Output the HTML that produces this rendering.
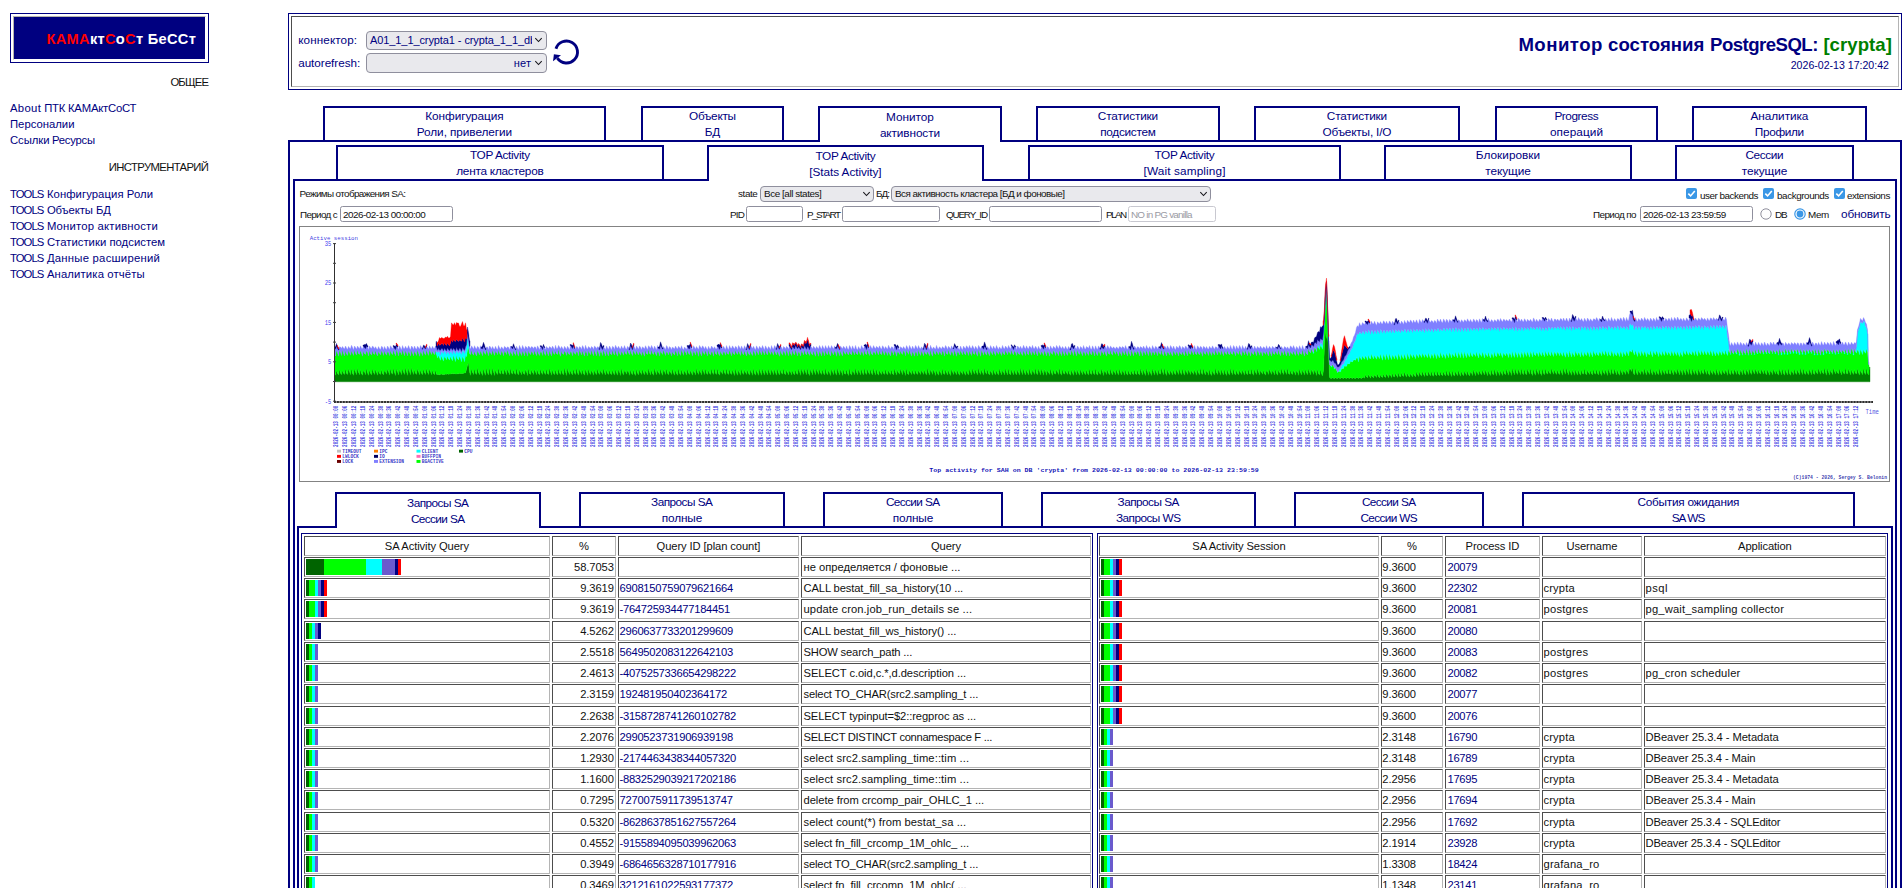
<!DOCTYPE html>
<html lang="ru"><head><meta charset="utf-8"><title>Monitor</title><style>
html,body{margin:0;padding:0;background:#fff;overflow:hidden;}
html{width:1904px;height:888px;}
body{width:1904px;height:888px;overflow:hidden;position:relative;font-family:"Liberation Sans",sans-serif;}
div,svg,span.t{position:absolute;box-sizing:content-box;}
span.t{white-space:pre;display:block;height:16px;}
</style></head><body>
<div id="root" style="left:0;top:0;width:1904px;height:888px;overflow:hidden;">
<div style="left:10px;top:13px;width:197px;height:48px;border:1px solid #000080;"></div>
<div style="left:13px;top:16px;width:191px;height:42px;border:1px solid;border-color:#b4b4ae #fff #fff #b4b4ae;background:#000080;"></div>
<span class="t" style="left:46.5px;top:30.94px;font-size:14.6px;font-weight:bold;letter-spacing:0.307px;line-height:16px;"><span style="color:#ff0000">КАМА</span><span style="color:#fff">кт</span><span style="color:#ff0000">С</span><span style="color:#fff">о</span><span style="color:#ff0000">С</span><span style="color:#fff">т БеССт</span></span>
<span class="t" style="left:170.39px;top:74.08px;font-size:11.3px;color:#111111;line-height:16px;letter-spacing:-0.815px;">ОБЩЕЕ</span>
<span class="t" style="left:10.00px;top:100.08px;font-size:11.3px;color:#000080;line-height:16px;letter-spacing:0.334px;">About</span>
<span class="t" style="left:44.20px;top:100.08px;font-size:11.3px;color:#000080;line-height:16px;letter-spacing:-0.202px;">ПТК</span>
<span class="t" style="left:68.00px;top:100.08px;font-size:11.3px;color:#000080;line-height:16px;letter-spacing:-0.215px;">КАМАктСоСТ</span>
<span class="t" style="left:10.00px;top:116.08px;font-size:11.3px;color:#000080;line-height:16px;">Персоналии</span>
<span class="t" style="left:10.00px;top:132.08px;font-size:11.3px;color:#000080;line-height:16px;letter-spacing:-0.047px;">Ссылки</span>
<span class="t" style="left:52.00px;top:132.08px;font-size:11.3px;color:#000080;line-height:16px;letter-spacing:-0.251px;">Ресурсы</span>
<span class="t" style="left:108.86px;top:159.08px;font-size:11.3px;color:#111111;line-height:16px;letter-spacing:-0.635px;">ИНСТРУМЕНТАРИЙ</span>
<span class="t" style="left:10.00px;top:186.08px;font-size:11.3px;color:#000080;line-height:16px;letter-spacing:-0.940px;">TOOLS</span>
<span class="t" style="left:46.90px;top:186.08px;font-size:11.3px;color:#000080;line-height:16px;letter-spacing:0.073px;">Конфигурация Роли</span>
<span class="t" style="left:10.00px;top:202.08px;font-size:11.3px;color:#000080;line-height:16px;letter-spacing:-0.940px;">TOOLS</span>
<span class="t" style="left:46.90px;top:202.08px;font-size:11.3px;color:#000080;line-height:16px;letter-spacing:-0.086px;">Объекты БД</span>
<span class="t" style="left:10.00px;top:218.08px;font-size:11.3px;color:#000080;line-height:16px;letter-spacing:-0.940px;">TOOLS</span>
<span class="t" style="left:46.90px;top:218.08px;font-size:11.3px;color:#000080;line-height:16px;letter-spacing:0.192px;">Монитор активности</span>
<span class="t" style="left:10.00px;top:234.08px;font-size:11.3px;color:#000080;line-height:16px;letter-spacing:-0.940px;">TOOLS</span>
<span class="t" style="left:46.90px;top:234.08px;font-size:11.3px;color:#000080;line-height:16px;letter-spacing:0.024px;">Статистики подсистем</span>
<span class="t" style="left:10.00px;top:250.08px;font-size:11.3px;color:#000080;line-height:16px;letter-spacing:-0.940px;">TOOLS</span>
<span class="t" style="left:46.90px;top:250.08px;font-size:11.3px;color:#000080;line-height:16px;letter-spacing:0.247px;">Данные расширений</span>
<span class="t" style="left:10.00px;top:266.08px;font-size:11.3px;color:#000080;line-height:16px;letter-spacing:-0.940px;">TOOLS</span>
<span class="t" style="left:46.90px;top:266.08px;font-size:11.3px;color:#000080;line-height:16px;letter-spacing:0.140px;">Аналитика отчёты</span>
<div style="left:288px;top:13px;width:1612px;height:75px;border:1px solid #000080;"></div>
<div style="left:291px;top:16px;width:1606px;height:69px;border:1px solid;border-color:#4d4d4d #b4b4b4 #b4b4b4 #4d4d4d;"></div>
<span class="t" style="left:298.20px;top:31.95px;font-size:11.7px;color:#000080;line-height:16px;letter-spacing:0.107px;">коннектор:</span>
<span class="t" style="left:298.20px;top:54.95px;font-size:11.7px;color:#000080;line-height:16px;letter-spacing:-0.036px;">autorefresh:</span>
<div style="left:366px;top:31px;width:179px;height:17px;border:1px solid #8f8f9d;border-radius:4px;background:#e9e9ed;overflow:hidden;"><svg width="9" height="6" viewBox="0 0 9 6" style="position:absolute;right:2.8px;top:5.0px"><path d="M1.3 1.2 L4.5 4.5 L7.7 1.2" fill="none" stroke="#15141a" stroke-width="1.05"/></svg></div>
<div style="left:366px;top:53px;width:179px;height:18px;border:1px solid #8f8f9d;border-radius:4px;background:#e9e9ed;overflow:hidden;"><svg width="9" height="6" viewBox="0 0 9 6" style="position:absolute;right:2.8px;top:5.5px"><path d="M1.3 1.2 L4.5 4.5 L7.7 1.2" fill="none" stroke="#15141a" stroke-width="1.05"/></svg></div>
<div style="left:369px;top:33px;width:162.5px;height:16px;overflow:hidden;">
<span class="t" style="left:1px;top:-0.81px;font-size:11px;color:#000080;line-height:16px;letter-spacing:-0.090px">A01_1_1_crypta1 - crypta_1_1_db</span></div>
<span class="t" style="left:513.71px;top:55.19px;font-size:11px;color:#000080;line-height:16px;letter-spacing:0.212px;">нет</span>
<svg style="left:540px;top:30px" width="50" height="46" viewBox="540 30 50 46"><path d="M555.98 48.78 A11.0 11.0 0 1 1 557.38 58.15" fill="none" stroke="#000080" stroke-width="2.9"/><polygon points="553.9,54.2 561.0,55.3 553.0,61.2" fill="#000080"/></svg>
<span class="t" style="left:1518.40px;top:36.56px;font-size:18.6px;color:#000080;line-height:16px;font-weight:bold;letter-spacing:0.484px;">Монитор</span>
<span class="t" style="left:1608.10px;top:36.56px;font-size:18.6px;color:#000080;line-height:16px;font-weight:bold;letter-spacing:0.015px;">состояния</span>
<span class="t" style="left:1710.10px;top:36.56px;font-size:18.6px;color:#000080;line-height:16px;font-weight:bold;letter-spacing:-0.535px;">PostgreSQL:</span>
<span class="t" style="left:1823.40px;top:36.56px;font-size:18.6px;color:#008000;line-height:16px;font-weight:bold;letter-spacing:0.036px;">[crypta]</span>
<span class="t" style="left:1790.74px;top:57.33px;font-size:10.6px;color:#000080;line-height:16px;letter-spacing:-0.009px;">2026-02-13 17:20:42</span>
<div style="left:288px;top:140px;width:1610px;height:1200px;border:2px solid #000080;z-index:2;"></div>
<div style="left:323px;top:106px;width:279px;height:32px;border:2px solid #000080;background:#fff;z-index:1;"></div>
<span class="t" style="left:425.31px;top:107.91px;font-size:11.8px;color:#000080;line-height:16px;letter-spacing:-0.074px;z-index:4;">Конфигурация</span>
<span class="t" style="left:416.81px;top:123.91px;font-size:11.8px;color:#000080;line-height:16px;letter-spacing:-0.073px;z-index:4;">Роли, привелегии</span>
<div style="left:641px;top:106px;width:139px;height:32px;border:2px solid #000080;background:#fff;z-index:1;"></div>
<span class="t" style="left:688.97px;top:107.91px;font-size:11.8px;color:#000080;line-height:16px;letter-spacing:-0.266px;z-index:4;">Объекты</span>
<span class="t" style="left:704.80px;top:123.91px;font-size:11.8px;color:#000080;line-height:16px;letter-spacing:-0.343px;z-index:4;">БД</span>
<div style="left:818px;top:106px;width:180px;height:34px;border:2px solid #000080;border-bottom:none;background:#fff;z-index:3;"></div>
<span class="t" style="left:886.08px;top:108.91px;font-size:11.8px;color:#000080;line-height:16px;letter-spacing:-0.033px;z-index:4;">Монитор</span>
<span class="t" style="left:879.92px;top:124.91px;font-size:11.8px;color:#000080;line-height:16px;letter-spacing:-0.105px;z-index:4;">активности</span>
<div style="left:1036px;top:106px;width:180px;height:32px;border:2px solid #000080;background:#fff;z-index:1;"></div>
<span class="t" style="left:1097.78px;top:107.91px;font-size:11.8px;color:#000080;line-height:16px;letter-spacing:-0.144px;z-index:4;">Статистики</span>
<span class="t" style="left:1100.20px;top:123.91px;font-size:11.8px;color:#000080;line-height:16px;letter-spacing:-0.291px;z-index:4;">подсистем</span>
<div style="left:1254px;top:106px;width:202px;height:32px;border:2px solid #000080;background:#fff;z-index:1;"></div>
<span class="t" style="left:1326.78px;top:107.91px;font-size:11.8px;color:#000080;line-height:16px;letter-spacing:-0.144px;z-index:4;">Статистики</span>
<span class="t" style="left:1322.51px;top:123.91px;font-size:11.8px;color:#000080;line-height:16px;letter-spacing:-0.180px;z-index:4;">Объекты, I/O</span>
<div style="left:1495px;top:106px;width:159px;height:32px;border:2px solid #000080;background:#fff;z-index:1;"></div>
<span class="t" style="left:1554.39px;top:107.91px;font-size:11.8px;color:#000080;line-height:16px;letter-spacing:-0.427px;z-index:4;">Progress</span>
<span class="t" style="left:1550.00px;top:123.91px;font-size:11.8px;color:#000080;line-height:16px;letter-spacing:0.059px;z-index:4;">операций</span>
<div style="left:1692px;top:106px;width:171px;height:32px;border:2px solid #000080;background:#fff;z-index:1;"></div>
<span class="t" style="left:1750.57px;top:107.91px;font-size:11.8px;color:#000080;line-height:16px;letter-spacing:-0.067px;z-index:4;">Аналитика</span>
<span class="t" style="left:1754.81px;top:123.91px;font-size:11.8px;color:#000080;line-height:16px;letter-spacing:-0.333px;z-index:4;">Профили</span>
<div style="left:293px;top:179px;width:1600px;height:1200px;border:2px solid #000080;z-index:2;"></div>
<div style="left:336px;top:145px;width:324px;height:32px;border:2px solid #000080;background:#fff;z-index:1;"></div>
<span class="t" style="left:469.93px;top:146.91px;font-size:11.8px;color:#000080;line-height:16px;letter-spacing:-0.336px;z-index:4;">TOP Activity</span>
<span class="t" style="left:456.23px;top:162.91px;font-size:11.8px;color:#000080;line-height:16px;letter-spacing:-0.243px;z-index:4;">лента кластеров</span>
<div style="left:707px;top:145px;width:273px;height:34px;border:2px solid #000080;border-bottom:none;background:#fff;z-index:3;"></div>
<span class="t" style="left:815.43px;top:147.91px;font-size:11.8px;color:#000080;line-height:16px;letter-spacing:-0.336px;z-index:4;">TOP Activity</span>
<span class="t" style="left:809.31px;top:163.91px;font-size:11.8px;color:#000080;line-height:16px;letter-spacing:-0.072px;z-index:4;">[Stats Activity]</span>
<div style="left:1028px;top:145px;width:309px;height:32px;border:2px solid #000080;background:#fff;z-index:1;"></div>
<span class="t" style="left:1154.43px;top:146.91px;font-size:11.8px;color:#000080;line-height:16px;letter-spacing:-0.336px;z-index:4;">TOP Activity</span>
<span class="t" style="left:1143.54px;top:162.91px;font-size:11.8px;color:#000080;line-height:16px;letter-spacing:0.122px;z-index:4;">[Wait sampling]</span>
<div style="left:1384px;top:145px;width:244px;height:32px;border:2px solid #000080;background:#fff;z-index:1;"></div>
<span class="t" style="left:1475.86px;top:146.91px;font-size:11.8px;color:#000080;line-height:16px;letter-spacing:0.021px;z-index:4;">Блокировки</span>
<span class="t" style="left:1485.20px;top:162.91px;font-size:11.8px;color:#000080;line-height:16px;letter-spacing:-0.049px;z-index:4;">текущие</span>
<div style="left:1675px;top:145px;width:175px;height:32px;border:2px solid #000080;background:#fff;z-index:1;"></div>
<span class="t" style="left:1745.52px;top:146.91px;font-size:11.8px;color:#000080;line-height:16px;letter-spacing:-0.420px;z-index:4;">Сессии</span>
<span class="t" style="left:1741.70px;top:162.91px;font-size:11.8px;color:#000080;line-height:16px;letter-spacing:-0.049px;z-index:4;">текущие</span>
<div style="left:297px;top:526px;width:1592px;height:1200px;border:2px solid #000080;z-index:2;"></div>
<div style="left:335px;top:492px;width:202px;height:34px;border:2px solid #000080;border-bottom:none;background:#fff;z-index:3;"></div>
<span class="t" style="left:407.08px;top:494.91px;font-size:11.8px;color:#000080;line-height:16px;letter-spacing:-0.531px;z-index:4;">Запросы SA</span>
<span class="t" style="left:410.92px;top:510.91px;font-size:11.8px;color:#000080;line-height:16px;letter-spacing:-0.615px;z-index:4;">Сессии SA</span>
<div style="left:579px;top:492px;width:202px;height:32px;border:2px solid #000080;background:#fff;z-index:1;"></div>
<span class="t" style="left:651.08px;top:493.91px;font-size:11.8px;color:#000080;line-height:16px;letter-spacing:-0.531px;z-index:4;">Запросы SA</span>
<span class="t" style="left:661.68px;top:509.91px;font-size:11.8px;color:#000080;line-height:16px;letter-spacing:-0.098px;z-index:4;">полные</span>
<div style="left:823px;top:492px;width:176px;height:32px;border:2px solid #000080;background:#fff;z-index:1;"></div>
<span class="t" style="left:885.92px;top:493.91px;font-size:11.8px;color:#000080;line-height:16px;letter-spacing:-0.615px;z-index:4;">Сессии SA</span>
<span class="t" style="left:892.68px;top:509.91px;font-size:11.8px;color:#000080;line-height:16px;letter-spacing:-0.098px;z-index:4;">полные</span>
<div style="left:1041px;top:492px;width:211px;height:32px;border:2px solid #000080;background:#fff;z-index:1;"></div>
<span class="t" style="left:1117.58px;top:493.91px;font-size:11.8px;color:#000080;line-height:16px;letter-spacing:-0.531px;z-index:4;">Запросы SA</span>
<span class="t" style="left:1115.96px;top:509.91px;font-size:11.8px;color:#000080;line-height:16px;letter-spacing:-0.532px;z-index:4;">Запросы WS</span>
<div style="left:1294px;top:492px;width:186px;height:32px;border:2px solid #000080;background:#fff;z-index:1;"></div>
<span class="t" style="left:1361.92px;top:493.91px;font-size:11.8px;color:#000080;line-height:16px;letter-spacing:-0.615px;z-index:4;">Сессии SA</span>
<span class="t" style="left:1360.40px;top:509.91px;font-size:11.8px;color:#000080;line-height:16px;letter-spacing:-0.645px;z-index:4;">Сессии WS</span>
<div style="left:1522px;top:492px;width:329px;height:32px;border:2px solid #000080;background:#fff;z-index:1;"></div>
<span class="t" style="left:1637.59px;top:493.91px;font-size:11.8px;color:#000080;line-height:16px;letter-spacing:-0.269px;z-index:4;">События ожидания</span>
<span class="t" style="left:1671.64px;top:509.91px;font-size:11.8px;color:#000080;line-height:16px;letter-spacing:-0.915px;z-index:4;">SA WS</span>
<span class="t" style="left:299.60px;top:185.57px;font-size:9.9px;color:#111111;line-height:16px;letter-spacing:-0.613px;z-index:5;">Режимы отображения SA:</span>
<span class="t" style="left:300.00px;top:206.57px;font-size:9.9px;color:#111111;line-height:16px;letter-spacing:-0.678px;z-index:5;">Период с</span>
<div style="left:340px;top:206px;width:111px;height:14px;border:1px solid #8f8f9d;border-radius:2.5px;background:#fff;z-index:5;"></div>
<span class="t" style="left:343.00px;top:206.57px;font-size:9.9px;color:#111111;line-height:16px;letter-spacing:-0.496px;z-index:5;">2026-02-13 00:00:00</span>
<span class="t" style="left:738.00px;top:185.57px;font-size:9.9px;color:#111111;line-height:16px;letter-spacing:-0.393px;z-index:5;">state</span>
<div style="left:760px;top:186px;width:112px;height:14px;border:1px solid #8f8f9d;border-radius:4px;background:#e9e9ed;z-index:5;"><svg width="9" height="6" viewBox="0 0 9 6" style="position:absolute;right:2.2px;top:4.3px"><path d="M1.3 1.2 L4.5 4.5 L7.7 1.2" fill="none" stroke="#15141a" stroke-width="1.05"/></svg></div>
<span class="t" style="left:764.00px;top:185.57px;font-size:9.9px;color:#111111;line-height:16px;letter-spacing:-0.430px;z-index:5;">Все [all states]</span>
<span class="t" style="left:876.00px;top:185.57px;font-size:9.9px;color:#111111;line-height:16px;letter-spacing:-0.984px;z-index:5;">БД:</span>
<div style="left:891px;top:186px;width:318px;height:14px;border:1px solid #8f8f9d;border-radius:4px;background:#e9e9ed;z-index:5;"><svg width="9" height="6" viewBox="0 0 9 6" style="position:absolute;right:2.2px;top:4.3px"><path d="M1.3 1.2 L4.5 4.5 L7.7 1.2" fill="none" stroke="#15141a" stroke-width="1.05"/></svg></div>
<span class="t" style="left:895.00px;top:185.57px;font-size:9.9px;color:#111111;line-height:16px;letter-spacing:-0.524px;z-index:5;">Вся активность кластера [БД и фоновые]</span>
<span class="t" style="left:730.00px;top:206.57px;font-size:9.9px;color:#111111;line-height:16px;letter-spacing:-0.834px;z-index:5;">PID</span>
<div style="left:746px;top:206px;width:55px;height:14px;border:1px solid #8f8f9d;border-radius:2.5px;background:#fff;z-index:5;"></div>
<span class="t" style="left:807.00px;top:206.57px;font-size:9.9px;color:#111111;line-height:16px;letter-spacing:-1.592px;z-index:5;">P_START</span>
<div style="left:842px;top:206px;width:96px;height:14px;border:1px solid #8f8f9d;border-radius:2.5px;background:#fff;z-index:5;"></div>
<span class="t" style="left:946.00px;top:206.57px;font-size:9.9px;color:#111111;line-height:16px;letter-spacing:-1.179px;z-index:5;">QUERY_ID</span>
<div style="left:989px;top:206px;width:111px;height:14px;border:1px solid #8f8f9d;border-radius:2.5px;background:#fff;z-index:5;"></div>
<span class="t" style="left:1106.00px;top:206.57px;font-size:9.9px;color:#111111;line-height:16px;letter-spacing:-1.591px;z-index:5;">PLAN</span>
<div style="left:1128px;top:206px;width:86px;height:14px;border:1px solid #c8c8d0;border-radius:2.5px;background:#fff;z-index:5;"></div>
<span class="t" style="left:1131.00px;top:206.57px;font-size:9.9px;color:#9a9aa3;line-height:16px;letter-spacing:-0.761px;z-index:5;">NO in PG vanilla</span>
<svg style="left:1685.5px;top:187.5px;z-index:5" width="11" height="11" viewBox="0 0 11 11"><rect x="0" y="0" width="11" height="11" rx="2" fill="#3a97e6"/><path d="M2.3 5.6 L4.6 7.9 L8.8 2.9" fill="none" stroke="#fff" stroke-width="1.6"/></svg>
<span class="t" style="left:1700.00px;top:187.57px;font-size:9.9px;color:#111111;line-height:16px;letter-spacing:-0.491px;z-index:5;">user backends</span>
<svg style="left:1763px;top:187.5px;z-index:5" width="11" height="11" viewBox="0 0 11 11"><rect x="0" y="0" width="11" height="11" rx="2" fill="#3a97e6"/><path d="M2.3 5.6 L4.6 7.9 L8.8 2.9" fill="none" stroke="#fff" stroke-width="1.6"/></svg>
<span class="t" style="left:1777.00px;top:187.57px;font-size:9.9px;color:#111111;line-height:16px;letter-spacing:-0.426px;z-index:5;">backgrounds</span>
<svg style="left:1834px;top:187.5px;z-index:5" width="11" height="11" viewBox="0 0 11 11"><rect x="0" y="0" width="11" height="11" rx="2" fill="#3a97e6"/><path d="M2.3 5.6 L4.6 7.9 L8.8 2.9" fill="none" stroke="#fff" stroke-width="1.6"/></svg>
<span class="t" style="left:1847.00px;top:187.57px;font-size:9.9px;color:#111111;line-height:16px;letter-spacing:-0.433px;z-index:5;">extensions</span>
<span class="t" style="left:1593.00px;top:206.57px;font-size:9.9px;color:#111111;line-height:16px;letter-spacing:-0.593px;z-index:5;">Период по</span>
<div style="left:1640px;top:206px;width:111px;height:14px;border:1px solid #8f8f9d;border-radius:2.5px;background:#fff;z-index:5;"></div>
<span class="t" style="left:1643.00px;top:206.57px;font-size:9.9px;color:#111111;line-height:16px;letter-spacing:-0.470px;z-index:5;">2026-02-13 23:59:59</span>
<svg style="left:1760px;top:207.6px;z-index:5" width="12" height="12" viewBox="0 0 12 12"><circle cx="6" cy="6" r="5.2" fill="#fdfdfe" stroke="#8f8f9d" stroke-width="1"/></svg>
<span class="t" style="left:1775.00px;top:206.57px;font-size:9.9px;color:#111111;line-height:16px;letter-spacing:-1.126px;z-index:5;">DB</span>
<svg style="left:1794px;top:207.6px;z-index:5" width="12" height="12" viewBox="0 0 12 12"><circle cx="6" cy="6" r="5.2" fill="#fff" stroke="#3a97e6" stroke-width="1.2"/><circle cx="6" cy="6" r="3.4" fill="#3a97e6"/></svg>
<span class="t" style="left:1808.00px;top:206.57px;font-size:9.9px;color:#111111;line-height:16px;letter-spacing:-0.333px;z-index:5;">Mem</span>
<span class="t" style="left:1841.00px;top:205.91px;font-size:11.8px;color:#000080;line-height:16px;letter-spacing:-0.164px;z-index:5;">обновить</span>
<div style="left:299px;top:226px;width:1589px;height:254px;border:1px solid #838383;background:#fff;z-index:5;overflow:hidden;"><svg style="left:0;top:0" width="1589" height="254" viewBox="0 0 1589 254"><path d="M35 154.8L35 148.1L35.5 148.1L36.5 142.9L37.5 146.3L38.5 147.9L39.5 141.8L40.5 145.9L41.5 147.8L42.5 143L43.5 146.1L44.5 147.5L45.5 141.1L46.5 146.3L47.5 147.6L48.5 141.3L49.5 144.6L50.5 147.8L51.5 140.8L52.5 146.2L53.5 148.3L54.5 141L55.5 144.4L56.5 147.7L57.5 140.5L58.5 144.9L59.5 147.7L60.5 142.2L61.5 146.4L62.5 148.3L63.5 142.7L64.5 144.4L65.5 147.8L66.5 140.4L67.5 145.6L68.5 148.3L69.5 142.4L70.5 145.9L71.5 148L72.5 141L73.5 144.9L74.5 147.5L75.5 141.9L76.5 145L77.5 148.2L78.5 143L79.5 146.2L80.5 147.4L81.5 142.3L82.5 146.2L83.5 147.9L84.5 142.8L85.5 144.5L86.5 147.3L87.5 141.4L88.5 144.2L89.5 148.1L90.5 140.7L91.5 145.7L92.5 147.3L93.5 140.5L94.5 145.3L95.5 148.4L96.5 140.9L97.5 144.3L98.5 148L99.5 142.5L100.5 144.3L101.5 147.7L102.5 141L103.5 144.7L104.5 147.5L105.5 140.1L106.5 144.2L107.5 148.3L108.5 140.6L109.5 144.2L110.5 147.8L111.5 140.1L112.5 144.3L113.5 147.5L114.5 142.2L115.5 145.9L116.5 147.4L117.5 141.3L118.5 144.3L119.5 147.8L120.5 142.5L121.5 146.1L122.5 147.8L123.5 141.4L124.5 145.2L125.5 147.5L126.5 140.7L127.5 145L128.5 147.6L129.5 141.6L130.5 144.4L131.5 147.8L132.5 142.7L133.5 146.3L134.5 147.7L135.5 142.6L136.5 147.3L137.5 147.5L138.5 147.5L139.5 147.7L140.5 147.3L141.5 147L142.5 147.4L143.5 147.4L144.5 147.4L145.5 146.9L146.5 147.3L147.5 146.8L148.5 147.2L149.5 147.1L150.5 147L151.5 146.8L152.5 146.6L153.5 146.8L154.5 146.6L155.5 146.9L156.5 146.9L157.5 146.7L158.5 146.7L159.5 146.2L160.5 146.4L161.5 146.5L162.5 146.4L163.5 146.2L164.5 145.9L165.5 146L166.5 142.2L167.5 138L168.5 135.2L169.5 144.8L170.5 148.3L171.5 141.1L172.5 145.3L173.5 147.6L174.5 141L175.5 145.9L176.5 147.6L177.5 140.1L178.5 145.3L179.5 147.7L180.5 142.7L181.5 145.8L182.5 148.4L183.5 140.9L184.5 145.3L185.5 148.3L186.5 140L187.5 145.4L188.5 147.9L189.5 140.1L190.5 146.1L191.5 148.3L192.5 140.3L193.5 144.4L194.5 148.4L195.5 142.2L196.5 145.7L197.5 147.6L198.5 140.2L199.5 145.8L200.5 147.3L201.5 141.8L202.5 146.2L203.5 147.3L204.5 141.5L205.5 144.2L206.5 147.7L207.5 141.4L208.5 144.7L209.5 147.7L210.5 140.2L211.5 145.7L212.5 147.3L213.5 142.2L214.5 146.1L215.5 147.4L216.5 140.3L217.5 146.1L218.5 148L219.5 142.3L220.5 144.7L221.5 147.8L222.5 142.9L223.5 146.2L224.5 147.4L225.5 142.3L226.5 144.2L227.5 148.4L228.5 140.3L229.5 146.5L230.5 147.5L231.5 142.3L232.5 145.2L233.5 147.6L234.5 141.7L235.5 144.6L236.5 147.7L237.5 142.3L238.5 146.2L239.5 147.8L240.5 141.2L241.5 145.4L242.5 147.4L243.5 142.3L244.5 145.7L245.5 147.6L246.5 141L247.5 146.4L248.5 147.6L249.5 140.8L250.5 144.2L251.5 148.2L252.5 142.2L253.5 146L254.5 147.7L255.5 141.9L256.5 146.1L257.5 148L258.5 140.8L259.5 145.7L260.5 147.6L261.5 141.9L262.5 146.1L263.5 148L264.5 140.1L265.5 144.5L266.5 148.4L267.5 140.2L268.5 144.4L269.5 147.5L270.5 143L271.5 145.9L272.5 148L273.5 141.2L274.5 145.7L275.5 147.6L276.5 140.2L277.5 145.4L278.5 148L279.5 141.6L280.5 144.6L281.5 147.5L282.5 142.1L283.5 146.3L284.5 148.2L285.5 141.4L286.5 144.4L287.5 148.3L288.5 140.9L289.5 145.5L290.5 147.6L291.5 142.7L292.5 145.1L293.5 148.2L294.5 142.6L295.5 145.7L296.5 147.8L297.5 141.1L298.5 145.4L299.5 147.4L300.5 142.8L301.5 145.1L302.5 147.4L303.5 140.7L304.5 145.1L305.5 148L306.5 142.3L307.5 146L308.5 147.6L309.5 142.5L310.5 146.3L311.5 147.8L312.5 142.6L313.5 145.8L314.5 148.1L315.5 141.8L316.5 145.6L317.5 148.2L318.5 141.8L319.5 144.4L320.5 148.4L321.5 140.3L322.5 145.6L323.5 148.1L324.5 142.8L325.5 144.2L326.5 147.3L327.5 143L328.5 144.3L329.5 148.3L330.5 141.9L331.5 146L332.5 147.8L333.5 142.3L334.5 146.4L335.5 148.4L336.5 141.2L337.5 145.8L338.5 147.9L339.5 141.7L340.5 145.3L341.5 147.5L342.5 141.6L343.5 145.5L344.5 147.8L345.5 142.9L346.5 145.3L347.5 148L348.5 140.4L349.5 144.5L350.5 147.9L351.5 142.6L352.5 146.3L353.5 148.3L354.5 140.6L355.5 144.3L356.5 147.8L357.5 142.6L358.5 144.9L359.5 147.5L360.5 141.1L361.5 145.2L362.5 148.3L363.5 141.9L364.5 144.1L365.5 147.5L366.5 140.8L367.5 145.9L368.5 147.8L369.5 143.1L370.5 145L371.5 147.4L372.5 141.1L373.5 145.6L374.5 148.2L375.5 142.5L376.5 146.2L377.5 148.3L378.5 140.4L379.5 145.9L380.5 147.8L381.5 141.7L382.5 145.9L383.5 147.8L384.5 142.9L385.5 145.2L386.5 148.2L387.5 141.1L388.5 145.7L389.5 147.4L390.5 143.1L391.5 145.4L392.5 148.2L393.5 143L394.5 144.8L395.5 148.1L396.5 140.6L397.5 145L398.5 147.4L399.5 142.4L400.5 144.7L401.5 148.1L402.5 141.1L403.5 144.2L404.5 147.6L405.5 140.8L406.5 146L407.5 147.4L408.5 142.8L409.5 146.1L410.5 147.6L411.5 140.8L412.5 145.6L413.5 147.4L414.5 140.2L415.5 146L416.5 147.4L417.5 140.5L418.5 146.2L419.5 148.2L420.5 143.1L421.5 144.8L422.5 147.3L423.5 141.2L424.5 145.4L425.5 147.6L426.5 140.4L427.5 146.1L428.5 147.5L429.5 141.6L430.5 146L431.5 147.5L432.5 142.2L433.5 145.3L434.5 148.4L435.5 140.6L436.5 145.5L437.5 148.3L438.5 142.5L439.5 145.3L440.5 148.2L441.5 140.7L442.5 145.7L443.5 147.4L444.5 142.6L445.5 145.1L446.5 147.4L447.5 142.2L448.5 146.1L449.5 148.1L450.5 142.1L451.5 144.8L452.5 148.3L453.5 140.6L454.5 146L455.5 148.2L456.5 141.9L457.5 145.3L458.5 148.3L459.5 140.8L460.5 145.1L461.5 148.2L462.5 140.7L463.5 144.9L464.5 148.1L465.5 141.8L466.5 145L467.5 147.9L468.5 141L469.5 144.9L470.5 147.9L471.5 141.4L472.5 144.3L473.5 147.8L474.5 141.5L475.5 145.2L476.5 148.2L477.5 140.7L478.5 145.6L479.5 148L480.5 141.8L481.5 145.8L482.5 147.3L483.5 140.6L484.5 146.2L485.5 147.7L486.5 142.4L487.5 145L488.5 147.9L489.5 142.7L490.5 144.5L491.5 148.1L492.5 143.1L493.5 145.9L494.5 147.9L495.5 142L496.5 146.3L497.5 147.5L498.5 141.1L499.5 144.2L500.5 148.3L501.5 140.7L502.5 144.3L503.5 147.4L504.5 141L505.5 144.5L506.5 147.8L507.5 140.3L508.5 145.9L509.5 148.4L510.5 141.6L511.5 144.4L512.5 147.9L513.5 140.5L514.5 144.2L515.5 147.7L516.5 141L517.5 144.2L518.5 147.4L519.5 141.2L520.5 145.6L521.5 147.5L522.5 141.8L523.5 145.8L524.5 147.9L525.5 140.1L526.5 145.7L527.5 147.8L528.5 143L529.5 145.2L530.5 148.4L531.5 141.2L532.5 144.3L533.5 147.7L534.5 141L535.5 145.4L536.5 148.2L537.5 140.2L538.5 144.5L539.5 148.1L540.5 142.1L541.5 144.3L542.5 148.4L543.5 141.3L544.5 146.4L545.5 147.3L546.5 141.8L547.5 146L548.5 148.4L549.5 140.1L550.5 146.2L551.5 148.2L552.5 143L553.5 144.5L554.5 147.7L555.5 140.2L556.5 144.8L557.5 147.7L558.5 142.1L559.5 144.4L560.5 148L561.5 141L562.5 145.6L563.5 148L564.5 140.1L565.5 145.8L566.5 147.6L567.5 141.2L568.5 145.1L569.5 147.4L570.5 141.2L571.5 145.8L572.5 147.9L573.5 140.3L574.5 144.6L575.5 148.1L576.5 141L577.5 146.3L578.5 148.2L579.5 142.4L580.5 145.4L581.5 147.6L582.5 142.9L583.5 145.9L584.5 147.4L585.5 141.3L586.5 146L587.5 147.8L588.5 142.7L589.5 145.6L590.5 147.5L591.5 142L592.5 146.4L593.5 147.9L594.5 140.7L595.5 144.7L596.5 148.1L597.5 142.6L598.5 145.2L599.5 147.3L600.5 141.2L601.5 144.2L602.5 147.7L603.5 141.9L604.5 144.2L605.5 148.4L606.5 140.3L607.5 146.4L608.5 147.7L609.5 142.7L610.5 144.9L611.5 147.6L612.5 142.3L613.5 146.1L614.5 147.6L615.5 142.5L616.5 146L617.5 147.4L618.5 142.8L619.5 145L620.5 147.5L621.5 142.7L622.5 144.8L623.5 147.4L624.5 142.6L625.5 145.7L626.5 148.1L627.5 140L628.5 144.9L629.5 148.1L630.5 142L631.5 144.3L632.5 147.4L633.5 142.2L634.5 144.6L635.5 148.4L636.5 142.5L637.5 146L638.5 148.2L639.5 142.5L640.5 145L641.5 148.2L642.5 140.6L643.5 146.3L644.5 147.6L645.5 142.1L646.5 145.3L647.5 147.9L648.5 142.5L649.5 146.1L650.5 148.4L651.5 141.5L652.5 144.5L653.5 147.6L654.5 142.9L655.5 145.3L656.5 147.8L657.5 142.4L658.5 145.9L659.5 148.3L660.5 143.1L661.5 145.2L662.5 147.4L663.5 142.7L664.5 145.8L665.5 148.3L666.5 142.7L667.5 146.1L668.5 148L669.5 141.5L670.5 144.6L671.5 148L672.5 140.6L673.5 144.5L674.5 147.3L675.5 141.8L676.5 145.2L677.5 147.8L678.5 140.1L679.5 145L680.5 147.4L681.5 142.3L682.5 145.2L683.5 148.1L684.5 140.1L685.5 144.9L686.5 147.3L687.5 141.7L688.5 146.2L689.5 148L690.5 142.9L691.5 145L692.5 148.2L693.5 141.4L694.5 145.7L695.5 147.8L696.5 143.1L697.5 145.9L698.5 148.1L699.5 140.7L700.5 144.4L701.5 148L702.5 142.8L703.5 144.7L704.5 148L705.5 140.4L706.5 144.7L707.5 147.9L708.5 140.2L709.5 146.5L710.5 147.9L711.5 141.8L712.5 145L713.5 147.9L714.5 141.9L715.5 145.7L716.5 147.9L717.5 142.2L718.5 145.1L719.5 148.1L720.5 140.1L721.5 144.3L722.5 147.8L723.5 140.7L724.5 145.3L725.5 148L726.5 142L727.5 145.2L728.5 148L729.5 140.4L730.5 145.4L731.5 148L732.5 142.6L733.5 144.5L734.5 147.4L735.5 140L736.5 146.1L737.5 147.8L738.5 141.1L739.5 144.1L740.5 148L741.5 140.9L742.5 144.5L743.5 148.2L744.5 142.3L745.5 144.1L746.5 148.3L747.5 142.8L748.5 145.2L749.5 147.5L750.5 140.7L751.5 145.6L752.5 148.3L753.5 142L754.5 146.3L755.5 147.3L756.5 142.3L757.5 144.5L758.5 147.5L759.5 140.1L760.5 145.9L761.5 148.2L762.5 141.6L763.5 146.1L764.5 147.3L765.5 142.8L766.5 145.5L767.5 147.5L768.5 142.5L769.5 146.4L770.5 148.3L771.5 142.3L772.5 145.4L773.5 148.3L774.5 141.9L775.5 144.2L776.5 147.9L777.5 142.3L778.5 145.6L779.5 148.2L780.5 141.5L781.5 144.7L782.5 147.8L783.5 142.9L784.5 145.7L785.5 147.8L786.5 142.2L787.5 145.9L788.5 148.1L789.5 140.7L790.5 146.2L791.5 147.6L792.5 141.8L793.5 145.9L794.5 147.7L795.5 140.3L796.5 146.4L797.5 148.2L798.5 143L799.5 146.1L800.5 147.6L801.5 141L802.5 144.5L803.5 148.4L804.5 143L805.5 144.6L806.5 147.6L807.5 141.9L808.5 145.8L809.5 147.9L810.5 140.8L811.5 145.4L812.5 147.9L813.5 142.7L814.5 144.8L815.5 147.8L816.5 141.4L817.5 145.6L818.5 148.1L819.5 141L820.5 145.3L821.5 148L822.5 142.7L823.5 144.5L824.5 148.2L825.5 141.7L826.5 146.2L827.5 148.2L828.5 142.5L829.5 146.2L830.5 148L831.5 143.1L832.5 146.3L833.5 147.8L834.5 141.8L835.5 146.5L836.5 147.7L837.5 142.3L838.5 146.4L839.5 148.1L840.5 140.5L841.5 144.6L842.5 148.1L843.5 142.1L844.5 145.6L845.5 148.4L846.5 140.5L847.5 144.2L848.5 148.3L849.5 142.9L850.5 145.4L851.5 148.4L852.5 140.8L853.5 144.5L854.5 148.1L855.5 141.8L856.5 144.9L857.5 148.3L858.5 141.4L859.5 146.3L860.5 147.3L861.5 140.1L862.5 144.6L863.5 147.7L864.5 140.1L865.5 145.8L866.5 148.4L867.5 141.7L868.5 145.6L869.5 147.8L870.5 142.8L871.5 145.2L872.5 148.1L873.5 142.3L874.5 145.9L875.5 147.8L876.5 141.8L877.5 144.4L878.5 147.6L879.5 140.9L880.5 145.5L881.5 147.8L882.5 140.7L883.5 145.6L884.5 148.2L885.5 141.8L886.5 144.4L887.5 147.4L888.5 142.1L889.5 144.5L890.5 147.6L891.5 143L892.5 145.2L893.5 147.4L894.5 142.5L895.5 145.1L896.5 148.3L897.5 141.4L898.5 145.6L899.5 147.8L900.5 140.1L901.5 146.1L902.5 147.5L903.5 140.5L904.5 145.4L905.5 148L906.5 142.9L907.5 144.4L908.5 148.2L909.5 141.3L910.5 146.5L911.5 148.4L912.5 143L913.5 145.8L914.5 148.1L915.5 140.1L916.5 145.2L917.5 147.5L918.5 142L919.5 144.4L920.5 148.1L921.5 141.5L922.5 145.2L923.5 148L924.5 141.6L925.5 145.9L926.5 148.4L927.5 141.7L928.5 146.1L929.5 148.1L930.5 140.2L931.5 145.1L932.5 147.8L933.5 140.7L934.5 146.3L935.5 148.1L936.5 142.6L937.5 146L938.5 147.7L939.5 142.5L940.5 145.1L941.5 147.4L942.5 142.5L943.5 145L944.5 148.1L945.5 141.8L946.5 146.3L947.5 147.7L948.5 141.2L949.5 146.4L950.5 147.3L951.5 140.8L952.5 146.1L953.5 148.3L954.5 141.4L955.5 144.9L956.5 147.6L957.5 140.7L958.5 144.6L959.5 148.1L960.5 142.7L961.5 144.9L962.5 147.3L963.5 142.8L964.5 146.3L965.5 148.2L966.5 142.7L967.5 144.3L968.5 147.5L969.5 141.6L970.5 144.6L971.5 147.4L972.5 142.9L973.5 144.4L974.5 148L975.5 141.2L976.5 145.9L977.5 148.2L978.5 142.2L979.5 145.1L980.5 147.4L981.5 140.5L982.5 145.3L983.5 147.6L984.5 141.3L985.5 144.4L986.5 147.4L987.5 140L988.5 146.2L989.5 147.4L990.5 142.8L991.5 146.3L992.5 147.6L993.5 143L994.5 144.8L995.5 148.2L996.5 143.1L997.5 144.4L998.5 148.3L999.5 141L1000.5 145.3L1001.5 147.9L1002.5 142.4L1003.5 144.7L1004.5 148.1L1005.5 141.5L1006.5 145.6L1007.5 147.7L1008.5 141L1009.5 144.8L1010.5 148L1011.5 141.9L1012.5 144.1L1013.5 147.4L1014.5 142.4L1015.5 144.5L1016.5 148.4L1017.5 141.4L1018.5 146.5L1019.5 148.1L1020.5 142.1L1021.5 146.5L1022.5 149L1023.5 142.9L1024.5 117.3L1025.5 103.5L1026.5 111.4L1027.5 107.5L1028.5 123.2L1029.5 150.3L1030.5 151.3L1031.5 151.5L1032.5 150.6L1033.5 151.2L1034.5 151.5L1035.5 150.5L1036.5 151.2L1037.5 151.6L1038.5 150.3L1039.5 151.2L1040.5 151.5L1041.5 150.4L1042.5 151.1L1043.5 151.5L1044.5 150.4L1045.5 151L1046.5 151.6L1047.5 150.4L1048.5 151L1049.5 151.5L1050.5 150.4L1051.5 150.9L1052.5 151.5L1053.5 150.5L1054.5 151.2L1055.5 151.4L1056.5 150.2L1057.5 150.8L1058.5 151.4L1059.5 150.4L1060.5 150.9L1061.5 151.5L1062.5 150.4L1063.5 149.9L1064.5 151.2L1065.5 147.6L1066.5 149.7L1067.5 150.8L1068.5 147.3L1069.5 149L1070.5 151.2L1071.5 147.9L1072.5 149.4L1073.5 151L1074.5 147.7L1075.5 148.7L1076.5 150.4L1077.5 146.6L1078.5 149.5L1079.5 150.9L1080.5 147.5L1081.5 149.7L1082.5 150.5L1083.5 146.8L1084.5 149.5L1085.5 150.5L1086.5 146.5L1087.5 148.3L1088.5 150.7L1089.5 146.9L1090.5 148L1091.5 150.6L1092.5 145.7L1093.5 149.2L1094.5 150L1095.5 146L1096.5 148.3L1097.5 150.4L1098.5 145.1L1099.5 149L1100.5 150L1101.5 145.6L1102.5 148.4L1103.5 149.6L1104.5 144.5L1105.5 147.8L1106.5 150.1L1107.5 145.8L1108.5 148.4L1109.5 150.2L1110.5 146.2L1111.5 148.1L1112.5 150.1L1113.5 146L1114.5 148.3L1115.5 149.9L1116.5 144.2L1117.5 146.9L1118.5 149.4L1119.5 144.2L1120.5 147.2L1121.5 149.1L1122.5 143.8L1123.5 146.9L1124.5 149.4L1125.5 143.8L1126.5 147.9L1127.5 149L1128.5 143.7L1129.5 146.7L1130.5 149L1131.5 143.6L1132.5 148L1133.5 149.3L1134.5 143.3L1135.5 147.6L1136.5 148.9L1137.5 143.3L1138.5 147.4L1139.5 148.8L1140.5 144L1141.5 147.7L1142.5 148.7L1143.5 144.3L1144.5 146.9L1145.5 148.9L1146.5 142.6L1147.5 147.1L1148.5 149L1149.5 142.9L1150.5 146.3L1151.5 149.4L1152.5 142.6L1153.5 147.7L1154.5 149.1L1155.5 143.8L1156.5 146.4L1157.5 148.7L1158.5 142.6L1159.5 146.6L1160.5 149.2L1161.5 143.7L1162.5 147L1163.5 148.8L1164.5 143.6L1165.5 145.7L1166.5 148.4L1167.5 143.3L1168.5 146.9L1169.5 148.9L1170.5 144.4L1171.5 145.5L1172.5 148.6L1173.5 142.1L1174.5 145.3L1175.5 148.7L1176.5 143.2L1177.5 145.5L1178.5 148.1L1179.5 143.1L1180.5 146L1181.5 148.1L1182.5 142.2L1183.5 145.2L1184.5 148L1185.5 142.3L1186.5 145.3L1187.5 148.8L1188.5 142.9L1189.5 146.4L1190.5 148.6L1191.5 141.5L1192.5 146.5L1193.5 148.2L1194.5 141.3L1195.5 145.2L1196.5 148.7L1197.5 142.6L1198.5 145L1199.5 148.4L1200.5 143.3L1201.5 145.8L1202.5 148.4L1203.5 142.3L1204.5 146.2L1205.5 147.8L1206.5 141.3L1207.5 144.7L1208.5 148.2L1209.5 142.5L1210.5 144.6L1211.5 148.5L1212.5 140.3L1213.5 144.7L1214.5 147.9L1215.5 140.4L1216.5 145.5L1217.5 147.5L1218.5 141.3L1219.5 144.6L1220.5 147.8L1221.5 140.3L1222.5 145.9L1223.5 147.7L1224.5 141.3L1225.5 146.3L1226.5 148L1227.5 141.1L1228.5 144.3L1229.5 147.3L1230.5 140.5L1231.5 146.2L1232.5 148.4L1233.5 141L1234.5 145.8L1235.5 148.3L1236.5 140.6L1237.5 144.6L1238.5 147.4L1239.5 141.2L1240.5 146.3L1241.5 148.4L1242.5 140.6L1243.5 146L1244.5 147.8L1245.5 140.4L1246.5 145.7L1247.5 147.3L1248.5 142.8L1249.5 145.4L1250.5 147.3L1251.5 140.5L1252.5 144.4L1253.5 147.3L1254.5 142.2L1255.5 145.4L1256.5 147.5L1257.5 142.2L1258.5 145.9L1259.5 147.5L1260.5 141.4L1261.5 145L1262.5 148.2L1263.5 140.1L1264.5 144.2L1265.5 147.3L1266.5 140L1267.5 144.8L1268.5 148.1L1269.5 142.3L1270.5 144.9L1271.5 148.3L1272.5 142.6L1273.5 144.8L1274.5 148.3L1275.5 141.7L1276.5 145.6L1277.5 148.1L1278.5 142.2L1279.5 146.1L1280.5 148.2L1281.5 141.9L1282.5 146.3L1283.5 147.3L1284.5 140.6L1285.5 146.2L1286.5 148L1287.5 142.4L1288.5 145.3L1289.5 147.4L1290.5 142.7L1291.5 146.2L1292.5 147.9L1293.5 141.6L1294.5 145.9L1295.5 147.3L1296.5 141.4L1297.5 145.9L1298.5 147.9L1299.5 142.1L1300.5 146.1L1301.5 148.4L1302.5 141.6L1303.5 145.2L1304.5 147.4L1305.5 141.9L1306.5 145L1307.5 148.4L1308.5 140.7L1309.5 144.8L1310.5 147.8L1311.5 139.9L1312.5 145.9L1313.5 147.3L1314.5 141L1315.5 144.5L1316.5 147.9L1317.5 142.3L1318.5 146.1L1319.5 148.3L1320.5 141.6L1321.5 144.4L1322.5 147.9L1323.5 143L1324.5 144.4L1325.5 147.4L1326.5 142.3L1327.5 144.3L1328.5 147.3L1329.5 141L1330.5 141.7L1331.5 144.4L1332.5 140L1333.5 146L1334.5 147.9L1335.5 140L1336.5 145.6L1337.5 148.1L1338.5 142.6L1339.5 145L1340.5 147.5L1341.5 143L1342.5 144.1L1343.5 147.6L1344.5 140.6L1345.5 145L1346.5 148.1L1347.5 142.2L1348.5 144.8L1349.5 147.5L1350.5 140.1L1351.5 145.2L1352.5 148.1L1353.5 142.8L1354.5 144.5L1355.5 148.1L1356.5 142.6L1357.5 145.9L1358.5 147.7L1359.5 140.6L1360.5 145.1L1361.5 148.2L1362.5 141.7L1363.5 144.7L1364.5 147.5L1365.5 142.1L1366.5 145.9L1367.5 147.2L1368.5 140.8L1369.5 146.3L1370.5 147.3L1371.5 141.4L1372.5 145.1L1373.5 147.9L1374.5 142.3L1375.5 144.6L1376.5 147.3L1377.5 141L1378.5 144.2L1379.5 148L1380.5 141.7L1381.5 144.1L1382.5 148.2L1383.5 141.4L1384.5 144.6L1385.5 148.1L1386.5 140.7L1387.5 144.1L1388.5 147.5L1389.5 140L1390.5 145.8L1391.5 148.2L1392.5 140.7L1393.5 144.4L1394.5 147.4L1395.5 142L1396.5 145.5L1397.5 148.2L1398.5 141L1399.5 144.2L1400.5 147.5L1401.5 141.8L1402.5 145.6L1403.5 147.3L1404.5 140.7L1405.5 144.3L1406.5 147.4L1407.5 141.9L1408.5 146.3L1409.5 148.3L1410.5 141.8L1411.5 144.9L1412.5 147.5L1413.5 142.7L1414.5 145.2L1415.5 148.1L1416.5 140.8L1417.5 145L1418.5 148.2L1419.5 141.9L1420.5 145.8L1421.5 147.9L1422.5 142.1L1423.5 145.1L1424.5 147.2L1425.5 142.4L1426.5 144.3L1427.5 148.3L1428.5 140L1429.5 146L1430.5 147.8L1431.5 141.7L1432.5 146.1L1433.5 147.5L1434.5 141.4L1435.5 144.2L1436.5 147.5L1437.5 142.1L1438.5 146.2L1439.5 148.2L1440.5 142.6L1441.5 144L1442.5 148L1443.5 141.1L1444.5 145.8L1445.5 147.9L1446.5 141.6L1447.5 144.1L1448.5 147.6L1449.5 140.8L1450.5 145.5L1451.5 147.5L1452.5 141.2L1453.5 144.6L1454.5 147.2L1455.5 141.2L1456.5 144.1L1457.5 147.3L1458.5 141.9L1459.5 145.4L1460.5 147.2L1461.5 141.5L1462.5 144.2L1463.5 147.2L1464.5 141.8L1465.5 145.7L1466.5 147.9L1467.5 141.9L1468.5 144.7L1469.5 148.2L1470.5 142.8L1471.5 144.6L1472.5 147.7L1473.5 141.6L1474.5 144.3L1475.5 147.3L1476.5 142.9L1477.5 146.3L1478.5 148.2L1479.5 140.9L1480.5 144L1481.5 148L1482.5 140.8L1483.5 146L1484.5 148.2L1485.5 141.6L1486.5 145.3L1487.5 147.9L1488.5 140.1L1489.5 145.9L1490.5 148.3L1491.5 143L1492.5 144.7L1493.5 147.8L1494.5 141L1495.5 145.7L1496.5 147.4L1497.5 142L1498.5 144.9L1499.5 147.7L1500.5 140L1501.5 144.5L1502.5 147.6L1503.5 140.5L1504.5 146L1505.5 147.4L1506.5 142.7L1507.5 145.8L1508.5 147.8L1509.5 141.6L1510.5 144.5L1511.5 147.8L1512.5 140.6L1513.5 146.2L1514.5 147.4L1515.5 142.2L1516.5 145.2L1517.5 147.2L1518.5 140.7L1519.5 144.1L1520.5 147.3L1521.5 141.9L1522.5 145.2L1523.5 147.2L1524.5 139.9L1525.5 145L1526.5 148.2L1527.5 140.6L1528.5 144.4L1529.5 148.1L1530.5 142.4L1531.5 145.1L1532.5 147.6L1533.5 140.2L1534.5 144L1535.5 147.1L1536.5 142.9L1537.5 145.6L1538.5 147.1L1539.5 140.9L1540.5 144.7L1541.5 147.9L1542.5 142.7L1543.5 145.8L1544.5 147.3L1545.5 139.8L1546.5 146.3L1547.5 147.1L1548.5 141.6L1549.5 144.3L1550.5 148L1551.5 142.1L1552.5 145.5L1553.5 147.4L1554.5 142.6L1555.5 145.9L1556.5 147.1L1557.5 140.9L1558.5 145.4L1559.5 148.1L1560.5 142.4L1561.5 145.3L1562.5 147.8L1563.5 140.3L1564.5 145.4L1565.5 147.5L1566.5 140L1567.5 146.1L1568.5 147.7L1569.5 140L1570 140L1570 154.8L1569.5 154.8L1568.5 154.8L1567.5 154.8L1566.5 154.8L1565.5 154.8L1564.5 154.8L1563.5 154.8L1562.5 154.8L1561.5 154.8L1560.5 154.8L1559.5 154.8L1558.5 154.8L1557.5 154.8L1556.5 154.8L1555.5 154.8L1554.5 154.8L1553.5 154.8L1552.5 154.8L1551.5 154.8L1550.5 154.8L1549.5 154.8L1548.5 154.8L1547.5 154.8L1546.5 154.8L1545.5 154.8L1544.5 154.8L1543.5 154.8L1542.5 154.8L1541.5 154.8L1540.5 154.8L1539.5 154.8L1538.5 154.8L1537.5 154.8L1536.5 154.8L1535.5 154.8L1534.5 154.8L1533.5 154.8L1532.5 154.8L1531.5 154.8L1530.5 154.8L1529.5 154.8L1528.5 154.8L1527.5 154.8L1526.5 154.8L1525.5 154.8L1524.5 154.8L1523.5 154.8L1522.5 154.8L1521.5 154.8L1520.5 154.8L1519.5 154.8L1518.5 154.8L1517.5 154.8L1516.5 154.8L1515.5 154.8L1514.5 154.8L1513.5 154.8L1512.5 154.8L1511.5 154.8L1510.5 154.8L1509.5 154.8L1508.5 154.8L1507.5 154.8L1506.5 154.8L1505.5 154.8L1504.5 154.8L1503.5 154.8L1502.5 154.8L1501.5 154.8L1500.5 154.8L1499.5 154.8L1498.5 154.8L1497.5 154.8L1496.5 154.8L1495.5 154.8L1494.5 154.8L1493.5 154.8L1492.5 154.8L1491.5 154.8L1490.5 154.8L1489.5 154.8L1488.5 154.8L1487.5 154.8L1486.5 154.8L1485.5 154.8L1484.5 154.8L1483.5 154.8L1482.5 154.8L1481.5 154.8L1480.5 154.8L1479.5 154.8L1478.5 154.8L1477.5 154.8L1476.5 154.8L1475.5 154.8L1474.5 154.8L1473.5 154.8L1472.5 154.8L1471.5 154.8L1470.5 154.8L1469.5 154.8L1468.5 154.8L1467.5 154.8L1466.5 154.8L1465.5 154.8L1464.5 154.8L1463.5 154.8L1462.5 154.8L1461.5 154.8L1460.5 154.8L1459.5 154.8L1458.5 154.8L1457.5 154.8L1456.5 154.8L1455.5 154.8L1454.5 154.8L1453.5 154.8L1452.5 154.8L1451.5 154.8L1450.5 154.8L1449.5 154.8L1448.5 154.8L1447.5 154.8L1446.5 154.8L1445.5 154.8L1444.5 154.8L1443.5 154.8L1442.5 154.8L1441.5 154.8L1440.5 154.8L1439.5 154.8L1438.5 154.8L1437.5 154.8L1436.5 154.8L1435.5 154.8L1434.5 154.8L1433.5 154.8L1432.5 154.8L1431.5 154.8L1430.5 154.8L1429.5 154.8L1428.5 154.8L1427.5 154.8L1426.5 154.8L1425.5 154.8L1424.5 154.8L1423.5 154.8L1422.5 154.8L1421.5 154.8L1420.5 154.8L1419.5 154.8L1418.5 154.8L1417.5 154.8L1416.5 154.8L1415.5 154.8L1414.5 154.8L1413.5 154.8L1412.5 154.8L1411.5 154.8L1410.5 154.8L1409.5 154.8L1408.5 154.8L1407.5 154.8L1406.5 154.8L1405.5 154.8L1404.5 154.8L1403.5 154.8L1402.5 154.8L1401.5 154.8L1400.5 154.8L1399.5 154.8L1398.5 154.8L1397.5 154.8L1396.5 154.8L1395.5 154.8L1394.5 154.8L1393.5 154.8L1392.5 154.8L1391.5 154.8L1390.5 154.8L1389.5 154.8L1388.5 154.8L1387.5 154.8L1386.5 154.8L1385.5 154.8L1384.5 154.8L1383.5 154.8L1382.5 154.8L1381.5 154.8L1380.5 154.8L1379.5 154.8L1378.5 154.8L1377.5 154.8L1376.5 154.8L1375.5 154.8L1374.5 154.8L1373.5 154.8L1372.5 154.8L1371.5 154.8L1370.5 154.8L1369.5 154.8L1368.5 154.8L1367.5 154.8L1366.5 154.8L1365.5 154.8L1364.5 154.8L1363.5 154.8L1362.5 154.8L1361.5 154.8L1360.5 154.8L1359.5 154.8L1358.5 154.8L1357.5 154.8L1356.5 154.8L1355.5 154.8L1354.5 154.8L1353.5 154.8L1352.5 154.8L1351.5 154.8L1350.5 154.8L1349.5 154.8L1348.5 154.8L1347.5 154.8L1346.5 154.8L1345.5 154.8L1344.5 154.8L1343.5 154.8L1342.5 154.8L1341.5 154.8L1340.5 154.8L1339.5 154.8L1338.5 154.8L1337.5 154.8L1336.5 154.8L1335.5 154.8L1334.5 154.8L1333.5 154.8L1332.5 154.8L1331.5 154.8L1330.5 154.8L1329.5 154.8L1328.5 154.8L1327.5 154.8L1326.5 154.8L1325.5 154.8L1324.5 154.8L1323.5 154.8L1322.5 154.8L1321.5 154.8L1320.5 154.8L1319.5 154.8L1318.5 154.8L1317.5 154.8L1316.5 154.8L1315.5 154.8L1314.5 154.8L1313.5 154.8L1312.5 154.8L1311.5 154.8L1310.5 154.8L1309.5 154.8L1308.5 154.8L1307.5 154.8L1306.5 154.8L1305.5 154.8L1304.5 154.8L1303.5 154.8L1302.5 154.8L1301.5 154.8L1300.5 154.8L1299.5 154.8L1298.5 154.8L1297.5 154.8L1296.5 154.8L1295.5 154.8L1294.5 154.8L1293.5 154.8L1292.5 154.8L1291.5 154.8L1290.5 154.8L1289.5 154.8L1288.5 154.8L1287.5 154.8L1286.5 154.8L1285.5 154.8L1284.5 154.8L1283.5 154.8L1282.5 154.8L1281.5 154.8L1280.5 154.8L1279.5 154.8L1278.5 154.8L1277.5 154.8L1276.5 154.8L1275.5 154.8L1274.5 154.8L1273.5 154.8L1272.5 154.8L1271.5 154.8L1270.5 154.8L1269.5 154.8L1268.5 154.8L1267.5 154.8L1266.5 154.8L1265.5 154.8L1264.5 154.8L1263.5 154.8L1262.5 154.8L1261.5 154.8L1260.5 154.8L1259.5 154.8L1258.5 154.8L1257.5 154.8L1256.5 154.8L1255.5 154.8L1254.5 154.8L1253.5 154.8L1252.5 154.8L1251.5 154.8L1250.5 154.8L1249.5 154.8L1248.5 154.8L1247.5 154.8L1246.5 154.8L1245.5 154.8L1244.5 154.8L1243.5 154.8L1242.5 154.8L1241.5 154.8L1240.5 154.8L1239.5 154.8L1238.5 154.8L1237.5 154.8L1236.5 154.8L1235.5 154.8L1234.5 154.8L1233.5 154.8L1232.5 154.8L1231.5 154.8L1230.5 154.8L1229.5 154.8L1228.5 154.8L1227.5 154.8L1226.5 154.8L1225.5 154.8L1224.5 154.8L1223.5 154.8L1222.5 154.8L1221.5 154.8L1220.5 154.8L1219.5 154.8L1218.5 154.8L1217.5 154.8L1216.5 154.8L1215.5 154.8L1214.5 154.8L1213.5 154.8L1212.5 154.8L1211.5 154.8L1210.5 154.8L1209.5 154.8L1208.5 154.8L1207.5 154.8L1206.5 154.8L1205.5 154.8L1204.5 154.8L1203.5 154.8L1202.5 154.8L1201.5 154.8L1200.5 154.8L1199.5 154.8L1198.5 154.8L1197.5 154.8L1196.5 154.8L1195.5 154.8L1194.5 154.8L1193.5 154.8L1192.5 154.8L1191.5 154.8L1190.5 154.8L1189.5 154.8L1188.5 154.8L1187.5 154.8L1186.5 154.8L1185.5 154.8L1184.5 154.8L1183.5 154.8L1182.5 154.8L1181.5 154.8L1180.5 154.8L1179.5 154.8L1178.5 154.8L1177.5 154.8L1176.5 154.8L1175.5 154.8L1174.5 154.8L1173.5 154.8L1172.5 154.8L1171.5 154.8L1170.5 154.8L1169.5 154.8L1168.5 154.8L1167.5 154.8L1166.5 154.8L1165.5 154.8L1164.5 154.8L1163.5 154.8L1162.5 154.8L1161.5 154.8L1160.5 154.8L1159.5 154.8L1158.5 154.8L1157.5 154.8L1156.5 154.8L1155.5 154.8L1154.5 154.8L1153.5 154.8L1152.5 154.8L1151.5 154.8L1150.5 154.8L1149.5 154.8L1148.5 154.8L1147.5 154.8L1146.5 154.8L1145.5 154.8L1144.5 154.8L1143.5 154.8L1142.5 154.8L1141.5 154.8L1140.5 154.8L1139.5 154.8L1138.5 154.8L1137.5 154.8L1136.5 154.8L1135.5 154.8L1134.5 154.8L1133.5 154.8L1132.5 154.8L1131.5 154.8L1130.5 154.8L1129.5 154.8L1128.5 154.8L1127.5 154.8L1126.5 154.8L1125.5 154.8L1124.5 154.8L1123.5 154.8L1122.5 154.8L1121.5 154.8L1120.5 154.8L1119.5 154.8L1118.5 154.8L1117.5 154.8L1116.5 154.8L1115.5 154.8L1114.5 154.8L1113.5 154.8L1112.5 154.8L1111.5 154.8L1110.5 154.8L1109.5 154.8L1108.5 154.8L1107.5 154.8L1106.5 154.8L1105.5 154.8L1104.5 154.8L1103.5 154.8L1102.5 154.8L1101.5 154.8L1100.5 154.8L1099.5 154.8L1098.5 154.8L1097.5 154.8L1096.5 154.8L1095.5 154.8L1094.5 154.8L1093.5 154.8L1092.5 154.8L1091.5 154.8L1090.5 154.8L1089.5 154.8L1088.5 154.8L1087.5 154.8L1086.5 154.8L1085.5 154.8L1084.5 154.8L1083.5 154.8L1082.5 154.8L1081.5 154.8L1080.5 154.8L1079.5 154.8L1078.5 154.8L1077.5 154.8L1076.5 154.8L1075.5 154.8L1074.5 154.8L1073.5 154.8L1072.5 154.8L1071.5 154.8L1070.5 154.8L1069.5 154.8L1068.5 154.8L1067.5 154.8L1066.5 154.8L1065.5 154.8L1064.5 154.8L1063.5 154.8L1062.5 154.8L1061.5 154.8L1060.5 154.8L1059.5 154.8L1058.5 154.8L1057.5 154.8L1056.5 154.8L1055.5 154.8L1054.5 154.8L1053.5 154.8L1052.5 154.8L1051.5 154.8L1050.5 154.8L1049.5 154.8L1048.5 154.8L1047.5 154.8L1046.5 154.8L1045.5 154.8L1044.5 154.8L1043.5 154.8L1042.5 154.8L1041.5 154.8L1040.5 154.8L1039.5 154.8L1038.5 154.8L1037.5 154.8L1036.5 154.8L1035.5 154.8L1034.5 154.8L1033.5 154.8L1032.5 154.8L1031.5 154.8L1030.5 154.8L1029.5 154.8L1028.5 154.8L1027.5 154.8L1026.5 154.8L1025.5 154.8L1024.5 154.8L1023.5 154.8L1022.5 154.8L1021.5 154.8L1020.5 154.8L1019.5 154.8L1018.5 154.8L1017.5 154.8L1016.5 154.8L1015.5 154.8L1014.5 154.8L1013.5 154.8L1012.5 154.8L1011.5 154.8L1010.5 154.8L1009.5 154.8L1008.5 154.8L1007.5 154.8L1006.5 154.8L1005.5 154.8L1004.5 154.8L1003.5 154.8L1002.5 154.8L1001.5 154.8L1000.5 154.8L999.5 154.8L998.5 154.8L997.5 154.8L996.5 154.8L995.5 154.8L994.5 154.8L993.5 154.8L992.5 154.8L991.5 154.8L990.5 154.8L989.5 154.8L988.5 154.8L987.5 154.8L986.5 154.8L985.5 154.8L984.5 154.8L983.5 154.8L982.5 154.8L981.5 154.8L980.5 154.8L979.5 154.8L978.5 154.8L977.5 154.8L976.5 154.8L975.5 154.8L974.5 154.8L973.5 154.8L972.5 154.8L971.5 154.8L970.5 154.8L969.5 154.8L968.5 154.8L967.5 154.8L966.5 154.8L965.5 154.8L964.5 154.8L963.5 154.8L962.5 154.8L961.5 154.8L960.5 154.8L959.5 154.8L958.5 154.8L957.5 154.8L956.5 154.8L955.5 154.8L954.5 154.8L953.5 154.8L952.5 154.8L951.5 154.8L950.5 154.8L949.5 154.8L948.5 154.8L947.5 154.8L946.5 154.8L945.5 154.8L944.5 154.8L943.5 154.8L942.5 154.8L941.5 154.8L940.5 154.8L939.5 154.8L938.5 154.8L937.5 154.8L936.5 154.8L935.5 154.8L934.5 154.8L933.5 154.8L932.5 154.8L931.5 154.8L930.5 154.8L929.5 154.8L928.5 154.8L927.5 154.8L926.5 154.8L925.5 154.8L924.5 154.8L923.5 154.8L922.5 154.8L921.5 154.8L920.5 154.8L919.5 154.8L918.5 154.8L917.5 154.8L916.5 154.8L915.5 154.8L914.5 154.8L913.5 154.8L912.5 154.8L911.5 154.8L910.5 154.8L909.5 154.8L908.5 154.8L907.5 154.8L906.5 154.8L905.5 154.8L904.5 154.8L903.5 154.8L902.5 154.8L901.5 154.8L900.5 154.8L899.5 154.8L898.5 154.8L897.5 154.8L896.5 154.8L895.5 154.8L894.5 154.8L893.5 154.8L892.5 154.8L891.5 154.8L890.5 154.8L889.5 154.8L888.5 154.8L887.5 154.8L886.5 154.8L885.5 154.8L884.5 154.8L883.5 154.8L882.5 154.8L881.5 154.8L880.5 154.8L879.5 154.8L878.5 154.8L877.5 154.8L876.5 154.8L875.5 154.8L874.5 154.8L873.5 154.8L872.5 154.8L871.5 154.8L870.5 154.8L869.5 154.8L868.5 154.8L867.5 154.8L866.5 154.8L865.5 154.8L864.5 154.8L863.5 154.8L862.5 154.8L861.5 154.8L860.5 154.8L859.5 154.8L858.5 154.8L857.5 154.8L856.5 154.8L855.5 154.8L854.5 154.8L853.5 154.8L852.5 154.8L851.5 154.8L850.5 154.8L849.5 154.8L848.5 154.8L847.5 154.8L846.5 154.8L845.5 154.8L844.5 154.8L843.5 154.8L842.5 154.8L841.5 154.8L840.5 154.8L839.5 154.8L838.5 154.8L837.5 154.8L836.5 154.8L835.5 154.8L834.5 154.8L833.5 154.8L832.5 154.8L831.5 154.8L830.5 154.8L829.5 154.8L828.5 154.8L827.5 154.8L826.5 154.8L825.5 154.8L824.5 154.8L823.5 154.8L822.5 154.8L821.5 154.8L820.5 154.8L819.5 154.8L818.5 154.8L817.5 154.8L816.5 154.8L815.5 154.8L814.5 154.8L813.5 154.8L812.5 154.8L811.5 154.8L810.5 154.8L809.5 154.8L808.5 154.8L807.5 154.8L806.5 154.8L805.5 154.8L804.5 154.8L803.5 154.8L802.5 154.8L801.5 154.8L800.5 154.8L799.5 154.8L798.5 154.8L797.5 154.8L796.5 154.8L795.5 154.8L794.5 154.8L793.5 154.8L792.5 154.8L791.5 154.8L790.5 154.8L789.5 154.8L788.5 154.8L787.5 154.8L786.5 154.8L785.5 154.8L784.5 154.8L783.5 154.8L782.5 154.8L781.5 154.8L780.5 154.8L779.5 154.8L778.5 154.8L777.5 154.8L776.5 154.8L775.5 154.8L774.5 154.8L773.5 154.8L772.5 154.8L771.5 154.8L770.5 154.8L769.5 154.8L768.5 154.8L767.5 154.8L766.5 154.8L765.5 154.8L764.5 154.8L763.5 154.8L762.5 154.8L761.5 154.8L760.5 154.8L759.5 154.8L758.5 154.8L757.5 154.8L756.5 154.8L755.5 154.8L754.5 154.8L753.5 154.8L752.5 154.8L751.5 154.8L750.5 154.8L749.5 154.8L748.5 154.8L747.5 154.8L746.5 154.8L745.5 154.8L744.5 154.8L743.5 154.8L742.5 154.8L741.5 154.8L740.5 154.8L739.5 154.8L738.5 154.8L737.5 154.8L736.5 154.8L735.5 154.8L734.5 154.8L733.5 154.8L732.5 154.8L731.5 154.8L730.5 154.8L729.5 154.8L728.5 154.8L727.5 154.8L726.5 154.8L725.5 154.8L724.5 154.8L723.5 154.8L722.5 154.8L721.5 154.8L720.5 154.8L719.5 154.8L718.5 154.8L717.5 154.8L716.5 154.8L715.5 154.8L714.5 154.8L713.5 154.8L712.5 154.8L711.5 154.8L710.5 154.8L709.5 154.8L708.5 154.8L707.5 154.8L706.5 154.8L705.5 154.8L704.5 154.8L703.5 154.8L702.5 154.8L701.5 154.8L700.5 154.8L699.5 154.8L698.5 154.8L697.5 154.8L696.5 154.8L695.5 154.8L694.5 154.8L693.5 154.8L692.5 154.8L691.5 154.8L690.5 154.8L689.5 154.8L688.5 154.8L687.5 154.8L686.5 154.8L685.5 154.8L684.5 154.8L683.5 154.8L682.5 154.8L681.5 154.8L680.5 154.8L679.5 154.8L678.5 154.8L677.5 154.8L676.5 154.8L675.5 154.8L674.5 154.8L673.5 154.8L672.5 154.8L671.5 154.8L670.5 154.8L669.5 154.8L668.5 154.8L667.5 154.8L666.5 154.8L665.5 154.8L664.5 154.8L663.5 154.8L662.5 154.8L661.5 154.8L660.5 154.8L659.5 154.8L658.5 154.8L657.5 154.8L656.5 154.8L655.5 154.8L654.5 154.8L653.5 154.8L652.5 154.8L651.5 154.8L650.5 154.8L649.5 154.8L648.5 154.8L647.5 154.8L646.5 154.8L645.5 154.8L644.5 154.8L643.5 154.8L642.5 154.8L641.5 154.8L640.5 154.8L639.5 154.8L638.5 154.8L637.5 154.8L636.5 154.8L635.5 154.8L634.5 154.8L633.5 154.8L632.5 154.8L631.5 154.8L630.5 154.8L629.5 154.8L628.5 154.8L627.5 154.8L626.5 154.8L625.5 154.8L624.5 154.8L623.5 154.8L622.5 154.8L621.5 154.8L620.5 154.8L619.5 154.8L618.5 154.8L617.5 154.8L616.5 154.8L615.5 154.8L614.5 154.8L613.5 154.8L612.5 154.8L611.5 154.8L610.5 154.8L609.5 154.8L608.5 154.8L607.5 154.8L606.5 154.8L605.5 154.8L604.5 154.8L603.5 154.8L602.5 154.8L601.5 154.8L600.5 154.8L599.5 154.8L598.5 154.8L597.5 154.8L596.5 154.8L595.5 154.8L594.5 154.8L593.5 154.8L592.5 154.8L591.5 154.8L590.5 154.8L589.5 154.8L588.5 154.8L587.5 154.8L586.5 154.8L585.5 154.8L584.5 154.8L583.5 154.8L582.5 154.8L581.5 154.8L580.5 154.8L579.5 154.8L578.5 154.8L577.5 154.8L576.5 154.8L575.5 154.8L574.5 154.8L573.5 154.8L572.5 154.8L571.5 154.8L570.5 154.8L569.5 154.8L568.5 154.8L567.5 154.8L566.5 154.8L565.5 154.8L564.5 154.8L563.5 154.8L562.5 154.8L561.5 154.8L560.5 154.8L559.5 154.8L558.5 154.8L557.5 154.8L556.5 154.8L555.5 154.8L554.5 154.8L553.5 154.8L552.5 154.8L551.5 154.8L550.5 154.8L549.5 154.8L548.5 154.8L547.5 154.8L546.5 154.8L545.5 154.8L544.5 154.8L543.5 154.8L542.5 154.8L541.5 154.8L540.5 154.8L539.5 154.8L538.5 154.8L537.5 154.8L536.5 154.8L535.5 154.8L534.5 154.8L533.5 154.8L532.5 154.8L531.5 154.8L530.5 154.8L529.5 154.8L528.5 154.8L527.5 154.8L526.5 154.8L525.5 154.8L524.5 154.8L523.5 154.8L522.5 154.8L521.5 154.8L520.5 154.8L519.5 154.8L518.5 154.8L517.5 154.8L516.5 154.8L515.5 154.8L514.5 154.8L513.5 154.8L512.5 154.8L511.5 154.8L510.5 154.8L509.5 154.8L508.5 154.8L507.5 154.8L506.5 154.8L505.5 154.8L504.5 154.8L503.5 154.8L502.5 154.8L501.5 154.8L500.5 154.8L499.5 154.8L498.5 154.8L497.5 154.8L496.5 154.8L495.5 154.8L494.5 154.8L493.5 154.8L492.5 154.8L491.5 154.8L490.5 154.8L489.5 154.8L488.5 154.8L487.5 154.8L486.5 154.8L485.5 154.8L484.5 154.8L483.5 154.8L482.5 154.8L481.5 154.8L480.5 154.8L479.5 154.8L478.5 154.8L477.5 154.8L476.5 154.8L475.5 154.8L474.5 154.8L473.5 154.8L472.5 154.8L471.5 154.8L470.5 154.8L469.5 154.8L468.5 154.8L467.5 154.8L466.5 154.8L465.5 154.8L464.5 154.8L463.5 154.8L462.5 154.8L461.5 154.8L460.5 154.8L459.5 154.8L458.5 154.8L457.5 154.8L456.5 154.8L455.5 154.8L454.5 154.8L453.5 154.8L452.5 154.8L451.5 154.8L450.5 154.8L449.5 154.8L448.5 154.8L447.5 154.8L446.5 154.8L445.5 154.8L444.5 154.8L443.5 154.8L442.5 154.8L441.5 154.8L440.5 154.8L439.5 154.8L438.5 154.8L437.5 154.8L436.5 154.8L435.5 154.8L434.5 154.8L433.5 154.8L432.5 154.8L431.5 154.8L430.5 154.8L429.5 154.8L428.5 154.8L427.5 154.8L426.5 154.8L425.5 154.8L424.5 154.8L423.5 154.8L422.5 154.8L421.5 154.8L420.5 154.8L419.5 154.8L418.5 154.8L417.5 154.8L416.5 154.8L415.5 154.8L414.5 154.8L413.5 154.8L412.5 154.8L411.5 154.8L410.5 154.8L409.5 154.8L408.5 154.8L407.5 154.8L406.5 154.8L405.5 154.8L404.5 154.8L403.5 154.8L402.5 154.8L401.5 154.8L400.5 154.8L399.5 154.8L398.5 154.8L397.5 154.8L396.5 154.8L395.5 154.8L394.5 154.8L393.5 154.8L392.5 154.8L391.5 154.8L390.5 154.8L389.5 154.8L388.5 154.8L387.5 154.8L386.5 154.8L385.5 154.8L384.5 154.8L383.5 154.8L382.5 154.8L381.5 154.8L380.5 154.8L379.5 154.8L378.5 154.8L377.5 154.8L376.5 154.8L375.5 154.8L374.5 154.8L373.5 154.8L372.5 154.8L371.5 154.8L370.5 154.8L369.5 154.8L368.5 154.8L367.5 154.8L366.5 154.8L365.5 154.8L364.5 154.8L363.5 154.8L362.5 154.8L361.5 154.8L360.5 154.8L359.5 154.8L358.5 154.8L357.5 154.8L356.5 154.8L355.5 154.8L354.5 154.8L353.5 154.8L352.5 154.8L351.5 154.8L350.5 154.8L349.5 154.8L348.5 154.8L347.5 154.8L346.5 154.8L345.5 154.8L344.5 154.8L343.5 154.8L342.5 154.8L341.5 154.8L340.5 154.8L339.5 154.8L338.5 154.8L337.5 154.8L336.5 154.8L335.5 154.8L334.5 154.8L333.5 154.8L332.5 154.8L331.5 154.8L330.5 154.8L329.5 154.8L328.5 154.8L327.5 154.8L326.5 154.8L325.5 154.8L324.5 154.8L323.5 154.8L322.5 154.8L321.5 154.8L320.5 154.8L319.5 154.8L318.5 154.8L317.5 154.8L316.5 154.8L315.5 154.8L314.5 154.8L313.5 154.8L312.5 154.8L311.5 154.8L310.5 154.8L309.5 154.8L308.5 154.8L307.5 154.8L306.5 154.8L305.5 154.8L304.5 154.8L303.5 154.8L302.5 154.8L301.5 154.8L300.5 154.8L299.5 154.8L298.5 154.8L297.5 154.8L296.5 154.8L295.5 154.8L294.5 154.8L293.5 154.8L292.5 154.8L291.5 154.8L290.5 154.8L289.5 154.8L288.5 154.8L287.5 154.8L286.5 154.8L285.5 154.8L284.5 154.8L283.5 154.8L282.5 154.8L281.5 154.8L280.5 154.8L279.5 154.8L278.5 154.8L277.5 154.8L276.5 154.8L275.5 154.8L274.5 154.8L273.5 154.8L272.5 154.8L271.5 154.8L270.5 154.8L269.5 154.8L268.5 154.8L267.5 154.8L266.5 154.8L265.5 154.8L264.5 154.8L263.5 154.8L262.5 154.8L261.5 154.8L260.5 154.8L259.5 154.8L258.5 154.8L257.5 154.8L256.5 154.8L255.5 154.8L254.5 154.8L253.5 154.8L252.5 154.8L251.5 154.8L250.5 154.8L249.5 154.8L248.5 154.8L247.5 154.8L246.5 154.8L245.5 154.8L244.5 154.8L243.5 154.8L242.5 154.8L241.5 154.8L240.5 154.8L239.5 154.8L238.5 154.8L237.5 154.8L236.5 154.8L235.5 154.8L234.5 154.8L233.5 154.8L232.5 154.8L231.5 154.8L230.5 154.8L229.5 154.8L228.5 154.8L227.5 154.8L226.5 154.8L225.5 154.8L224.5 154.8L223.5 154.8L222.5 154.8L221.5 154.8L220.5 154.8L219.5 154.8L218.5 154.8L217.5 154.8L216.5 154.8L215.5 154.8L214.5 154.8L213.5 154.8L212.5 154.8L211.5 154.8L210.5 154.8L209.5 154.8L208.5 154.8L207.5 154.8L206.5 154.8L205.5 154.8L204.5 154.8L203.5 154.8L202.5 154.8L201.5 154.8L200.5 154.8L199.5 154.8L198.5 154.8L197.5 154.8L196.5 154.8L195.5 154.8L194.5 154.8L193.5 154.8L192.5 154.8L191.5 154.8L190.5 154.8L189.5 154.8L188.5 154.8L187.5 154.8L186.5 154.8L185.5 154.8L184.5 154.8L183.5 154.8L182.5 154.8L181.5 154.8L180.5 154.8L179.5 154.8L178.5 154.8L177.5 154.8L176.5 154.8L175.5 154.8L174.5 154.8L173.5 154.8L172.5 154.8L171.5 154.8L170.5 154.8L169.5 154.8L168.5 154.8L167.5 154.8L166.5 154.8L165.5 154.8L164.5 154.8L163.5 154.8L162.5 154.8L161.5 154.8L160.5 154.8L159.5 154.8L158.5 154.8L157.5 154.8L156.5 154.8L155.5 154.8L154.5 154.8L153.5 154.8L152.5 154.8L151.5 154.8L150.5 154.8L149.5 154.8L148.5 154.8L147.5 154.8L146.5 154.8L145.5 154.8L144.5 154.8L143.5 154.8L142.5 154.8L141.5 154.8L140.5 154.8L139.5 154.8L138.5 154.8L137.5 154.8L136.5 154.8L135.5 154.8L134.5 154.8L133.5 154.8L132.5 154.8L131.5 154.8L130.5 154.8L129.5 154.8L128.5 154.8L127.5 154.8L126.5 154.8L125.5 154.8L124.5 154.8L123.5 154.8L122.5 154.8L121.5 154.8L120.5 154.8L119.5 154.8L118.5 154.8L117.5 154.8L116.5 154.8L115.5 154.8L114.5 154.8L113.5 154.8L112.5 154.8L111.5 154.8L110.5 154.8L109.5 154.8L108.5 154.8L107.5 154.8L106.5 154.8L105.5 154.8L104.5 154.8L103.5 154.8L102.5 154.8L101.5 154.8L100.5 154.8L99.5 154.8L98.5 154.8L97.5 154.8L96.5 154.8L95.5 154.8L94.5 154.8L93.5 154.8L92.5 154.8L91.5 154.8L90.5 154.8L89.5 154.8L88.5 154.8L87.5 154.8L86.5 154.8L85.5 154.8L84.5 154.8L83.5 154.8L82.5 154.8L81.5 154.8L80.5 154.8L79.5 154.8L78.5 154.8L77.5 154.8L76.5 154.8L75.5 154.8L74.5 154.8L73.5 154.8L72.5 154.8L71.5 154.8L70.5 154.8L69.5 154.8L68.5 154.8L67.5 154.8L66.5 154.8L65.5 154.8L64.5 154.8L63.5 154.8L62.5 154.8L61.5 154.8L60.5 154.8L59.5 154.8L58.5 154.8L57.5 154.8L56.5 154.8L55.5 154.8L54.5 154.8L53.5 154.8L52.5 154.8L51.5 154.8L50.5 154.8L49.5 154.8L48.5 154.8L47.5 154.8L46.5 154.8L45.5 154.8L44.5 154.8L43.5 154.8L42.5 154.8L41.5 154.8L40.5 154.8L39.5 154.8L38.5 154.8L37.5 154.8L36.5 154.8L35.5 154.8Z" fill="#008000" stroke="#008000" stroke-width="0.35" stroke-linejoin="round"/><path d="M35 148.1L35 129L35.5 129L36.5 123L37.5 125.6L38.5 129.2L39.5 122.4L40.5 125.3L41.5 128.6L42.5 122.3L43.5 126.3L44.5 129L45.5 123.3L46.5 126.5L47.5 128.5L48.5 123.1L49.5 125.2L50.5 128.3L51.5 123.5L52.5 125.8L53.5 128.4L54.5 122.5L55.5 126L56.5 128.2L57.5 122.2L58.5 126.5L59.5 127.4L60.5 123.3L61.5 125.7L62.5 129.2L63.5 123.5L64.5 126.4L65.5 127.6L66.5 123.5L67.5 124.8L68.5 129L69.5 123.1L70.5 126.6L71.5 128.2L72.5 123L73.5 126.5L74.5 127.6L75.5 123.2L76.5 126.5L77.5 129L78.5 124L79.5 125.9L80.5 128.1L81.5 123.3L82.5 124.9L83.5 128.4L84.5 123.3L85.5 126.3L86.5 128.3L87.5 124L88.5 124.9L89.5 128.6L90.5 123L91.5 126.1L92.5 127.7L93.5 122.6L94.5 125.9L95.5 128.8L96.5 122.1L97.5 124.6L98.5 128.9L99.5 123.6L100.5 124.9L101.5 127.8L102.5 122.2L103.5 125.6L104.5 128.7L105.5 123.2L106.5 125.2L107.5 129L108.5 123.7L109.5 125.3L110.5 129.1L111.5 122.7L112.5 125.7L113.5 128.9L114.5 123.5L115.5 125.8L116.5 128.6L117.5 122.2L118.5 125.6L119.5 129.3L120.5 124L121.5 125.6L122.5 128.7L123.5 122.5L124.5 126.1L125.5 128.3L126.5 122.2L127.5 125.6L128.5 128.4L129.5 122.2L130.5 124.7L131.5 127.5L132.5 123.8L133.5 126.1L134.5 127.8L135.5 123.8L136.5 127.1L137.5 131.1L138.5 128.3L139.5 130.4L140.5 133.3L141.5 128.8L142.5 131.4L143.5 134.1L144.5 129L145.5 130.5L146.5 132.8L147.5 128.7L148.5 131.5L149.5 133.1L150.5 129.2L151.5 131.5L152.5 133.8L153.5 128L154.5 130.7L155.5 134.6L156.5 127.8L157.5 131.5L158.5 132.9L159.5 128.9L160.5 131.1L161.5 134.7L162.5 129.2L163.5 130.8L164.5 134.7L165.5 127.9L166.5 129.7L167.5 122.6L168.5 120.4L169.5 126.2L170.5 127.7L171.5 122.8L172.5 126.6L173.5 128.3L174.5 123.9L175.5 126.4L176.5 128.9L177.5 123L178.5 125.2L179.5 128.1L180.5 123.5L181.5 125.5L182.5 128.8L183.5 122.7L184.5 125.7L185.5 127.6L186.5 122.2L187.5 125L188.5 128.8L189.5 123.6L190.5 125.5L191.5 127.7L192.5 122.6L193.5 125.6L194.5 128.4L195.5 123.7L196.5 124.9L197.5 127.7L198.5 122.6L199.5 125.8L200.5 128.2L201.5 123.5L202.5 124.9L203.5 128.8L204.5 123.6L205.5 124.8L206.5 127.5L207.5 122.6L208.5 125.7L209.5 128.8L210.5 123.8L211.5 126L212.5 128.8L213.5 122.9L214.5 126.3L215.5 128.4L216.5 122.1L217.5 126.2L218.5 129.2L219.5 122.9L220.5 125.8L221.5 128.6L222.5 123.5L223.5 125.6L224.5 128.9L225.5 123.2L226.5 124.9L227.5 129.3L228.5 123.1L229.5 125.8L230.5 127.7L231.5 123.8L232.5 125.2L233.5 128.1L234.5 122.9L235.5 126.1L236.5 128.7L237.5 122.8L238.5 126.4L239.5 128.6L240.5 124L241.5 124.7L242.5 128.4L243.5 122.1L244.5 126.5L245.5 128.5L246.5 122.2L247.5 125.9L248.5 128.9L249.5 123L250.5 126L251.5 128.9L252.5 122.1L253.5 126.1L254.5 127.5L255.5 123.6L256.5 126.5L257.5 127.6L258.5 122.1L259.5 126.2L260.5 129.3L261.5 123.3L262.5 126.6L263.5 127.5L264.5 123.6L265.5 125L266.5 128.4L267.5 123.6L268.5 126.5L269.5 127.8L270.5 123.9L271.5 125.1L272.5 128.8L273.5 123.5L274.5 126L275.5 127.5L276.5 124L277.5 124.7L278.5 128.8L279.5 122.2L280.5 125.1L281.5 128.1L282.5 123.3L283.5 126.2L284.5 129.2L285.5 123.4L286.5 124.6L287.5 129.1L288.5 123.1L289.5 125.4L290.5 127.7L291.5 122.4L292.5 125.8L293.5 128.8L294.5 122.3L295.5 125.8L296.5 128.9L297.5 122.1L298.5 125L299.5 129.3L300.5 123.6L301.5 124.7L302.5 128.5L303.5 122.2L304.5 125.4L305.5 129.1L306.5 122.8L307.5 126.6L308.5 129L309.5 122.5L310.5 126.4L311.5 128.1L312.5 122.6L313.5 126L314.5 128.2L315.5 122.3L316.5 126.2L317.5 129.3L318.5 122.4L319.5 125.7L320.5 128.3L321.5 123.8L322.5 125.6L323.5 128.3L324.5 123.1L325.5 126.2L326.5 127.4L327.5 122.2L328.5 125.4L329.5 127.8L330.5 122.4L331.5 126.1L332.5 128.6L333.5 122.6L334.5 125.5L335.5 127.7L336.5 122.9L337.5 125.8L338.5 128L339.5 124L340.5 126.1L341.5 128.4L342.5 123.8L343.5 126.4L344.5 129.3L345.5 122.6L346.5 126.5L347.5 127.5L348.5 122.1L349.5 126.2L350.5 127.5L351.5 122.5L352.5 125.9L353.5 127.6L354.5 123.7L355.5 126.2L356.5 128.7L357.5 123.7L358.5 124.8L359.5 129.1L360.5 123.3L361.5 125.4L362.5 127.4L363.5 122.4L364.5 125.4L365.5 128.5L366.5 123.9L367.5 125.3L368.5 128L369.5 124L370.5 125.7L371.5 129.1L372.5 124L373.5 126.4L374.5 128.2L375.5 122.8L376.5 124.7L377.5 129.1L378.5 122.5L379.5 126.6L380.5 128.6L381.5 122.2L382.5 124.8L383.5 128.5L384.5 122.5L385.5 124.7L386.5 128.1L387.5 122.4L388.5 126L389.5 127.8L390.5 122.4L391.5 125.1L392.5 129.1L393.5 123.4L394.5 124.9L395.5 128.2L396.5 123L397.5 124.7L398.5 129.3L399.5 122.6L400.5 125.9L401.5 128.9L402.5 122.7L403.5 125.7L404.5 127.6L405.5 122.9L406.5 125.4L407.5 129.1L408.5 122.2L409.5 126.5L410.5 128.1L411.5 123.9L412.5 125L413.5 129.2L414.5 122.2L415.5 126.4L416.5 127.7L417.5 122.8L418.5 126.4L419.5 128.7L420.5 123.5L421.5 125.9L422.5 128.3L423.5 124L424.5 125.1L425.5 128.3L426.5 123.8L427.5 126.6L428.5 127.4L429.5 123L430.5 125.6L431.5 128.8L432.5 123.6L433.5 126.4L434.5 127.8L435.5 122.8L436.5 125.8L437.5 127.6L438.5 123.5L439.5 125.8L440.5 128.4L441.5 122.5L442.5 125.9L443.5 128L444.5 123.2L445.5 126.3L446.5 128.9L447.5 122.6L448.5 126.3L449.5 128.3L450.5 123.6L451.5 126.4L452.5 128.6L453.5 122.6L454.5 125.3L455.5 128.6L456.5 122.5L457.5 125.3L458.5 128.1L459.5 122.2L460.5 125.1L461.5 127.9L462.5 122.6L463.5 125.3L464.5 128.1L465.5 122.5L466.5 126.1L467.5 128.1L468.5 122.2L469.5 125L470.5 127.4L471.5 123.7L472.5 125.6L473.5 128.3L474.5 122.8L475.5 125.8L476.5 128L477.5 123.8L478.5 126.5L479.5 129.3L480.5 122.6L481.5 126.1L482.5 128.3L483.5 123.2L484.5 125L485.5 128.4L486.5 122.1L487.5 125L488.5 128.8L489.5 122.4L490.5 126.1L491.5 128.5L492.5 122.6L493.5 126L494.5 128.1L495.5 122.2L496.5 124.9L497.5 129.1L498.5 124L499.5 125.3L500.5 129.1L501.5 123.3L502.5 125L503.5 128.1L504.5 122.3L505.5 126.2L506.5 127.9L507.5 122.9L508.5 126.3L509.5 128.4L510.5 123L511.5 126.6L512.5 128.2L513.5 123.3L514.5 126.4L515.5 129.3L516.5 122.2L517.5 125.6L518.5 129.3L519.5 123.4L520.5 125.6L521.5 128.9L522.5 122.9L523.5 124.9L524.5 128.8L525.5 122.7L526.5 126L527.5 128.1L528.5 122.6L529.5 126.5L530.5 129L531.5 122.7L532.5 125.4L533.5 128L534.5 123.6L535.5 125.1L536.5 129.3L537.5 122.7L538.5 125L539.5 128.7L540.5 123.2L541.5 126.5L542.5 129.1L543.5 122.2L544.5 125.8L545.5 127.4L546.5 123.8L547.5 126.3L548.5 128L549.5 123.8L550.5 126.5L551.5 127.9L552.5 122.5L553.5 125.1L554.5 127.9L555.5 123.5L556.5 126.6L557.5 127.7L558.5 122.6L559.5 125.6L560.5 128.2L561.5 123.7L562.5 125.3L563.5 128.6L564.5 122.5L565.5 126.5L566.5 127.7L567.5 122.1L568.5 126L569.5 128.6L570.5 122.3L571.5 126.6L572.5 128.2L573.5 123.9L574.5 124.9L575.5 127.7L576.5 122.2L577.5 125.5L578.5 127.9L579.5 122.8L580.5 126.2L581.5 127.8L582.5 122.4L583.5 125.4L584.5 128.3L585.5 123.6L586.5 125.2L587.5 128.5L588.5 123.9L589.5 126.4L590.5 129L591.5 123L592.5 124.6L593.5 128.2L594.5 123.2L595.5 125L596.5 129.3L597.5 123.9L598.5 124.9L599.5 127.5L600.5 123.2L601.5 126.1L602.5 127.5L603.5 123.1L604.5 124.6L605.5 128.8L606.5 122.2L607.5 125L608.5 127.4L609.5 122.5L610.5 126L611.5 129.1L612.5 123.8L613.5 126.1L614.5 129.3L615.5 123.9L616.5 124.7L617.5 129.1L618.5 122.2L619.5 125.7L620.5 128.4L621.5 123.6L622.5 125.5L623.5 128.8L624.5 123.5L625.5 126.2L626.5 127.6L627.5 123.9L628.5 126.2L629.5 128.8L630.5 122.1L631.5 126.4L632.5 129.2L633.5 122.1L634.5 125.9L635.5 127.7L636.5 123.2L637.5 125.5L638.5 127.8L639.5 123.9L640.5 125.6L641.5 128.1L642.5 122.9L643.5 125.1L644.5 129.2L645.5 122.4L646.5 126.5L647.5 127.6L648.5 122.4L649.5 125.8L650.5 128.3L651.5 123.8L652.5 124.9L653.5 128.6L654.5 122.3L655.5 125.6L656.5 129.3L657.5 123.7L658.5 125L659.5 128L660.5 122.8L661.5 125.2L662.5 127.9L663.5 123L664.5 126.3L665.5 128.2L666.5 122.9L667.5 125L668.5 128.5L669.5 123.2L670.5 125.9L671.5 128.5L672.5 122.2L673.5 126.5L674.5 127.5L675.5 122.8L676.5 126.4L677.5 129.3L678.5 122.5L679.5 125L680.5 129.3L681.5 122.7L682.5 124.8L683.5 128.3L684.5 123.5L685.5 126.3L686.5 128.3L687.5 123L688.5 126.3L689.5 128.8L690.5 122.9L691.5 125.5L692.5 127.9L693.5 122.8L694.5 126.1L695.5 128.6L696.5 123.3L697.5 125.5L698.5 127.4L699.5 123.7L700.5 125.7L701.5 128.5L702.5 123.6L703.5 126.3L704.5 128L705.5 122.4L706.5 125.1L707.5 127.8L708.5 123.8L709.5 125.1L710.5 127.4L711.5 122.5L712.5 125.8L713.5 127.9L714.5 122.9L715.5 125L716.5 128.5L717.5 123.7L718.5 126.4L719.5 127.7L720.5 123.6L721.5 126.6L722.5 128.4L723.5 123L724.5 125.6L725.5 128.6L726.5 122.2L727.5 126.4L728.5 128.2L729.5 122.1L730.5 125.3L731.5 128.3L732.5 123.4L733.5 125.6L734.5 128L735.5 122.3L736.5 126L737.5 129L738.5 122.8L739.5 125.3L740.5 127.8L741.5 124L742.5 125.4L743.5 128.4L744.5 122.7L745.5 125.4L746.5 129L747.5 123.8L748.5 125L749.5 129.2L750.5 123.4L751.5 126.2L752.5 127.6L753.5 123.1L754.5 124.8L755.5 128.5L756.5 123.9L757.5 126L758.5 128.7L759.5 123L760.5 125.8L761.5 128.7L762.5 122.5L763.5 125.9L764.5 128.8L765.5 123L766.5 126.5L767.5 128.6L768.5 123.5L769.5 125.3L770.5 127.9L771.5 122.4L772.5 124.9L773.5 128.6L774.5 122.1L775.5 125.6L776.5 129.1L777.5 122.2L778.5 126.1L779.5 127.6L780.5 122.9L781.5 125.8L782.5 128.7L783.5 123.7L784.5 125.3L785.5 128.6L786.5 123.9L787.5 126.3L788.5 128.5L789.5 122.3L790.5 126L791.5 128L792.5 122.7L793.5 124.9L794.5 129L795.5 122.6L796.5 126.5L797.5 128.7L798.5 123.4L799.5 124.9L800.5 128.8L801.5 123.3L802.5 125L803.5 127.7L804.5 123.5L805.5 126.2L806.5 129.2L807.5 122.5L808.5 126.4L809.5 127.5L810.5 122.4L811.5 126.5L812.5 128.3L813.5 122.5L814.5 125L815.5 127.4L816.5 123.5L817.5 125.8L818.5 129.1L819.5 123.5L820.5 125.7L821.5 128.7L822.5 122.9L823.5 125.5L824.5 128L825.5 122.5L826.5 126L827.5 129.2L828.5 122.6L829.5 125.9L830.5 129L831.5 122.1L832.5 125.2L833.5 129.1L834.5 123.6L835.5 124.8L836.5 127.5L837.5 123.5L838.5 125.1L839.5 129L840.5 122.2L841.5 124.9L842.5 129L843.5 123.3L844.5 124.9L845.5 128.2L846.5 122.6L847.5 125.6L848.5 128.7L849.5 122.7L850.5 124.7L851.5 128.5L852.5 124L853.5 125L854.5 128L855.5 123.4L856.5 125L857.5 128.8L858.5 123.3L859.5 125.9L860.5 127.5L861.5 122.1L862.5 126.5L863.5 128.8L864.5 123.1L865.5 125.9L866.5 129L867.5 123.9L868.5 125.4L869.5 128.2L870.5 123.7L871.5 126.4L872.5 129.1L873.5 123.1L874.5 125.5L875.5 128.2L876.5 123.9L877.5 125.5L878.5 129.1L879.5 123.8L880.5 126.2L881.5 127.8L882.5 123.9L883.5 126.5L884.5 128.7L885.5 122.3L886.5 125.5L887.5 129L888.5 122.5L889.5 126.3L890.5 127.5L891.5 122.8L892.5 125L893.5 128L894.5 123.1L895.5 126.4L896.5 127.8L897.5 123.4L898.5 126.3L899.5 128L900.5 124L901.5 125.6L902.5 129.3L903.5 122.7L904.5 126.3L905.5 127.6L906.5 123.4L907.5 125.4L908.5 128.6L909.5 123.3L910.5 125.4L911.5 128.4L912.5 123.7L913.5 126L914.5 128.2L915.5 122.1L916.5 125.1L917.5 128.1L918.5 123.5L919.5 124.7L920.5 127.8L921.5 122.8L922.5 125.8L923.5 128.7L924.5 123.3L925.5 125.9L926.5 127.6L927.5 122.9L928.5 126.4L929.5 127.9L930.5 123.3L931.5 126.4L932.5 127.4L933.5 123.2L934.5 125.6L935.5 128.8L936.5 123.5L937.5 125.8L938.5 127.6L939.5 122.6L940.5 126.4L941.5 128.7L942.5 123L943.5 124.8L944.5 127.9L945.5 122.7L946.5 125.8L947.5 128.7L948.5 123.5L949.5 124.8L950.5 129.2L951.5 123.4L952.5 126.3L953.5 127.7L954.5 122.9L955.5 125.4L956.5 128.8L957.5 122.5L958.5 124.7L959.5 128.3L960.5 124L961.5 125.1L962.5 128.9L963.5 124L964.5 125.6L965.5 127.5L966.5 123.7L967.5 126.3L968.5 128.9L969.5 122.8L970.5 125.7L971.5 129.1L972.5 122.7L973.5 126.5L974.5 127.5L975.5 123.6L976.5 125.7L977.5 127.8L978.5 122.1L979.5 126.3L980.5 128.8L981.5 123.5L982.5 124.8L983.5 128.2L984.5 122.3L985.5 125.9L986.5 129L987.5 123.4L988.5 124.7L989.5 129L990.5 123.7L991.5 125.9L992.5 127.6L993.5 123.6L994.5 126.5L995.5 128.5L996.5 122.1L997.5 126.3L998.5 128.5L999.5 123.7L1000.5 126.4L1001.5 127.5L1002.5 122.1L1003.5 126L1004.5 129.2L1005.5 123.2L1006.5 126.6L1007.5 127.9L1008.5 121.3L1009.5 124.6L1010.5 125.9L1011.5 121.3L1012.5 124.3L1013.5 126.2L1014.5 120.6L1015.5 121.6L1016.5 124.2L1017.5 119.2L1018.5 120.5L1019.5 122.4L1020.5 117.9L1021.5 119.6L1022.5 122.2L1023.5 107.5L1024.5 93.7L1025.5 70L1026.5 62.2L1027.5 85.8L1028.5 115.4L1029.5 137.6L1030.5 138.8L1031.5 139.8L1032.5 137.5L1033.5 139.1L1034.5 141.7L1035.5 140.8L1036.5 142.9L1037.5 145.2L1038.5 144.5L1039.5 144.2L1040.5 144.8L1041.5 141.6L1042.5 141.4L1043.5 141.5L1044.5 138.5L1045.5 139.2L1046.5 139.2L1047.5 136.2L1048.5 136.7L1049.5 137L1050.5 134.1L1051.5 134.6L1052.5 134.9L1053.5 132.7L1054.5 132.7L1055.5 133.3L1056.5 130.8L1057.5 130.6L1058.5 134.9L1059.5 128.8L1060.5 130.8L1061.5 132.7L1062.5 128.5L1063.5 130.4L1064.5 132.3L1065.5 128.4L1066.5 129.9L1067.5 133.2L1068.5 127.5L1069.5 130.9L1070.5 132L1071.5 126.5L1072.5 129.6L1073.5 132L1074.5 128.1L1075.5 130L1076.5 132.2L1077.5 128.1L1078.5 129.6L1079.5 131.7L1080.5 126.5L1081.5 129.9L1082.5 133.2L1083.5 126.7L1084.5 128.7L1085.5 132.7L1086.5 126.1L1087.5 129.3L1088.5 132.7L1089.5 126L1090.5 129.7L1091.5 132.5L1092.5 127.4L1093.5 129.2L1094.5 131.9L1095.5 127.5L1096.5 129.5L1097.5 132.6L1098.5 125.9L1099.5 128.4L1100.5 132.6L1101.5 126.5L1102.5 129.7L1103.5 131.8L1104.5 126.5L1105.5 129.5L1106.5 132.7L1107.5 125.6L1108.5 128.7L1109.5 132.1L1110.5 126.1L1111.5 128.2L1112.5 130.7L1113.5 126.7L1114.5 129.1L1115.5 131.8L1116.5 126.2L1117.5 128.2L1118.5 130.7L1119.5 126.3L1120.5 128.1L1121.5 130.5L1122.5 125.8L1123.5 127.8L1124.5 130.4L1125.5 126.4L1126.5 128.5L1127.5 130.8L1128.5 125.2L1129.5 128.5L1130.5 131.4L1131.5 126.7L1132.5 127.6L1133.5 131.3L1134.5 125.4L1135.5 127.8L1136.5 131.7L1137.5 126.2L1138.5 128.6L1139.5 131L1140.5 124.5L1141.5 128L1142.5 130.8L1143.5 126.2L1144.5 128.2L1145.5 131.5L1146.5 125.6L1147.5 127.8L1148.5 130.8L1149.5 124.9L1150.5 127L1151.5 130.9L1152.5 125.9L1153.5 127.9L1154.5 130L1155.5 124.2L1156.5 127.9L1157.5 130.9L1158.5 124.5L1159.5 126.9L1160.5 130.8L1161.5 124.2L1162.5 126.8L1163.5 131.2L1164.5 124.1L1165.5 127.7L1166.5 130.7L1167.5 124.9L1168.5 127.8L1169.5 130.1L1170.5 124.3L1171.5 128L1172.5 129.8L1173.5 125.7L1174.5 127.2L1175.5 129.4L1176.5 124.3L1177.5 127.4L1178.5 130.9L1179.5 124.9L1180.5 127.6L1181.5 129.6L1182.5 124.4L1183.5 126.9L1184.5 130.9L1185.5 125.3L1186.5 127.8L1187.5 129.8L1188.5 124.4L1189.5 128.3L1190.5 131L1191.5 125.7L1192.5 127.1L1193.5 130.6L1194.5 124.1L1195.5 128.2L1196.5 129.8L1197.5 124.7L1198.5 126.3L1199.5 129L1200.5 124.8L1201.5 127.5L1202.5 130.6L1203.5 125.2L1204.5 127.1L1205.5 129L1206.5 125.5L1207.5 126.7L1208.5 130.6L1209.5 125.5L1210.5 126.5L1211.5 130.5L1212.5 123.7L1213.5 127.8L1214.5 130.4L1215.5 124.1L1216.5 126.6L1217.5 130.5L1218.5 124.7L1219.5 127.1L1220.5 130.6L1221.5 124.5L1222.5 126.2L1223.5 130.5L1224.5 124.1L1225.5 126.5L1226.5 129.4L1227.5 124L1228.5 126.7L1229.5 130.2L1230.5 124.1L1231.5 126L1232.5 130.1L1233.5 123.5L1234.5 127.5L1235.5 128.7L1236.5 124.9L1237.5 126.1L1238.5 129.5L1239.5 124.1L1240.5 126.7L1241.5 129.1L1242.5 124.3L1243.5 126.9L1244.5 129.8L1245.5 123.5L1246.5 126.2L1247.5 128.9L1248.5 123.8L1249.5 126.9L1250.5 129L1251.5 123.7L1252.5 126.8L1253.5 129.5L1254.5 124.4L1255.5 125.7L1256.5 128.7L1257.5 124.5L1258.5 125.8L1259.5 128.8L1260.5 124.8L1261.5 126.8L1262.5 129.3L1263.5 124.2L1264.5 127.4L1265.5 130.3L1266.5 124.6L1267.5 126.1L1268.5 130.2L1269.5 123.1L1270.5 126.3L1271.5 130.1L1272.5 124.7L1273.5 127L1274.5 129.7L1275.5 123.5L1276.5 125.8L1277.5 128.6L1278.5 124.9L1279.5 126.2L1280.5 129.9L1281.5 123.6L1282.5 127.4L1283.5 129.5L1284.5 124.4L1285.5 127L1286.5 128.7L1287.5 124.1L1288.5 125.7L1289.5 129.7L1290.5 124L1291.5 126.5L1292.5 129.9L1293.5 123L1294.5 125.9L1295.5 128.5L1296.5 124.4L1297.5 127.2L1298.5 128.7L1299.5 124.4L1300.5 125.4L1301.5 128.8L1302.5 123.3L1303.5 126.2L1304.5 128.3L1305.5 123L1306.5 125.6L1307.5 129.2L1308.5 123.6L1309.5 127.3L1310.5 129.1L1311.5 123.5L1312.5 125.3L1313.5 129.4L1314.5 124.7L1315.5 127.3L1316.5 129L1317.5 124.5L1318.5 126.3L1319.5 129.6L1320.5 123.9L1321.5 125.4L1322.5 129.9L1323.5 124.1L1324.5 126.4L1325.5 128.7L1326.5 123.4L1327.5 125.4L1328.5 128.9L1329.5 123L1330.5 123.9L1331.5 125.2L1332.5 121.8L1333.5 125.3L1334.5 128.1L1335.5 122.9L1336.5 125.9L1337.5 129.5L1338.5 123.8L1339.5 125.3L1340.5 129.1L1341.5 123.3L1342.5 125.7L1343.5 128.5L1344.5 124L1345.5 125.5L1346.5 129.9L1347.5 124.5L1348.5 127.1L1349.5 128L1350.5 122.7L1351.5 126.5L1352.5 129.8L1353.5 123.3L1354.5 125.7L1355.5 128L1356.5 123.2L1357.5 125.5L1358.5 129.5L1359.5 124.1L1360.5 126.8L1361.5 128.6L1362.5 123.5L1363.5 126.6L1364.5 128.6L1365.5 123.2L1366.5 125.5L1367.5 128.3L1368.5 124.4L1369.5 126L1370.5 128.9L1371.5 123.5L1372.5 125.5L1373.5 128.8L1374.5 123.8L1375.5 126.3L1376.5 128.6L1377.5 123.9L1378.5 126.8L1379.5 129.6L1380.5 124.3L1381.5 126.9L1382.5 129.5L1383.5 122.8L1384.5 126.1L1385.5 127.8L1386.5 122.7L1387.5 125.8L1388.5 128.3L1389.5 124.2L1390.5 126.4L1391.5 128L1392.5 123.7L1393.5 125.2L1394.5 128.5L1395.5 122.7L1396.5 126.2L1397.5 129.2L1398.5 122.6L1399.5 125.3L1400.5 128.1L1401.5 122.7L1402.5 125.3L1403.5 127.9L1404.5 123L1405.5 125.8L1406.5 128.1L1407.5 123.8L1408.5 125.3L1409.5 128.2L1410.5 122.7L1411.5 125.1L1412.5 129L1413.5 123.1L1414.5 126L1415.5 128.9L1416.5 124L1417.5 126L1418.5 128.5L1419.5 123.8L1420.5 125.1L1421.5 128.2L1422.5 123.6L1423.5 125.8L1424.5 127.6L1425.5 122.4L1426.5 126.1L1427.5 128.5L1428.5 122.8L1429.5 124.7L1430.5 127.2L1431.5 122L1432.5 125.6L1433.5 126.9L1434.5 122.7L1435.5 125.2L1436.5 126.9L1437.5 121.4L1438.5 123.7L1439.5 128.2L1440.5 122.1L1441.5 124.9L1442.5 127.9L1443.5 122.4L1444.5 125.4L1445.5 127.3L1446.5 121.1L1447.5 124.6L1448.5 128L1449.5 121.1L1450.5 124.7L1451.5 127.5L1452.5 123L1453.5 124.8L1454.5 127.5L1455.5 121.7L1456.5 125.2L1457.5 126.7L1458.5 121.1L1459.5 125.2L1460.5 126.7L1461.5 122L1462.5 124.8L1463.5 127L1464.5 121.7L1465.5 124.8L1466.5 126.5L1467.5 121.3L1468.5 125.4L1469.5 126.7L1470.5 122.4L1471.5 123.7L1472.5 126.4L1473.5 122.5L1474.5 124.7L1475.5 126.7L1476.5 122.8L1477.5 124.1L1478.5 127.9L1479.5 121L1480.5 124.6L1481.5 127.7L1482.5 122.5L1483.5 124.8L1484.5 127.2L1485.5 121.3L1486.5 123.7L1487.5 127.4L1488.5 121.8L1489.5 124.7L1490.5 126.6L1491.5 121.3L1492.5 124.3L1493.5 126.3L1494.5 122.2L1495.5 123.6L1496.5 126.5L1497.5 121.4L1498.5 125.1L1499.5 127.6L1500.5 121.3L1501.5 124.3L1502.5 127.3L1503.5 122.6L1504.5 123.7L1505.5 127.6L1506.5 121.8L1507.5 124.1L1508.5 126.3L1509.5 121.7L1510.5 124.5L1511.5 126.3L1512.5 122.5L1513.5 123.4L1514.5 127.9L1515.5 121.2L1516.5 125.2L1517.5 128L1518.5 121.3L1519.5 125L1520.5 127.9L1521.5 122.5L1522.5 123.8L1523.5 127.7L1524.5 121.2L1525.5 123.6L1526.5 126.3L1527.5 122.3L1528.5 123.4L1529.5 126.7L1530.5 122.5L1531.5 124.8L1532.5 126.6L1533.5 122L1534.5 125L1535.5 127.3L1536.5 122.3L1537.5 124.1L1538.5 126.7L1539.5 121.7L1540.5 124.6L1541.5 126.1L1542.5 122.7L1543.5 124.3L1544.5 126.7L1545.5 121.4L1546.5 125.2L1547.5 127.4L1548.5 120.9L1549.5 125.2L1550.5 126.4L1551.5 121L1552.5 123.3L1553.5 127.9L1554.5 121.2L1555.5 124.5L1556.5 126L1557.5 122.4L1558.5 123.5L1559.5 127.7L1560.5 121.7L1561.5 124.2L1562.5 127.5L1563.5 122.2L1564.5 124.6L1565.5 126.3L1566.5 121.5L1567.5 124.6L1568.5 137.6L1569 137.6L1569 147.7L1568.5 147.7L1567.5 146.1L1566.5 140L1565.5 147.5L1564.5 145.4L1563.5 140.3L1562.5 147.8L1561.5 145.3L1560.5 142.4L1559.5 148.1L1558.5 145.4L1557.5 140.9L1556.5 147.1L1555.5 145.9L1554.5 142.6L1553.5 147.4L1552.5 145.5L1551.5 142.1L1550.5 148L1549.5 144.3L1548.5 141.6L1547.5 147.1L1546.5 146.3L1545.5 139.8L1544.5 147.3L1543.5 145.8L1542.5 142.7L1541.5 147.9L1540.5 144.7L1539.5 140.9L1538.5 147.1L1537.5 145.6L1536.5 142.9L1535.5 147.1L1534.5 144L1533.5 140.2L1532.5 147.6L1531.5 145.1L1530.5 142.4L1529.5 148.1L1528.5 144.4L1527.5 140.6L1526.5 148.2L1525.5 145L1524.5 139.9L1523.5 147.2L1522.5 145.2L1521.5 141.9L1520.5 147.3L1519.5 144.1L1518.5 140.7L1517.5 147.2L1516.5 145.2L1515.5 142.2L1514.5 147.4L1513.5 146.2L1512.5 140.6L1511.5 147.8L1510.5 144.5L1509.5 141.6L1508.5 147.8L1507.5 145.8L1506.5 142.7L1505.5 147.4L1504.5 146L1503.5 140.5L1502.5 147.6L1501.5 144.5L1500.5 140L1499.5 147.7L1498.5 144.9L1497.5 142L1496.5 147.4L1495.5 145.7L1494.5 141L1493.5 147.8L1492.5 144.7L1491.5 143L1490.5 148.3L1489.5 145.9L1488.5 140.1L1487.5 147.9L1486.5 145.3L1485.5 141.6L1484.5 148.2L1483.5 146L1482.5 140.8L1481.5 148L1480.5 144L1479.5 140.9L1478.5 148.2L1477.5 146.3L1476.5 142.9L1475.5 147.3L1474.5 144.3L1473.5 141.6L1472.5 147.7L1471.5 144.6L1470.5 142.8L1469.5 148.2L1468.5 144.7L1467.5 141.9L1466.5 147.9L1465.5 145.7L1464.5 141.8L1463.5 147.2L1462.5 144.2L1461.5 141.5L1460.5 147.2L1459.5 145.4L1458.5 141.9L1457.5 147.3L1456.5 144.1L1455.5 141.2L1454.5 147.2L1453.5 144.6L1452.5 141.2L1451.5 147.5L1450.5 145.5L1449.5 140.8L1448.5 147.6L1447.5 144.1L1446.5 141.6L1445.5 147.9L1444.5 145.8L1443.5 141.1L1442.5 148L1441.5 144L1440.5 142.6L1439.5 148.2L1438.5 146.2L1437.5 142.1L1436.5 147.5L1435.5 144.2L1434.5 141.4L1433.5 147.5L1432.5 146.1L1431.5 141.7L1430.5 147.8L1429.5 146L1428.5 140L1427.5 148.3L1426.5 144.3L1425.5 142.4L1424.5 147.2L1423.5 145.1L1422.5 142.1L1421.5 147.9L1420.5 145.8L1419.5 141.9L1418.5 148.2L1417.5 145L1416.5 140.8L1415.5 148.1L1414.5 145.2L1413.5 142.7L1412.5 147.5L1411.5 144.9L1410.5 141.8L1409.5 148.3L1408.5 146.3L1407.5 141.9L1406.5 147.4L1405.5 144.3L1404.5 140.7L1403.5 147.3L1402.5 145.6L1401.5 141.8L1400.5 147.5L1399.5 144.2L1398.5 141L1397.5 148.2L1396.5 145.5L1395.5 142L1394.5 147.4L1393.5 144.4L1392.5 140.7L1391.5 148.2L1390.5 145.8L1389.5 140L1388.5 147.5L1387.5 144.1L1386.5 140.7L1385.5 148.1L1384.5 144.6L1383.5 141.4L1382.5 148.2L1381.5 144.1L1380.5 141.7L1379.5 148L1378.5 144.2L1377.5 141L1376.5 147.3L1375.5 144.6L1374.5 142.3L1373.5 147.9L1372.5 145.1L1371.5 141.4L1370.5 147.3L1369.5 146.3L1368.5 140.8L1367.5 147.2L1366.5 145.9L1365.5 142.1L1364.5 147.5L1363.5 144.7L1362.5 141.7L1361.5 148.2L1360.5 145.1L1359.5 140.6L1358.5 147.7L1357.5 145.9L1356.5 142.6L1355.5 148.1L1354.5 144.5L1353.5 142.8L1352.5 148.1L1351.5 145.2L1350.5 140.1L1349.5 147.5L1348.5 144.8L1347.5 142.2L1346.5 148.1L1345.5 145L1344.5 140.6L1343.5 147.6L1342.5 144.1L1341.5 143L1340.5 147.5L1339.5 145L1338.5 142.6L1337.5 148.1L1336.5 145.6L1335.5 140L1334.5 147.9L1333.5 146L1332.5 140L1331.5 144.4L1330.5 141.7L1329.5 141L1328.5 147.3L1327.5 144.3L1326.5 142.3L1325.5 147.4L1324.5 144.4L1323.5 143L1322.5 147.9L1321.5 144.4L1320.5 141.6L1319.5 148.3L1318.5 146.1L1317.5 142.3L1316.5 147.9L1315.5 144.5L1314.5 141L1313.5 147.3L1312.5 145.9L1311.5 139.9L1310.5 147.8L1309.5 144.8L1308.5 140.7L1307.5 148.4L1306.5 145L1305.5 141.9L1304.5 147.4L1303.5 145.2L1302.5 141.6L1301.5 148.4L1300.5 146.1L1299.5 142.1L1298.5 147.9L1297.5 145.9L1296.5 141.4L1295.5 147.3L1294.5 145.9L1293.5 141.6L1292.5 147.9L1291.5 146.2L1290.5 142.7L1289.5 147.4L1288.5 145.3L1287.5 142.4L1286.5 148L1285.5 146.2L1284.5 140.6L1283.5 147.3L1282.5 146.3L1281.5 141.9L1280.5 148.2L1279.5 146.1L1278.5 142.2L1277.5 148.1L1276.5 145.6L1275.5 141.7L1274.5 148.3L1273.5 144.8L1272.5 142.6L1271.5 148.3L1270.5 144.9L1269.5 142.3L1268.5 148.1L1267.5 144.8L1266.5 140L1265.5 147.3L1264.5 144.2L1263.5 140.1L1262.5 148.2L1261.5 145L1260.5 141.4L1259.5 147.5L1258.5 145.9L1257.5 142.2L1256.5 147.5L1255.5 145.4L1254.5 142.2L1253.5 147.3L1252.5 144.4L1251.5 140.5L1250.5 147.3L1249.5 145.4L1248.5 142.8L1247.5 147.3L1246.5 145.7L1245.5 140.4L1244.5 147.8L1243.5 146L1242.5 140.6L1241.5 148.4L1240.5 146.3L1239.5 141.2L1238.5 147.4L1237.5 144.6L1236.5 140.6L1235.5 148.3L1234.5 145.8L1233.5 141L1232.5 148.4L1231.5 146.2L1230.5 140.5L1229.5 147.3L1228.5 144.3L1227.5 141.1L1226.5 148L1225.5 146.3L1224.5 141.3L1223.5 147.7L1222.5 145.9L1221.5 140.3L1220.5 147.8L1219.5 144.6L1218.5 141.3L1217.5 147.5L1216.5 145.5L1215.5 140.4L1214.5 147.9L1213.5 144.7L1212.5 140.3L1211.5 148.5L1210.5 144.6L1209.5 142.5L1208.5 148.2L1207.5 144.7L1206.5 141.3L1205.5 147.8L1204.5 146.2L1203.5 142.3L1202.5 148.4L1201.5 145.8L1200.5 143.3L1199.5 148.4L1198.5 145L1197.5 142.6L1196.5 148.7L1195.5 145.2L1194.5 141.3L1193.5 148.2L1192.5 146.5L1191.5 141.5L1190.5 148.6L1189.5 146.4L1188.5 142.9L1187.5 148.8L1186.5 145.3L1185.5 142.3L1184.5 148L1183.5 145.2L1182.5 142.2L1181.5 148.1L1180.5 146L1179.5 143.1L1178.5 148.1L1177.5 145.5L1176.5 143.2L1175.5 148.7L1174.5 145.3L1173.5 142.1L1172.5 148.6L1171.5 145.5L1170.5 144.4L1169.5 148.9L1168.5 146.9L1167.5 143.3L1166.5 148.4L1165.5 145.7L1164.5 143.6L1163.5 148.8L1162.5 147L1161.5 143.7L1160.5 149.2L1159.5 146.6L1158.5 142.6L1157.5 148.7L1156.5 146.4L1155.5 143.8L1154.5 149.1L1153.5 147.7L1152.5 142.6L1151.5 149.4L1150.5 146.3L1149.5 142.9L1148.5 149L1147.5 147.1L1146.5 142.6L1145.5 148.9L1144.5 146.9L1143.5 144.3L1142.5 148.7L1141.5 147.7L1140.5 144L1139.5 148.8L1138.5 147.4L1137.5 143.3L1136.5 148.9L1135.5 147.6L1134.5 143.3L1133.5 149.3L1132.5 148L1131.5 143.6L1130.5 149L1129.5 146.7L1128.5 143.7L1127.5 149L1126.5 147.9L1125.5 143.8L1124.5 149.4L1123.5 146.9L1122.5 143.8L1121.5 149.1L1120.5 147.2L1119.5 144.2L1118.5 149.4L1117.5 146.9L1116.5 144.2L1115.5 149.9L1114.5 148.3L1113.5 146L1112.5 150.1L1111.5 148.1L1110.5 146.2L1109.5 150.2L1108.5 148.4L1107.5 145.8L1106.5 150.1L1105.5 147.8L1104.5 144.5L1103.5 149.6L1102.5 148.4L1101.5 145.6L1100.5 150L1099.5 149L1098.5 145.1L1097.5 150.4L1096.5 148.3L1095.5 146L1094.5 150L1093.5 149.2L1092.5 145.7L1091.5 150.6L1090.5 148L1089.5 146.9L1088.5 150.7L1087.5 148.3L1086.5 146.5L1085.5 150.5L1084.5 149.5L1083.5 146.8L1082.5 150.5L1081.5 149.7L1080.5 147.5L1079.5 150.9L1078.5 149.5L1077.5 146.6L1076.5 150.4L1075.5 148.7L1074.5 147.7L1073.5 151L1072.5 149.4L1071.5 147.9L1070.5 151.2L1069.5 149L1068.5 147.3L1067.5 150.8L1066.5 149.7L1065.5 147.6L1064.5 151.2L1063.5 149.9L1062.5 150.4L1061.5 151.5L1060.5 150.9L1059.5 150.4L1058.5 151.4L1057.5 150.8L1056.5 150.2L1055.5 151.4L1054.5 151.2L1053.5 150.5L1052.5 151.5L1051.5 150.9L1050.5 150.4L1049.5 151.5L1048.5 151L1047.5 150.4L1046.5 151.6L1045.5 151L1044.5 150.4L1043.5 151.5L1042.5 151.1L1041.5 150.4L1040.5 151.5L1039.5 151.2L1038.5 150.3L1037.5 151.6L1036.5 151.2L1035.5 150.5L1034.5 151.5L1033.5 151.2L1032.5 150.6L1031.5 151.5L1030.5 151.3L1029.5 150.3L1028.5 123.2L1027.5 107.5L1026.5 111.4L1025.5 103.5L1024.5 117.3L1023.5 142.9L1022.5 149L1021.5 146.5L1020.5 142.1L1019.5 148.1L1018.5 146.5L1017.5 141.4L1016.5 148.4L1015.5 144.5L1014.5 142.4L1013.5 147.4L1012.5 144.1L1011.5 141.9L1010.5 148L1009.5 144.8L1008.5 141L1007.5 147.7L1006.5 145.6L1005.5 141.5L1004.5 148.1L1003.5 144.7L1002.5 142.4L1001.5 147.9L1000.5 145.3L999.5 141L998.5 148.3L997.5 144.4L996.5 143.1L995.5 148.2L994.5 144.8L993.5 143L992.5 147.6L991.5 146.3L990.5 142.8L989.5 147.4L988.5 146.2L987.5 140L986.5 147.4L985.5 144.4L984.5 141.3L983.5 147.6L982.5 145.3L981.5 140.5L980.5 147.4L979.5 145.1L978.5 142.2L977.5 148.2L976.5 145.9L975.5 141.2L974.5 148L973.5 144.4L972.5 142.9L971.5 147.4L970.5 144.6L969.5 141.6L968.5 147.5L967.5 144.3L966.5 142.7L965.5 148.2L964.5 146.3L963.5 142.8L962.5 147.3L961.5 144.9L960.5 142.7L959.5 148.1L958.5 144.6L957.5 140.7L956.5 147.6L955.5 144.9L954.5 141.4L953.5 148.3L952.5 146.1L951.5 140.8L950.5 147.3L949.5 146.4L948.5 141.2L947.5 147.7L946.5 146.3L945.5 141.8L944.5 148.1L943.5 145L942.5 142.5L941.5 147.4L940.5 145.1L939.5 142.5L938.5 147.7L937.5 146L936.5 142.6L935.5 148.1L934.5 146.3L933.5 140.7L932.5 147.8L931.5 145.1L930.5 140.2L929.5 148.1L928.5 146.1L927.5 141.7L926.5 148.4L925.5 145.9L924.5 141.6L923.5 148L922.5 145.2L921.5 141.5L920.5 148.1L919.5 144.4L918.5 142L917.5 147.5L916.5 145.2L915.5 140.1L914.5 148.1L913.5 145.8L912.5 143L911.5 148.4L910.5 146.5L909.5 141.3L908.5 148.2L907.5 144.4L906.5 142.9L905.5 148L904.5 145.4L903.5 140.5L902.5 147.5L901.5 146.1L900.5 140.1L899.5 147.8L898.5 145.6L897.5 141.4L896.5 148.3L895.5 145.1L894.5 142.5L893.5 147.4L892.5 145.2L891.5 143L890.5 147.6L889.5 144.5L888.5 142.1L887.5 147.4L886.5 144.4L885.5 141.8L884.5 148.2L883.5 145.6L882.5 140.7L881.5 147.8L880.5 145.5L879.5 140.9L878.5 147.6L877.5 144.4L876.5 141.8L875.5 147.8L874.5 145.9L873.5 142.3L872.5 148.1L871.5 145.2L870.5 142.8L869.5 147.8L868.5 145.6L867.5 141.7L866.5 148.4L865.5 145.8L864.5 140.1L863.5 147.7L862.5 144.6L861.5 140.1L860.5 147.3L859.5 146.3L858.5 141.4L857.5 148.3L856.5 144.9L855.5 141.8L854.5 148.1L853.5 144.5L852.5 140.8L851.5 148.4L850.5 145.4L849.5 142.9L848.5 148.3L847.5 144.2L846.5 140.5L845.5 148.4L844.5 145.6L843.5 142.1L842.5 148.1L841.5 144.6L840.5 140.5L839.5 148.1L838.5 146.4L837.5 142.3L836.5 147.7L835.5 146.5L834.5 141.8L833.5 147.8L832.5 146.3L831.5 143.1L830.5 148L829.5 146.2L828.5 142.5L827.5 148.2L826.5 146.2L825.5 141.7L824.5 148.2L823.5 144.5L822.5 142.7L821.5 148L820.5 145.3L819.5 141L818.5 148.1L817.5 145.6L816.5 141.4L815.5 147.8L814.5 144.8L813.5 142.7L812.5 147.9L811.5 145.4L810.5 140.8L809.5 147.9L808.5 145.8L807.5 141.9L806.5 147.6L805.5 144.6L804.5 143L803.5 148.4L802.5 144.5L801.5 141L800.5 147.6L799.5 146.1L798.5 143L797.5 148.2L796.5 146.4L795.5 140.3L794.5 147.7L793.5 145.9L792.5 141.8L791.5 147.6L790.5 146.2L789.5 140.7L788.5 148.1L787.5 145.9L786.5 142.2L785.5 147.8L784.5 145.7L783.5 142.9L782.5 147.8L781.5 144.7L780.5 141.5L779.5 148.2L778.5 145.6L777.5 142.3L776.5 147.9L775.5 144.2L774.5 141.9L773.5 148.3L772.5 145.4L771.5 142.3L770.5 148.3L769.5 146.4L768.5 142.5L767.5 147.5L766.5 145.5L765.5 142.8L764.5 147.3L763.5 146.1L762.5 141.6L761.5 148.2L760.5 145.9L759.5 140.1L758.5 147.5L757.5 144.5L756.5 142.3L755.5 147.3L754.5 146.3L753.5 142L752.5 148.3L751.5 145.6L750.5 140.7L749.5 147.5L748.5 145.2L747.5 142.8L746.5 148.3L745.5 144.1L744.5 142.3L743.5 148.2L742.5 144.5L741.5 140.9L740.5 148L739.5 144.1L738.5 141.1L737.5 147.8L736.5 146.1L735.5 140L734.5 147.4L733.5 144.5L732.5 142.6L731.5 148L730.5 145.4L729.5 140.4L728.5 148L727.5 145.2L726.5 142L725.5 148L724.5 145.3L723.5 140.7L722.5 147.8L721.5 144.3L720.5 140.1L719.5 148.1L718.5 145.1L717.5 142.2L716.5 147.9L715.5 145.7L714.5 141.9L713.5 147.9L712.5 145L711.5 141.8L710.5 147.9L709.5 146.5L708.5 140.2L707.5 147.9L706.5 144.7L705.5 140.4L704.5 148L703.5 144.7L702.5 142.8L701.5 148L700.5 144.4L699.5 140.7L698.5 148.1L697.5 145.9L696.5 143.1L695.5 147.8L694.5 145.7L693.5 141.4L692.5 148.2L691.5 145L690.5 142.9L689.5 148L688.5 146.2L687.5 141.7L686.5 147.3L685.5 144.9L684.5 140.1L683.5 148.1L682.5 145.2L681.5 142.3L680.5 147.4L679.5 145L678.5 140.1L677.5 147.8L676.5 145.2L675.5 141.8L674.5 147.3L673.5 144.5L672.5 140.6L671.5 148L670.5 144.6L669.5 141.5L668.5 148L667.5 146.1L666.5 142.7L665.5 148.3L664.5 145.8L663.5 142.7L662.5 147.4L661.5 145.2L660.5 143.1L659.5 148.3L658.5 145.9L657.5 142.4L656.5 147.8L655.5 145.3L654.5 142.9L653.5 147.6L652.5 144.5L651.5 141.5L650.5 148.4L649.5 146.1L648.5 142.5L647.5 147.9L646.5 145.3L645.5 142.1L644.5 147.6L643.5 146.3L642.5 140.6L641.5 148.2L640.5 145L639.5 142.5L638.5 148.2L637.5 146L636.5 142.5L635.5 148.4L634.5 144.6L633.5 142.2L632.5 147.4L631.5 144.3L630.5 142L629.5 148.1L628.5 144.9L627.5 140L626.5 148.1L625.5 145.7L624.5 142.6L623.5 147.4L622.5 144.8L621.5 142.7L620.5 147.5L619.5 145L618.5 142.8L617.5 147.4L616.5 146L615.5 142.5L614.5 147.6L613.5 146.1L612.5 142.3L611.5 147.6L610.5 144.9L609.5 142.7L608.5 147.7L607.5 146.4L606.5 140.3L605.5 148.4L604.5 144.2L603.5 141.9L602.5 147.7L601.5 144.2L600.5 141.2L599.5 147.3L598.5 145.2L597.5 142.6L596.5 148.1L595.5 144.7L594.5 140.7L593.5 147.9L592.5 146.4L591.5 142L590.5 147.5L589.5 145.6L588.5 142.7L587.5 147.8L586.5 146L585.5 141.3L584.5 147.4L583.5 145.9L582.5 142.9L581.5 147.6L580.5 145.4L579.5 142.4L578.5 148.2L577.5 146.3L576.5 141L575.5 148.1L574.5 144.6L573.5 140.3L572.5 147.9L571.5 145.8L570.5 141.2L569.5 147.4L568.5 145.1L567.5 141.2L566.5 147.6L565.5 145.8L564.5 140.1L563.5 148L562.5 145.6L561.5 141L560.5 148L559.5 144.4L558.5 142.1L557.5 147.7L556.5 144.8L555.5 140.2L554.5 147.7L553.5 144.5L552.5 143L551.5 148.2L550.5 146.2L549.5 140.1L548.5 148.4L547.5 146L546.5 141.8L545.5 147.3L544.5 146.4L543.5 141.3L542.5 148.4L541.5 144.3L540.5 142.1L539.5 148.1L538.5 144.5L537.5 140.2L536.5 148.2L535.5 145.4L534.5 141L533.5 147.7L532.5 144.3L531.5 141.2L530.5 148.4L529.5 145.2L528.5 143L527.5 147.8L526.5 145.7L525.5 140.1L524.5 147.9L523.5 145.8L522.5 141.8L521.5 147.5L520.5 145.6L519.5 141.2L518.5 147.4L517.5 144.2L516.5 141L515.5 147.7L514.5 144.2L513.5 140.5L512.5 147.9L511.5 144.4L510.5 141.6L509.5 148.4L508.5 145.9L507.5 140.3L506.5 147.8L505.5 144.5L504.5 141L503.5 147.4L502.5 144.3L501.5 140.7L500.5 148.3L499.5 144.2L498.5 141.1L497.5 147.5L496.5 146.3L495.5 142L494.5 147.9L493.5 145.9L492.5 143.1L491.5 148.1L490.5 144.5L489.5 142.7L488.5 147.9L487.5 145L486.5 142.4L485.5 147.7L484.5 146.2L483.5 140.6L482.5 147.3L481.5 145.8L480.5 141.8L479.5 148L478.5 145.6L477.5 140.7L476.5 148.2L475.5 145.2L474.5 141.5L473.5 147.8L472.5 144.3L471.5 141.4L470.5 147.9L469.5 144.9L468.5 141L467.5 147.9L466.5 145L465.5 141.8L464.5 148.1L463.5 144.9L462.5 140.7L461.5 148.2L460.5 145.1L459.5 140.8L458.5 148.3L457.5 145.3L456.5 141.9L455.5 148.2L454.5 146L453.5 140.6L452.5 148.3L451.5 144.8L450.5 142.1L449.5 148.1L448.5 146.1L447.5 142.2L446.5 147.4L445.5 145.1L444.5 142.6L443.5 147.4L442.5 145.7L441.5 140.7L440.5 148.2L439.5 145.3L438.5 142.5L437.5 148.3L436.5 145.5L435.5 140.6L434.5 148.4L433.5 145.3L432.5 142.2L431.5 147.5L430.5 146L429.5 141.6L428.5 147.5L427.5 146.1L426.5 140.4L425.5 147.6L424.5 145.4L423.5 141.2L422.5 147.3L421.5 144.8L420.5 143.1L419.5 148.2L418.5 146.2L417.5 140.5L416.5 147.4L415.5 146L414.5 140.2L413.5 147.4L412.5 145.6L411.5 140.8L410.5 147.6L409.5 146.1L408.5 142.8L407.5 147.4L406.5 146L405.5 140.8L404.5 147.6L403.5 144.2L402.5 141.1L401.5 148.1L400.5 144.7L399.5 142.4L398.5 147.4L397.5 145L396.5 140.6L395.5 148.1L394.5 144.8L393.5 143L392.5 148.2L391.5 145.4L390.5 143.1L389.5 147.4L388.5 145.7L387.5 141.1L386.5 148.2L385.5 145.2L384.5 142.9L383.5 147.8L382.5 145.9L381.5 141.7L380.5 147.8L379.5 145.9L378.5 140.4L377.5 148.3L376.5 146.2L375.5 142.5L374.5 148.2L373.5 145.6L372.5 141.1L371.5 147.4L370.5 145L369.5 143.1L368.5 147.8L367.5 145.9L366.5 140.8L365.5 147.5L364.5 144.1L363.5 141.9L362.5 148.3L361.5 145.2L360.5 141.1L359.5 147.5L358.5 144.9L357.5 142.6L356.5 147.8L355.5 144.3L354.5 140.6L353.5 148.3L352.5 146.3L351.5 142.6L350.5 147.9L349.5 144.5L348.5 140.4L347.5 148L346.5 145.3L345.5 142.9L344.5 147.8L343.5 145.5L342.5 141.6L341.5 147.5L340.5 145.3L339.5 141.7L338.5 147.9L337.5 145.8L336.5 141.2L335.5 148.4L334.5 146.4L333.5 142.3L332.5 147.8L331.5 146L330.5 141.9L329.5 148.3L328.5 144.3L327.5 143L326.5 147.3L325.5 144.2L324.5 142.8L323.5 148.1L322.5 145.6L321.5 140.3L320.5 148.4L319.5 144.4L318.5 141.8L317.5 148.2L316.5 145.6L315.5 141.8L314.5 148.1L313.5 145.8L312.5 142.6L311.5 147.8L310.5 146.3L309.5 142.5L308.5 147.6L307.5 146L306.5 142.3L305.5 148L304.5 145.1L303.5 140.7L302.5 147.4L301.5 145.1L300.5 142.8L299.5 147.4L298.5 145.4L297.5 141.1L296.5 147.8L295.5 145.7L294.5 142.6L293.5 148.2L292.5 145.1L291.5 142.7L290.5 147.6L289.5 145.5L288.5 140.9L287.5 148.3L286.5 144.4L285.5 141.4L284.5 148.2L283.5 146.3L282.5 142.1L281.5 147.5L280.5 144.6L279.5 141.6L278.5 148L277.5 145.4L276.5 140.2L275.5 147.6L274.5 145.7L273.5 141.2L272.5 148L271.5 145.9L270.5 143L269.5 147.5L268.5 144.4L267.5 140.2L266.5 148.4L265.5 144.5L264.5 140.1L263.5 148L262.5 146.1L261.5 141.9L260.5 147.6L259.5 145.7L258.5 140.8L257.5 148L256.5 146.1L255.5 141.9L254.5 147.7L253.5 146L252.5 142.2L251.5 148.2L250.5 144.2L249.5 140.8L248.5 147.6L247.5 146.4L246.5 141L245.5 147.6L244.5 145.7L243.5 142.3L242.5 147.4L241.5 145.4L240.5 141.2L239.5 147.8L238.5 146.2L237.5 142.3L236.5 147.7L235.5 144.6L234.5 141.7L233.5 147.6L232.5 145.2L231.5 142.3L230.5 147.5L229.5 146.5L228.5 140.3L227.5 148.4L226.5 144.2L225.5 142.3L224.5 147.4L223.5 146.2L222.5 142.9L221.5 147.8L220.5 144.7L219.5 142.3L218.5 148L217.5 146.1L216.5 140.3L215.5 147.4L214.5 146.1L213.5 142.2L212.5 147.3L211.5 145.7L210.5 140.2L209.5 147.7L208.5 144.7L207.5 141.4L206.5 147.7L205.5 144.2L204.5 141.5L203.5 147.3L202.5 146.2L201.5 141.8L200.5 147.3L199.5 145.8L198.5 140.2L197.5 147.6L196.5 145.7L195.5 142.2L194.5 148.4L193.5 144.4L192.5 140.3L191.5 148.3L190.5 146.1L189.5 140.1L188.5 147.9L187.5 145.4L186.5 140L185.5 148.3L184.5 145.3L183.5 140.9L182.5 148.4L181.5 145.8L180.5 142.7L179.5 147.7L178.5 145.3L177.5 140.1L176.5 147.6L175.5 145.9L174.5 141L173.5 147.6L172.5 145.3L171.5 141.1L170.5 148.3L169.5 144.8L168.5 135.2L167.5 138L166.5 142.2L165.5 146L164.5 145.9L163.5 146.2L162.5 146.4L161.5 146.5L160.5 146.4L159.5 146.2L158.5 146.7L157.5 146.7L156.5 146.9L155.5 146.9L154.5 146.6L153.5 146.8L152.5 146.6L151.5 146.8L150.5 147L149.5 147.1L148.5 147.2L147.5 146.8L146.5 147.3L145.5 146.9L144.5 147.4L143.5 147.4L142.5 147.4L141.5 147L140.5 147.3L139.5 147.7L138.5 147.5L137.5 147.5L136.5 147.3L135.5 142.6L134.5 147.7L133.5 146.3L132.5 142.7L131.5 147.8L130.5 144.4L129.5 141.6L128.5 147.6L127.5 145L126.5 140.7L125.5 147.5L124.5 145.2L123.5 141.4L122.5 147.8L121.5 146.1L120.5 142.5L119.5 147.8L118.5 144.3L117.5 141.3L116.5 147.4L115.5 145.9L114.5 142.2L113.5 147.5L112.5 144.3L111.5 140.1L110.5 147.8L109.5 144.2L108.5 140.6L107.5 148.3L106.5 144.2L105.5 140.1L104.5 147.5L103.5 144.7L102.5 141L101.5 147.7L100.5 144.3L99.5 142.5L98.5 148L97.5 144.3L96.5 140.9L95.5 148.4L94.5 145.3L93.5 140.5L92.5 147.3L91.5 145.7L90.5 140.7L89.5 148.1L88.5 144.2L87.5 141.4L86.5 147.3L85.5 144.5L84.5 142.8L83.5 147.9L82.5 146.2L81.5 142.3L80.5 147.4L79.5 146.2L78.5 143L77.5 148.2L76.5 145L75.5 141.9L74.5 147.5L73.5 144.9L72.5 141L71.5 148L70.5 145.9L69.5 142.4L68.5 148.3L67.5 145.6L66.5 140.4L65.5 147.8L64.5 144.4L63.5 142.7L62.5 148.3L61.5 146.4L60.5 142.2L59.5 147.7L58.5 144.9L57.5 140.5L56.5 147.7L55.5 144.4L54.5 141L53.5 148.3L52.5 146.2L51.5 140.8L50.5 147.8L49.5 144.6L48.5 141.3L47.5 147.6L46.5 146.3L45.5 141.1L44.5 147.5L43.5 146.1L42.5 143L41.5 147.8L40.5 145.9L39.5 141.8L38.5 147.9L37.5 146.3L36.5 142.9L35.5 148.1Z" fill="#00ff00" stroke="#00ff00" stroke-width="0.35" stroke-linejoin="round"/><path d="M136 127.1L136 124.7L136.5 124.7L137.5 125.6L138.5 124.5L139.5 125L140.5 128L141.5 124.3L142.5 125L143.5 126.6L144.5 123.6L145.5 124.4L146.5 127.3L147.5 124.4L148.5 125.5L149.5 127.5L150.5 124.2L151.5 124.8L152.5 127.2L153.5 123L154.5 124.9L155.5 126.7L156.5 123.2L157.5 124.8L158.5 126.3L159.5 123.9L160.5 125.2L161.5 127.2L162.5 123.5L163.5 124L164.5 126.6L165.5 123.4L166.5 120.1L167.5 109.2L168.5 114.9L169.5 124.8L170 124.8L170 126.2L169.5 126.2L168.5 120.4L167.5 122.6L166.5 129.7L165.5 127.9L164.5 134.7L163.5 130.8L162.5 129.2L161.5 134.7L160.5 131.1L159.5 128.9L158.5 132.9L157.5 131.5L156.5 127.8L155.5 134.6L154.5 130.7L153.5 128L152.5 133.8L151.5 131.5L150.5 129.2L149.5 133.1L148.5 131.5L147.5 128.7L146.5 132.8L145.5 130.5L144.5 129L143.5 134.1L142.5 131.4L141.5 128.8L140.5 133.3L139.5 130.4L138.5 128.3L137.5 131.1L136.5 127.1ZM1013 126.2L1013 125.1L1013.5 125.1L1014 125.1L1014 126.2L1013.5 126.2ZM1016 124.2L1016 123.6L1016.5 123.6L1017 123.6L1017 124.2L1016.5 124.2ZM1018 120.5L1018 117.9L1018.5 117.9L1019.5 120.5L1020.5 115.7L1021.5 116L1022.5 118.3L1023.5 106.3L1024.5 92.5L1025.5 68.9L1026.5 61L1027.5 84.6L1028.5 114.2L1029 114.2L1029 115.4L1028.5 115.4L1027.5 85.8L1026.5 62.2L1025.5 70L1024.5 93.7L1023.5 107.5L1022.5 122.2L1021.5 119.6L1020.5 117.9L1019.5 122.4L1018.5 120.5ZM1031 139.8L1031 139L1031.5 139L1032 139L1032 139.8L1031.5 139.8ZM1034 141.7L1034 140.5L1034.5 140.5L1035 140.5L1035 141.7L1034.5 141.7ZM1037 145.2L1037 145.1L1037.5 145.1L1038 145.1L1038 145.2L1037.5 145.2ZM1039 144.2L1039 142L1039.5 142L1040.5 141.3L1041.5 138.7L1042.5 137.5L1043.5 136.9L1044.5 134.4L1045.5 132.7L1046.5 132.1L1047.5 128.7L1048.5 127.5L1049.5 126.4L1050.5 123.3L1051.5 122L1052.5 120.2L1053.5 116.6L1054.5 114.9L1055.5 113L1056.5 108.7L1057.5 106.6L1058.5 107.4L1059.5 105L1060.5 105.5L1061.5 107L1062.5 104.5L1063.5 104.6L1064.5 107.2L1065.5 103.6L1066.5 104.5L1067.5 106.3L1068.5 102.5L1069.5 104.3L1070.5 107.2L1071.5 103L1072.5 103.8L1073.5 107L1074.5 103.7L1075.5 103.8L1076.5 106.9L1077.5 102.4L1078.5 104.2L1079.5 106.5L1080.5 102.1L1081.5 103.6L1082.5 106.2L1083.5 103.4L1084.5 103L1085.5 106.3L1086.5 103.3L1087.5 103.6L1088.5 105.4L1089.5 103.4L1090.5 102.9L1091.5 106L1092.5 102.1L1093.5 104.1L1094.5 105.9L1095.5 102.2L1096.5 103.6L1097.5 105L1098.5 102.4L1099.5 103.9L1100.5 105.7L1101.5 102.5L1102.5 103.8L1103.5 105L1104.5 101.7L1105.5 102.8L1106.5 105.7L1107.5 102.8L1108.5 102.6L1109.5 105.2L1110.5 101.7L1111.5 103L1112.5 105.5L1113.5 101.6L1114.5 103.5L1115.5 104.5L1116.5 101.9L1117.5 102.6L1118.5 104.7L1119.5 102.3L1120.5 103.3L1121.5 104.7L1122.5 101.8L1123.5 103L1124.5 105.6L1125.5 101.1L1126.5 103L1127.5 104.6L1128.5 101.2L1129.5 103.1L1130.5 104.7L1131.5 101.4L1132.5 102.5L1133.5 105.2L1134.5 101.7L1135.5 102.4L1136.5 104.3L1137.5 101.6L1138.5 101.6L1139.5 104.5L1140.5 101.7L1141.5 102.9L1142.5 104L1143.5 101L1144.5 101.4L1145.5 104.2L1146.5 100.7L1147.5 101.7L1148.5 103.5L1149.5 100.8L1150.5 101.5L1151.5 104.8L1152.5 100.7L1153.5 101.4L1154.5 104.5L1155.5 100.6L1156.5 101.1L1157.5 104.7L1158.5 101L1159.5 102.3L1160.5 104.8L1161.5 100L1162.5 102.2L1163.5 104.5L1164.5 101.1L1165.5 101.2L1166.5 104.6L1167.5 100.4L1168.5 101L1169.5 104.4L1170.5 100.5L1171.5 102L1172.5 103.7L1173.5 100.9L1174.5 101.3L1175.5 103.6L1176.5 100.8L1177.5 101.5L1178.5 104.2L1179.5 100L1180.5 101.4L1181.5 103.3L1182.5 100.5L1183.5 101L1184.5 103.5L1185.5 101.2L1186.5 101.9L1187.5 103L1188.5 101.1L1189.5 101.2L1190.5 103.8L1191.5 99.9L1192.5 101.6L1193.5 103.3L1194.5 100.3L1195.5 101.3L1196.5 103.3L1197.5 100.2L1198.5 100.8L1199.5 104.3L1200.5 100L1201.5 101.8L1202.5 103.2L1203.5 99.9L1204.5 100.9L1205.5 102.9L1206.5 100.7L1207.5 101L1208.5 103.3L1209.5 100.7L1210.5 101.2L1211.5 103.1L1212.5 99.7L1213.5 101.7L1214.5 103.9L1215.5 99.4L1216.5 101.3L1217.5 104.2L1218.5 100.9L1219.5 101.8L1220.5 103.7L1221.5 99.8L1222.5 101.2L1223.5 103.8L1224.5 99.7L1225.5 101.7L1226.5 103L1227.5 100L1228.5 101.6L1229.5 103.5L1230.5 99.6L1231.5 100.4L1232.5 102.6L1233.5 99.7L1234.5 101.6L1235.5 102.9L1236.5 99.9L1237.5 100.2L1238.5 102.7L1239.5 99.4L1240.5 101.1L1241.5 103.9L1242.5 100.4L1243.5 101.4L1244.5 103.8L1245.5 100.4L1246.5 101.3L1247.5 103.9L1248.5 99.6L1249.5 100.5L1250.5 102.6L1251.5 100.4L1252.5 100.1L1253.5 102.7L1254.5 99.9L1255.5 100.4L1256.5 102.2L1257.5 99.8L1258.5 99.9L1259.5 102.3L1260.5 99.1L1261.5 100.5L1262.5 102.7L1263.5 98.9L1264.5 101L1265.5 103.3L1266.5 99.6L1267.5 100.1L1268.5 102.6L1269.5 99.3L1270.5 100.2L1271.5 103.6L1272.5 99.5L1273.5 100.1L1274.5 103L1275.5 100.1L1276.5 101.2L1277.5 102.3L1278.5 100L1279.5 100.3L1280.5 103.4L1281.5 99.3L1282.5 99.9L1283.5 102.4L1284.5 99.6L1285.5 99.9L1286.5 103.2L1287.5 99.6L1288.5 101.1L1289.5 103.5L1290.5 99L1291.5 100.9L1292.5 103.4L1293.5 99.3L1294.5 100.2L1295.5 103.3L1296.5 99.9L1297.5 100.7L1298.5 103.3L1299.5 99.1L1300.5 100.3L1301.5 102.6L1302.5 99.2L1303.5 100L1304.5 102.2L1305.5 99.8L1306.5 100.9L1307.5 103.2L1308.5 98.6L1309.5 99.5L1310.5 101.9L1311.5 99.7L1312.5 100.3L1313.5 102.7L1314.5 99.4L1315.5 100L1316.5 102.2L1317.5 98.5L1318.5 100L1319.5 103L1320.5 98.6L1321.5 100.5L1322.5 101.8L1323.5 99.5L1324.5 100.1L1325.5 102.5L1326.5 99L1327.5 100.6L1328.5 103L1329.5 98.1L1330.5 96.5L1331.5 98.5L1332.5 97.2L1333.5 99.6L1334.5 102.9L1335.5 99.5L1336.5 99.6L1337.5 102.8L1338.5 99.2L1339.5 99.9L1340.5 102.9L1341.5 99.5L1342.5 99.5L1343.5 101.6L1344.5 99.4L1345.5 99.4L1346.5 102.3L1347.5 99.8L1348.5 100.4L1349.5 103.1L1350.5 99.5L1351.5 100.1L1352.5 102.9L1353.5 98.6L1354.5 100.2L1355.5 102.2L1356.5 99.1L1357.5 99.4L1358.5 101.9L1359.5 99.5L1360.5 100.4L1361.5 102.6L1362.5 98.5L1363.5 100.2L1364.5 101.6L1365.5 99.2L1366.5 99.3L1367.5 102.5L1368.5 98.7L1369.5 100.4L1370.5 102.6L1371.5 99L1372.5 100.4L1373.5 102.5L1374.5 98.8L1375.5 99.8L1376.5 102.7L1377.5 99.5L1378.5 99.8L1379.5 101.7L1380.5 98.9L1381.5 100.1L1382.5 102.8L1383.5 99.2L1384.5 100L1385.5 102.7L1386.5 98.1L1387.5 100L1388.5 102.6L1389.5 98.2L1390.5 99.7L1391.5 102.3L1392.5 99.1L1393.5 99.5L1394.5 101.4L1395.5 98.1L1396.5 99.8L1397.5 101.3L1398.5 98.2L1399.5 98.8L1400.5 102.3L1401.5 99.2L1402.5 99.8L1403.5 102.5L1404.5 98.3L1405.5 99.6L1406.5 101.3L1407.5 99.2L1408.5 100L1409.5 102.4L1410.5 97.8L1411.5 99.6L1412.5 101.3L1413.5 98L1414.5 98.9L1415.5 102.1L1416.5 97.8L1417.5 99.1L1418.5 101.3L1419.5 98.1L1420.5 98.7L1421.5 101.1L1422.5 98.1L1423.5 99.2L1424.5 101.7L1425.5 98.3L1426.5 98.7L1427.5 109.6L1428.5 114.3L1429 114.3L1429 122.8L1428.5 122.8L1427.5 128.5L1426.5 126.1L1425.5 122.4L1424.5 127.6L1423.5 125.8L1422.5 123.6L1421.5 128.2L1420.5 125.1L1419.5 123.8L1418.5 128.5L1417.5 126L1416.5 124L1415.5 128.9L1414.5 126L1413.5 123.1L1412.5 129L1411.5 125.1L1410.5 122.7L1409.5 128.2L1408.5 125.3L1407.5 123.8L1406.5 128.1L1405.5 125.8L1404.5 123L1403.5 127.9L1402.5 125.3L1401.5 122.7L1400.5 128.1L1399.5 125.3L1398.5 122.6L1397.5 129.2L1396.5 126.2L1395.5 122.7L1394.5 128.5L1393.5 125.2L1392.5 123.7L1391.5 128L1390.5 126.4L1389.5 124.2L1388.5 128.3L1387.5 125.8L1386.5 122.7L1385.5 127.8L1384.5 126.1L1383.5 122.8L1382.5 129.5L1381.5 126.9L1380.5 124.3L1379.5 129.6L1378.5 126.8L1377.5 123.9L1376.5 128.6L1375.5 126.3L1374.5 123.8L1373.5 128.8L1372.5 125.5L1371.5 123.5L1370.5 128.9L1369.5 126L1368.5 124.4L1367.5 128.3L1366.5 125.5L1365.5 123.2L1364.5 128.6L1363.5 126.6L1362.5 123.5L1361.5 128.6L1360.5 126.8L1359.5 124.1L1358.5 129.5L1357.5 125.5L1356.5 123.2L1355.5 128L1354.5 125.7L1353.5 123.3L1352.5 129.8L1351.5 126.5L1350.5 122.7L1349.5 128L1348.5 127.1L1347.5 124.5L1346.5 129.9L1345.5 125.5L1344.5 124L1343.5 128.5L1342.5 125.7L1341.5 123.3L1340.5 129.1L1339.5 125.3L1338.5 123.8L1337.5 129.5L1336.5 125.9L1335.5 122.9L1334.5 128.1L1333.5 125.3L1332.5 121.8L1331.5 125.2L1330.5 123.9L1329.5 123L1328.5 128.9L1327.5 125.4L1326.5 123.4L1325.5 128.7L1324.5 126.4L1323.5 124.1L1322.5 129.9L1321.5 125.4L1320.5 123.9L1319.5 129.6L1318.5 126.3L1317.5 124.5L1316.5 129L1315.5 127.3L1314.5 124.7L1313.5 129.4L1312.5 125.3L1311.5 123.5L1310.5 129.1L1309.5 127.3L1308.5 123.6L1307.5 129.2L1306.5 125.6L1305.5 123L1304.5 128.3L1303.5 126.2L1302.5 123.3L1301.5 128.8L1300.5 125.4L1299.5 124.4L1298.5 128.7L1297.5 127.2L1296.5 124.4L1295.5 128.5L1294.5 125.9L1293.5 123L1292.5 129.9L1291.5 126.5L1290.5 124L1289.5 129.7L1288.5 125.7L1287.5 124.1L1286.5 128.7L1285.5 127L1284.5 124.4L1283.5 129.5L1282.5 127.4L1281.5 123.6L1280.5 129.9L1279.5 126.2L1278.5 124.9L1277.5 128.6L1276.5 125.8L1275.5 123.5L1274.5 129.7L1273.5 127L1272.5 124.7L1271.5 130.1L1270.5 126.3L1269.5 123.1L1268.5 130.2L1267.5 126.1L1266.5 124.6L1265.5 130.3L1264.5 127.4L1263.5 124.2L1262.5 129.3L1261.5 126.8L1260.5 124.8L1259.5 128.8L1258.5 125.8L1257.5 124.5L1256.5 128.7L1255.5 125.7L1254.5 124.4L1253.5 129.5L1252.5 126.8L1251.5 123.7L1250.5 129L1249.5 126.9L1248.5 123.8L1247.5 128.9L1246.5 126.2L1245.5 123.5L1244.5 129.8L1243.5 126.9L1242.5 124.3L1241.5 129.1L1240.5 126.7L1239.5 124.1L1238.5 129.5L1237.5 126.1L1236.5 124.9L1235.5 128.7L1234.5 127.5L1233.5 123.5L1232.5 130.1L1231.5 126L1230.5 124.1L1229.5 130.2L1228.5 126.7L1227.5 124L1226.5 129.4L1225.5 126.5L1224.5 124.1L1223.5 130.5L1222.5 126.2L1221.5 124.5L1220.5 130.6L1219.5 127.1L1218.5 124.7L1217.5 130.5L1216.5 126.6L1215.5 124.1L1214.5 130.4L1213.5 127.8L1212.5 123.7L1211.5 130.5L1210.5 126.5L1209.5 125.5L1208.5 130.6L1207.5 126.7L1206.5 125.5L1205.5 129L1204.5 127.1L1203.5 125.2L1202.5 130.6L1201.5 127.5L1200.5 124.8L1199.5 129L1198.5 126.3L1197.5 124.7L1196.5 129.8L1195.5 128.2L1194.5 124.1L1193.5 130.6L1192.5 127.1L1191.5 125.7L1190.5 131L1189.5 128.3L1188.5 124.4L1187.5 129.8L1186.5 127.8L1185.5 125.3L1184.5 130.9L1183.5 126.9L1182.5 124.4L1181.5 129.6L1180.5 127.6L1179.5 124.9L1178.5 130.9L1177.5 127.4L1176.5 124.3L1175.5 129.4L1174.5 127.2L1173.5 125.7L1172.5 129.8L1171.5 128L1170.5 124.3L1169.5 130.1L1168.5 127.8L1167.5 124.9L1166.5 130.7L1165.5 127.7L1164.5 124.1L1163.5 131.2L1162.5 126.8L1161.5 124.2L1160.5 130.8L1159.5 126.9L1158.5 124.5L1157.5 130.9L1156.5 127.9L1155.5 124.2L1154.5 130L1153.5 127.9L1152.5 125.9L1151.5 130.9L1150.5 127L1149.5 124.9L1148.5 130.8L1147.5 127.8L1146.5 125.6L1145.5 131.5L1144.5 128.2L1143.5 126.2L1142.5 130.8L1141.5 128L1140.5 124.5L1139.5 131L1138.5 128.6L1137.5 126.2L1136.5 131.7L1135.5 127.8L1134.5 125.4L1133.5 131.3L1132.5 127.6L1131.5 126.7L1130.5 131.4L1129.5 128.5L1128.5 125.2L1127.5 130.8L1126.5 128.5L1125.5 126.4L1124.5 130.4L1123.5 127.8L1122.5 125.8L1121.5 130.5L1120.5 128.1L1119.5 126.3L1118.5 130.7L1117.5 128.2L1116.5 126.2L1115.5 131.8L1114.5 129.1L1113.5 126.7L1112.5 130.7L1111.5 128.2L1110.5 126.1L1109.5 132.1L1108.5 128.7L1107.5 125.6L1106.5 132.7L1105.5 129.5L1104.5 126.5L1103.5 131.8L1102.5 129.7L1101.5 126.5L1100.5 132.6L1099.5 128.4L1098.5 125.9L1097.5 132.6L1096.5 129.5L1095.5 127.5L1094.5 131.9L1093.5 129.2L1092.5 127.4L1091.5 132.5L1090.5 129.7L1089.5 126L1088.5 132.7L1087.5 129.3L1086.5 126.1L1085.5 132.7L1084.5 128.7L1083.5 126.7L1082.5 133.2L1081.5 129.9L1080.5 126.5L1079.5 131.7L1078.5 129.6L1077.5 128.1L1076.5 132.2L1075.5 130L1074.5 128.1L1073.5 132L1072.5 129.6L1071.5 126.5L1070.5 132L1069.5 130.9L1068.5 127.5L1067.5 133.2L1066.5 129.9L1065.5 128.4L1064.5 132.3L1063.5 130.4L1062.5 128.5L1061.5 132.7L1060.5 130.8L1059.5 128.8L1058.5 134.9L1057.5 130.6L1056.5 130.8L1055.5 133.3L1054.5 132.7L1053.5 132.7L1052.5 134.9L1051.5 134.6L1050.5 134.1L1049.5 137L1048.5 136.7L1047.5 136.2L1046.5 139.2L1045.5 139.2L1044.5 138.5L1043.5 141.5L1042.5 141.4L1041.5 141.6L1040.5 144.8L1039.5 144.2ZM1430 127.2L1430 126.7L1430.5 126.7L1431 126.7L1431 127.2L1430.5 127.2ZM1433 126.9L1433 126.4L1433.5 126.4L1434 126.4L1434 126.9L1433.5 126.9ZM1436 126.9L1436 125.6L1436.5 125.6L1437 125.6L1437 126.9L1436.5 126.9ZM1439 128.2L1439 126.8L1439.5 126.8L1440 126.8L1440 128.2L1439.5 128.2ZM1442 127.9L1442 127.6L1442.5 127.6L1443 127.6L1443 127.9L1442.5 127.9ZM1445 127.3L1445 127L1445.5 127L1446 127L1446 127.3L1445.5 127.3ZM1448 128L1448 127.7L1448.5 127.7L1449 127.7L1449 128L1448.5 128ZM1451 127.5L1451 127.3L1451.5 127.3L1452 127.3L1452 127.5L1451.5 127.5ZM1454 127.5L1454 126.7L1454.5 126.7L1455 126.7L1455 127.5L1454.5 127.5ZM1457 126.7L1457 125.7L1457.5 125.7L1458 125.7L1458 126.7L1457.5 126.7ZM1463 127L1463 126.2L1463.5 126.2L1464 126.2L1464 127L1463.5 127ZM1466 126.5L1466 125.5L1466.5 125.5L1467 125.5L1467 126.5L1466.5 126.5ZM1469 126.7L1469 126.4L1469.5 126.4L1470 126.4L1470 126.7L1469.5 126.7ZM1472 126.4L1472 126.3L1472.5 126.3L1473 126.3L1473 126.4L1472.5 126.4ZM1475 126.7L1475 125.7L1475.5 125.7L1476 125.7L1476 126.7L1475.5 126.7ZM1478 127.9L1478 127.6L1478.5 127.6L1479 127.6L1479 127.9L1478.5 127.9ZM1481 127.7L1481 126L1481.5 126L1482 126L1482 127.7L1481.5 127.7ZM1484 127.2L1484 125.9L1484.5 125.9L1485 125.9L1485 127.2L1484.5 127.2ZM1487 127.4L1487 125.7L1487.5 125.7L1488 125.7L1488 127.4L1487.5 127.4ZM1490 126.6L1490 125.2L1490.5 125.2L1491 125.2L1491 126.6L1490.5 126.6ZM1493 126.3L1493 124.6L1493.5 124.6L1494 124.6L1494 126.3L1493.5 126.3ZM1496 126.5L1496 124.8L1496.5 124.8L1497 124.8L1497 126.5L1496.5 126.5ZM1499 127.6L1499 126L1499.5 126L1500 126L1500 127.6L1499.5 127.6ZM1502 127.3L1502 125.7L1502.5 125.7L1503 125.7L1503 127.3L1502.5 127.3ZM1505 127.6L1505 126.3L1505.5 126.3L1506 126.3L1506 127.6L1505.5 127.6ZM1508 126.3L1508 124.6L1508.5 124.6L1509 124.6L1509 126.3L1508.5 126.3ZM1511 126.3L1511 125.4L1511.5 125.4L1512 125.4L1512 126.3L1511.5 126.3ZM1514 127.9L1514 126.7L1514.5 126.7L1515 126.7L1515 127.9L1514.5 127.9ZM1517 128L1517 127.2L1517.5 127.2L1518 127.2L1518 128L1517.5 128ZM1520 127.9L1520 127.5L1520.5 127.5L1521 127.5L1521 127.9L1520.5 127.9ZM1523 127.7L1523 126L1523.5 126L1524 126L1524 127.7L1523.5 127.7ZM1526 126.3L1526 124.9L1526.5 124.9L1527 124.9L1527 126.3L1526.5 126.3ZM1529 126.7L1529 125.7L1529.5 125.7L1530 125.7L1530 126.7L1529.5 126.7ZM1532 126.6L1532 125.5L1532.5 125.5L1533 125.5L1533 126.6L1532.5 126.6ZM1535 127.3L1535 126.3L1535.5 126.3L1536 126.3L1536 127.3L1535.5 127.3ZM1538 126.7L1538 126.1L1538.5 126.1L1539 126.1L1539 126.7L1538.5 126.7ZM1541 126.1L1541 125.7L1541.5 125.7L1542 125.7L1542 126.1L1541.5 126.1ZM1544 126.7L1544 125.5L1544.5 125.5L1545 125.5L1545 126.7L1544.5 126.7ZM1547 127.4L1547 126.4L1547.5 126.4L1548 126.4L1548 127.4L1547.5 127.4ZM1550 126.4L1550 126.2L1550.5 126.2L1551 126.2L1551 126.4L1550.5 126.4ZM1553 127.9L1553 126.4L1553.5 126.4L1554 126.4L1554 127.9L1553.5 127.9ZM1556 126L1556 119.8L1556.5 119.8L1557.5 106.8L1558.5 102.2L1559.5 99.9L1560.5 94.6L1561.5 95.5L1562.5 96.6L1563.5 94.3L1564.5 94.3L1565.5 99.2L1566.5 100.1L1567.5 106.7L1568 106.7L1568 124.6L1567.5 124.6L1566.5 121.5L1565.5 126.3L1564.5 124.6L1563.5 122.2L1562.5 127.5L1561.5 124.2L1560.5 121.7L1559.5 127.7L1558.5 123.5L1557.5 122.4L1556.5 126Z" fill="#00ffff" stroke="#00ffff" stroke-width="0.35" stroke-linejoin="round"/><path d="M35 129L35 122L35.5 122L36.5 119.3L37.5 121.4L38.5 122.9L39.5 119.7L40.5 120L41.5 121.5L42.5 119.4L43.5 121L44.5 122.1L45.5 119L46.5 121.1L47.5 122.5L48.5 119.4L49.5 121.1L50.5 121.7L51.5 118.3L52.5 120.3L53.5 123L54.5 119L55.5 120.4L56.5 122.3L57.5 119.1L58.5 120.4L59.5 121.7L60.5 118.8L61.5 121.2L62.5 121.8L63.5 119.3L64.5 120.7L65.5 121.7L66.5 119.2L67.5 119.9L68.5 122.7L69.5 119L70.5 120.8L71.5 121.5L72.5 118.9L73.5 120L74.5 121.8L75.5 119.7L76.5 121.4L77.5 122.5L78.5 119.6L79.5 121.4L80.5 122.8L81.5 119.3L82.5 119.9L83.5 122.9L84.5 119.5L85.5 121.4L86.5 122.8L87.5 119L88.5 120.4L89.5 122.8L90.5 118.7L91.5 120.2L92.5 121.8L93.5 119.5L94.5 121.4L95.5 122.6L96.5 119.2L97.5 120L98.5 122.7L99.5 118.9L100.5 120.7L101.5 122.9L102.5 118.6L103.5 121.2L104.5 121.8L105.5 119.2L106.5 121.2L107.5 121.6L108.5 118.6L109.5 120.9L110.5 123L111.5 119.1L112.5 120.1L113.5 122.6L114.5 119L115.5 121.3L116.5 122.3L117.5 119.2L118.5 120.6L119.5 122.3L120.5 118.6L121.5 120.3L122.5 122.2L123.5 119.7L124.5 121L125.5 122.1L126.5 119.2L127.5 120.6L128.5 122.2L129.5 118.8L130.5 121L131.5 121.7L132.5 119.2L133.5 121.3L134.5 121.6L135.5 119L136.5 120.3L137.5 123.3L138.5 121.1L139.5 123.1L140.5 123.2L141.5 121.5L142.5 121.7L143.5 123.8L144.5 120.9L145.5 123L146.5 124.1L147.5 120.7L148.5 122.7L149.5 123.8L150.5 121.4L151.5 121.6L152.5 123.3L153.5 120.9L154.5 122.4L155.5 124.1L156.5 120.3L157.5 122.7L158.5 123.7L159.5 121.3L160.5 122.1L161.5 124.4L162.5 120.5L163.5 122.3L164.5 123.4L165.5 120.1L166.5 117.5L167.5 105.5L168.5 111.2L169.5 119.3L170.5 122.2L171.5 118.8L172.5 120.2L173.5 122.2L174.5 118.7L175.5 121L176.5 121.9L177.5 119.3L178.5 120.2L179.5 122.9L180.5 118.7L181.5 121.4L182.5 122L183.5 119.4L184.5 120.7L185.5 122.7L186.5 119.9L187.5 119.9L188.5 122.7L189.5 119L190.5 120L191.5 122.2L192.5 119.5L193.5 121.4L194.5 122.3L195.5 119.3L196.5 121.5L197.5 122.8L198.5 118.5L199.5 120.8L200.5 122.5L201.5 119.8L202.5 121L203.5 122.6L204.5 119.3L205.5 120.2L206.5 121.6L207.5 119.8L208.5 120.3L209.5 123L210.5 119.1L211.5 120.3L212.5 122L213.5 119.3L214.5 121.1L215.5 122.7L216.5 119.2L217.5 121.3L218.5 122.7L219.5 118.5L220.5 120.8L221.5 122.5L222.5 118.4L223.5 120.5L224.5 122.6L225.5 119.2L226.5 120.1L227.5 121.9L228.5 119L229.5 120L230.5 121.5L231.5 119.6L232.5 120L233.5 121.8L234.5 119.8L235.5 120L236.5 122.8L237.5 118.8L238.5 120.6L239.5 122.7L240.5 119.4L241.5 120.4L242.5 122.7L243.5 118.8L244.5 120.7L245.5 122.6L246.5 119.5L247.5 120.8L248.5 121.8L249.5 119.6L250.5 120.2L251.5 121.8L252.5 119.1L253.5 120.8L254.5 122.8L255.5 118.3L256.5 121.4L257.5 121.6L258.5 118.4L259.5 120L260.5 122L261.5 119.4L262.5 121L263.5 122.8L264.5 119.3L265.5 120.8L266.5 122.4L267.5 119.3L268.5 120.8L269.5 123L270.5 118.4L271.5 120L272.5 121.5L273.5 118.8L274.5 121.5L275.5 122L276.5 119.5L277.5 120L278.5 122.4L279.5 119.6L280.5 120.2L281.5 122.5L282.5 118.6L283.5 120.3L284.5 123L285.5 118.3L286.5 121L287.5 122.2L288.5 119.5L289.5 120.4L290.5 122L291.5 119.4L292.5 120.3L293.5 122.6L294.5 119L295.5 119.9L296.5 121.8L297.5 119.7L298.5 120.1L299.5 122.6L300.5 118.3L301.5 120.9L302.5 122.6L303.5 119.7L304.5 121.1L305.5 122.7L306.5 118.9L307.5 120.9L308.5 122.5L309.5 119L310.5 120.8L311.5 122.9L312.5 119.2L313.5 120L314.5 122.5L315.5 118.3L316.5 120.3L317.5 121.6L318.5 119.2L319.5 121.2L320.5 122L321.5 118.9L322.5 121.2L323.5 121.6L324.5 118.6L325.5 121.3L326.5 122.3L327.5 119.3L328.5 120.2L329.5 122.7L330.5 118.6L331.5 120.8L332.5 122.8L333.5 118.5L334.5 120.3L335.5 122.8L336.5 118.9L337.5 120.5L338.5 122.3L339.5 118.9L340.5 120.3L341.5 122.7L342.5 119.7L343.5 120.8L344.5 122L345.5 118.7L346.5 120.7L347.5 122.8L348.5 118.7L349.5 119.9L350.5 121.6L351.5 118.4L352.5 120.3L353.5 122.6L354.5 119.1L355.5 121L356.5 123L357.5 118.4L358.5 121.2L359.5 122.2L360.5 118.5L361.5 120.1L362.5 122L363.5 119.5L364.5 120.9L365.5 122.8L366.5 118.6L367.5 119.9L368.5 122.5L369.5 119.6L370.5 120.6L371.5 122.7L372.5 119.9L373.5 120.9L374.5 122.1L375.5 119.1L376.5 121.1L377.5 122L378.5 119.2L379.5 120.4L380.5 122L381.5 118.7L382.5 121.4L383.5 122.7L384.5 119.9L385.5 121.2L386.5 122.2L387.5 119.6L388.5 121.4L389.5 121.9L390.5 118.7L391.5 120.7L392.5 122.7L393.5 118.7L394.5 120.3L395.5 122.3L396.5 119.5L397.5 121.1L398.5 122.6L399.5 118.4L400.5 120.1L401.5 121.6L402.5 118.8L403.5 120.1L404.5 122.3L405.5 119.4L406.5 121.3L407.5 123L408.5 119.3L409.5 121.4L410.5 121.9L411.5 119L412.5 120.2L413.5 121.7L414.5 119.7L415.5 121.4L416.5 122L417.5 119.4L418.5 120.3L419.5 122.4L420.5 119.4L421.5 121L422.5 121.7L423.5 119.2L424.5 120.9L425.5 122.7L426.5 118.6L427.5 121.1L428.5 123L429.5 118.6L430.5 120.9L431.5 121.5L432.5 118.8L433.5 120.5L434.5 121.9L435.5 119.3L436.5 120.1L437.5 123L438.5 118.5L439.5 120.1L440.5 122.2L441.5 118.9L442.5 121.2L443.5 121.9L444.5 118.7L445.5 120.7L446.5 122.7L447.5 118.6L448.5 121.1L449.5 122.8L450.5 118.3L451.5 119.9L452.5 121.5L453.5 119.2L454.5 121.3L455.5 123L456.5 118.8L457.5 120.7L458.5 122.4L459.5 119.2L460.5 120.8L461.5 121.6L462.5 118.5L463.5 120.7L464.5 122.9L465.5 118.8L466.5 120.8L467.5 122.4L468.5 119.6L469.5 120.8L470.5 123L471.5 118.6L472.5 121.3L473.5 121.9L474.5 118.6L475.5 120L476.5 122.4L477.5 118.3L478.5 121L479.5 122.4L480.5 119.3L481.5 120.3L482.5 122.7L483.5 119.5L484.5 120.2L485.5 122.1L486.5 119.3L487.5 120.2L488.5 122.2L489.5 119.3L490.5 120.9L491.5 122.7L492.5 119.4L493.5 120.7L494.5 122L495.5 118.5L496.5 120L497.5 121.7L498.5 119.9L499.5 121.1L500.5 122.7L501.5 119.6L502.5 121.2L503.5 121.8L504.5 118.6L505.5 120.4L506.5 122.3L507.5 119.5L508.5 120.7L509.5 122.8L510.5 119L511.5 120.1L512.5 122L513.5 119.2L514.5 120.5L515.5 122.1L516.5 119.4L517.5 120.7L518.5 121.9L519.5 118.5L520.5 120.6L521.5 122.3L522.5 118.6L523.5 120.8L524.5 122.2L525.5 118.6L526.5 121L527.5 121.8L528.5 118.5L529.5 121L530.5 121.6L531.5 118.6L532.5 120.5L533.5 122.1L534.5 118.8L535.5 121.3L536.5 121.8L537.5 119.3L538.5 120.6L539.5 122.4L540.5 118.9L541.5 120.6L542.5 121.8L543.5 119.2L544.5 120.5L545.5 122.3L546.5 118.9L547.5 121.4L548.5 122.8L549.5 118.5L550.5 120.3L551.5 122.7L552.5 118.8L553.5 121.3L554.5 122.3L555.5 118.4L556.5 121.4L557.5 122.9L558.5 119.6L559.5 121.4L560.5 122.3L561.5 118.6L562.5 120.5L563.5 121.8L564.5 119L565.5 119.9L566.5 122.5L567.5 118.6L568.5 120.8L569.5 122L570.5 118.6L571.5 121L572.5 121.7L573.5 118.6L574.5 120.6L575.5 121.8L576.5 119.3L577.5 120.2L578.5 121.6L579.5 118.8L580.5 121.1L581.5 122.3L582.5 118.7L583.5 120L584.5 122.3L585.5 119.6L586.5 120.9L587.5 122.2L588.5 118.3L589.5 120.5L590.5 122.1L591.5 119.8L592.5 120.1L593.5 122.6L594.5 118.4L595.5 119.9L596.5 122.7L597.5 119.8L598.5 120.7L599.5 122.9L600.5 119.7L601.5 120.6L602.5 122L603.5 119.6L604.5 121.1L605.5 122.5L606.5 118.6L607.5 120.3L608.5 122.9L609.5 118.4L610.5 120.5L611.5 122.5L612.5 119.1L613.5 121.2L614.5 121.9L615.5 118.4L616.5 120.1L617.5 122.3L618.5 118.6L619.5 120.9L620.5 122L621.5 119.8L622.5 121.2L623.5 122.4L624.5 118.6L625.5 120.7L626.5 122.9L627.5 118.5L628.5 120.7L629.5 122.7L630.5 118.3L631.5 121L632.5 121.9L633.5 119.9L634.5 121.2L635.5 122.2L636.5 118.4L637.5 121.2L638.5 121.9L639.5 119.7L640.5 121L641.5 121.9L642.5 119.6L643.5 120.8L644.5 121.8L645.5 118.5L646.5 120L647.5 122.6L648.5 119.3L649.5 120.5L650.5 122.3L651.5 118.8L652.5 121L653.5 121.8L654.5 118.4L655.5 120.6L656.5 121.5L657.5 119.7L658.5 121.4L659.5 122.7L660.5 119L661.5 121.3L662.5 123L663.5 119.1L664.5 120.8L665.5 121.7L666.5 118.7L667.5 120L668.5 121.7L669.5 118.4L670.5 121.1L671.5 121.5L672.5 118.6L673.5 120.6L674.5 122.6L675.5 119.3L676.5 120.8L677.5 122.8L678.5 118.4L679.5 120.1L680.5 122L681.5 119.5L682.5 120.5L683.5 122.3L684.5 119.4L685.5 120.5L686.5 122.6L687.5 119.6L688.5 121L689.5 122.6L690.5 118.6L691.5 120.4L692.5 122.3L693.5 119.1L694.5 121.1L695.5 122.1L696.5 118.5L697.5 120.7L698.5 122.6L699.5 119.8L700.5 121.4L701.5 121.9L702.5 118.4L703.5 120.9L704.5 122.1L705.5 119.1L706.5 120.3L707.5 121.9L708.5 118.5L709.5 120.5L710.5 122.1L711.5 118.5L712.5 120.7L713.5 122.6L714.5 119.3L715.5 120.1L716.5 122.7L717.5 119L718.5 120L719.5 121.7L720.5 119.2L721.5 121.4L722.5 121.6L723.5 118.3L724.5 120.4L725.5 122.1L726.5 118.8L727.5 120.9L728.5 122.1L729.5 119.1L730.5 119.9L731.5 121.7L732.5 118.3L733.5 121.3L734.5 121.7L735.5 119.2L736.5 120.7L737.5 122.7L738.5 119.3L739.5 121.4L740.5 122.5L741.5 119.4L742.5 120.4L743.5 122.2L744.5 119L745.5 120.8L746.5 121.8L747.5 119.6L748.5 120.5L749.5 123L750.5 118.8L751.5 121L752.5 122.1L753.5 119.3L754.5 120.5L755.5 122.1L756.5 118.4L757.5 120L758.5 122.1L759.5 118.4L760.5 120.3L761.5 121.7L762.5 119.5L763.5 121.2L764.5 122.1L765.5 119.3L766.5 121.3L767.5 122.6L768.5 119.5L769.5 120.9L770.5 122.9L771.5 119.7L772.5 120.2L773.5 121.9L774.5 119.6L775.5 121.1L776.5 121.9L777.5 119L778.5 120.5L779.5 122.8L780.5 119.5L781.5 120.4L782.5 122.4L783.5 118.5L784.5 121.3L785.5 122.2L786.5 119.4L787.5 120.3L788.5 121.6L789.5 118.5L790.5 121.4L791.5 122.5L792.5 118.8L793.5 120.9L794.5 122.9L795.5 118.8L796.5 121.2L797.5 122.4L798.5 118.9L799.5 120.6L800.5 122.3L801.5 119.9L802.5 121L803.5 122.1L804.5 119.7L805.5 120L806.5 121.9L807.5 118.6L808.5 120L809.5 121.9L810.5 118.9L811.5 120.4L812.5 121.6L813.5 119.8L814.5 121L815.5 122L816.5 119.8L817.5 121.1L818.5 121.9L819.5 119.5L820.5 120L821.5 121.6L822.5 119.4L823.5 120.3L824.5 122.1L825.5 118.6L826.5 120.9L827.5 122.6L828.5 119.2L829.5 120.7L830.5 122.9L831.5 118.7L832.5 119.9L833.5 122.3L834.5 119L835.5 120.4L836.5 122L837.5 119.7L838.5 120.1L839.5 122L840.5 119.6L841.5 120.3L842.5 121.7L843.5 119L844.5 121.1L845.5 122L846.5 118.5L847.5 120.7L848.5 122.1L849.5 119.6L850.5 121.3L851.5 122.7L852.5 118.6L853.5 120.8L854.5 122.2L855.5 119.2L856.5 120L857.5 122.3L858.5 119.6L859.5 120.7L860.5 121.7L861.5 118.9L862.5 120.4L863.5 122.1L864.5 118.9L865.5 120.1L866.5 122L867.5 118.8L868.5 120.8L869.5 122.4L870.5 118.5L871.5 120.1L872.5 122.2L873.5 119L874.5 121.3L875.5 122.9L876.5 119.2L877.5 120.3L878.5 121.5L879.5 118.6L880.5 119.9L881.5 122.8L882.5 119.5L883.5 120.5L884.5 121.9L885.5 118.9L886.5 120L887.5 121.9L888.5 118.8L889.5 120.9L890.5 121.9L891.5 119.7L892.5 121.3L893.5 122.6L894.5 118.6L895.5 121.4L896.5 122.7L897.5 118.8L898.5 120.1L899.5 121.8L900.5 119.3L901.5 120.1L902.5 122.7L903.5 119.3L904.5 120.1L905.5 122.1L906.5 119.5L907.5 121.4L908.5 122.3L909.5 119.3L910.5 120.9L911.5 121.5L912.5 118.8L913.5 120.7L914.5 122.2L915.5 119.8L916.5 120.1L917.5 122L918.5 118.6L919.5 120.4L920.5 121.9L921.5 119.3L922.5 121.4L923.5 121.5L924.5 119.5L925.5 121.2L926.5 122.3L927.5 119.4L928.5 121L929.5 122.2L930.5 118.4L931.5 121.2L932.5 122.5L933.5 118.5L934.5 120L935.5 123L936.5 118.8L937.5 121.1L938.5 122L939.5 118.4L940.5 120.2L941.5 122.8L942.5 118.5L943.5 121.1L944.5 122L945.5 119.3L946.5 121.4L947.5 122.3L948.5 119.2L949.5 120.6L950.5 122.1L951.5 119.7L952.5 120.2L953.5 122.4L954.5 119L955.5 120.9L956.5 121.9L957.5 119.4L958.5 120.7L959.5 121.6L960.5 119.1L961.5 120.9L962.5 121.8L963.5 119.7L964.5 120.6L965.5 122.5L966.5 118.7L967.5 121.4L968.5 121.5L969.5 119.3L970.5 120.9L971.5 121.9L972.5 119.2L973.5 120.6L974.5 121.5L975.5 119.5L976.5 121.1L977.5 122L978.5 119.5L979.5 120.1L980.5 121.8L981.5 119.4L982.5 121.2L983.5 122.3L984.5 119.6L985.5 120.2L986.5 121.7L987.5 119.8L988.5 121.4L989.5 121.9L990.5 118.8L991.5 120L992.5 121.5L993.5 118.6L994.5 120.7L995.5 122.9L996.5 119.4L997.5 120.7L998.5 122.8L999.5 118.7L1000.5 120.9L1001.5 122.5L1002.5 118.5L1003.5 121.2L1004.5 123L1005.5 119L1006.5 120.4L1007.5 121.8L1008.5 117.7L1009.5 119.8L1010.5 120.9L1011.5 117.7L1012.5 118.2L1013.5 119.4L1014.5 115.9L1015.5 115.5L1016.5 116.8L1017.5 112.4L1018.5 113.9L1019.5 114.8L1020.5 111.4L1021.5 112.6L1022.5 113.1L1023.5 104.7L1024.5 90.9L1025.5 67.3L1026.5 59.4L1027.5 83L1028.5 112.6L1029.5 133.1L1030.5 133.8L1031.5 134.8L1032.5 133.3L1033.5 134.1L1034.5 136.2L1035.5 136.2L1036.5 138.3L1037.5 140.1L1038.5 140L1039.5 139L1040.5 138.1L1041.5 135.3L1042.5 134.1L1043.5 133L1044.5 129.8L1045.5 128.8L1046.5 127.2L1047.5 124.2L1048.5 122.2L1049.5 121L1050.5 117.5L1051.5 115.5L1052.5 113.9L1053.5 110.1L1054.5 108.2L1055.5 105.5L1056.5 100.4L1057.5 98.7L1058.5 100.1L1059.5 95.7L1060.5 98.3L1061.5 98.4L1062.5 95.5L1063.5 96.7L1064.5 97.5L1065.5 94.9L1066.5 96.8L1067.5 97.6L1068.5 94.9L1069.5 96.2L1070.5 97.8L1071.5 94.3L1072.5 96.6L1073.5 97.1L1074.5 94.2L1075.5 96.5L1076.5 98.4L1077.5 94.8L1078.5 95.9L1079.5 97L1080.5 94.6L1081.5 96.4L1082.5 97.1L1083.5 93.8L1084.5 95.1L1085.5 97L1086.5 94.2L1087.5 96.4L1088.5 96.7L1089.5 93.9L1090.5 95.3L1091.5 97.5L1092.5 94.3L1093.5 95.4L1094.5 97.8L1095.5 94.4L1096.5 95.1L1097.5 97.2L1098.5 94.3L1099.5 95.3L1100.5 97.3L1101.5 94.1L1102.5 95.6L1103.5 97.5L1104.5 93.4L1105.5 95.6L1106.5 96.6L1107.5 93.3L1108.5 94.7L1109.5 95.8L1110.5 92.9L1111.5 94.3L1112.5 96.6L1113.5 93L1114.5 95.3L1115.5 95.6L1116.5 92.8L1117.5 95.2L1118.5 97L1119.5 92.4L1120.5 94.2L1121.5 95.7L1122.5 92.6L1123.5 93.9L1124.5 95.4L1125.5 93.4L1126.5 94.5L1127.5 96.3L1128.5 92.2L1129.5 94.2L1130.5 95.5L1131.5 93.6L1132.5 94.2L1133.5 96.2L1134.5 93.4L1135.5 94L1136.5 96.6L1137.5 92L1138.5 94.1L1139.5 95.1L1140.5 92.1L1141.5 94.7L1142.5 96.1L1143.5 91.9L1144.5 93.4L1145.5 95.7L1146.5 92.2L1147.5 93.3L1148.5 96.2L1149.5 92.4L1150.5 93.5L1151.5 94.8L1152.5 92.2L1153.5 93.7L1154.5 95.4L1155.5 91.8L1156.5 93.5L1157.5 95.3L1158.5 92.8L1159.5 93.5L1160.5 95.7L1161.5 92.7L1162.5 94.1L1163.5 95.5L1164.5 92.7L1165.5 93.6L1166.5 94.9L1167.5 91.8L1168.5 93.7L1169.5 94.9L1170.5 92.4L1171.5 94.4L1172.5 95.4L1173.5 91.9L1174.5 93.3L1175.5 95.5L1176.5 92.6L1177.5 93.4L1178.5 95.9L1179.5 91.8L1180.5 94L1181.5 95.7L1182.5 91.4L1183.5 93.4L1184.5 94.8L1185.5 91.8L1186.5 94L1187.5 94.7L1188.5 91.4L1189.5 94.1L1190.5 95L1191.5 92.6L1192.5 93.8L1193.5 95.5L1194.5 92.7L1195.5 93.6L1196.5 94.9L1197.5 92.3L1198.5 92.7L1199.5 95.1L1200.5 91.5L1201.5 93.6L1202.5 95L1203.5 92.3L1204.5 92.7L1205.5 94.6L1206.5 92.6L1207.5 93.8L1208.5 94.2L1209.5 92L1210.5 94L1211.5 95L1212.5 91.8L1213.5 93.2L1214.5 95.6L1215.5 91L1216.5 92.8L1217.5 95.3L1218.5 91.2L1219.5 92.7L1220.5 94.6L1221.5 92.1L1222.5 93.9L1223.5 94.9L1224.5 91.7L1225.5 93.3L1226.5 95.2L1227.5 92.2L1228.5 93.6L1229.5 94.3L1230.5 92.3L1231.5 93.9L1232.5 95.2L1233.5 90.9L1234.5 92.7L1235.5 95.2L1236.5 92.2L1237.5 93.9L1238.5 94.7L1239.5 92.2L1240.5 93.2L1241.5 94.1L1242.5 91.2L1243.5 92.3L1244.5 94.2L1245.5 91.7L1246.5 92.8L1247.5 95.3L1248.5 91.4L1249.5 92.8L1250.5 93.9L1251.5 91.1L1252.5 93.5L1253.5 94.9L1254.5 92L1255.5 92.3L1256.5 94.1L1257.5 92.1L1258.5 93.2L1259.5 94L1260.5 91.6L1261.5 92.1L1262.5 94.4L1263.5 91L1264.5 93.2L1265.5 94.1L1266.5 91L1267.5 93.2L1268.5 94.9L1269.5 91.1L1270.5 93.1L1271.5 94.6L1272.5 90.5L1273.5 93.3L1274.5 94.1L1275.5 90.6L1276.5 92.3L1277.5 94.1L1278.5 90.6L1279.5 92.5L1280.5 93.6L1281.5 91.6L1282.5 93.4L1283.5 94.9L1284.5 91.2L1285.5 93.1L1286.5 94.8L1287.5 91L1288.5 92.5L1289.5 94.4L1290.5 91.8L1291.5 93.2L1292.5 94.5L1293.5 91.8L1294.5 92.1L1295.5 93.6L1296.5 90.6L1297.5 92L1298.5 94.4L1299.5 91.3L1300.5 93.2L1301.5 95L1302.5 91.5L1303.5 93.2L1304.5 93.7L1305.5 91.5L1306.5 93.1L1307.5 94.7L1308.5 91.2L1309.5 93.1L1310.5 94.2L1311.5 90.5L1312.5 93.1L1313.5 94.5L1314.5 91.6L1315.5 93L1316.5 94.8L1317.5 91.6L1318.5 92L1319.5 94.1L1320.5 90.8L1321.5 91.9L1322.5 94.8L1323.5 90.3L1324.5 92L1325.5 94.8L1326.5 90.5L1327.5 93.2L1328.5 93.8L1329.5 88.1L1330.5 85.3L1331.5 87.1L1332.5 87.2L1333.5 93L1334.5 94.3L1335.5 90.6L1336.5 93.1L1337.5 94.8L1338.5 91.6L1339.5 92.7L1340.5 94.1L1341.5 91.1L1342.5 92.3L1343.5 94.6L1344.5 90.4L1345.5 92.3L1346.5 93.7L1347.5 91.4L1348.5 92.8L1349.5 94.7L1350.5 91.1L1351.5 92.5L1352.5 94.6L1353.5 91.2L1354.5 92.5L1355.5 94.7L1356.5 90.5L1357.5 93.1L1358.5 93.5L1359.5 90.6L1360.5 92.3L1361.5 94.4L1362.5 91.6L1363.5 92.2L1364.5 94.4L1365.5 91.4L1366.5 92L1367.5 94.3L1368.5 91.5L1369.5 91.7L1370.5 94.5L1371.5 90.4L1372.5 93L1373.5 93.7L1374.5 90.4L1375.5 91.7L1376.5 94L1377.5 90L1378.5 92.1L1379.5 93.5L1380.5 91.4L1381.5 91.9L1382.5 94.4L1383.5 91.2L1384.5 92.9L1385.5 94.3L1386.5 90.8L1387.5 92.3L1388.5 94.3L1389.5 91L1390.5 91.5L1391.5 94.4L1392.5 90.8L1393.5 93L1394.5 93.1L1395.5 91L1396.5 92.4L1397.5 94L1398.5 91.1L1399.5 91.9L1400.5 93.6L1401.5 90.6L1402.5 91.7L1403.5 93.1L1404.5 91.3L1405.5 92.5L1406.5 94.2L1407.5 90.9L1408.5 92.9L1409.5 93.8L1410.5 90.9L1411.5 91.5L1412.5 93.6L1413.5 90.6L1414.5 91.9L1415.5 93L1416.5 91.3L1417.5 92.3L1418.5 93.3L1419.5 90.1L1420.5 92.2L1421.5 94.2L1422.5 91L1423.5 92.7L1424.5 93.2L1425.5 90.1L1426.5 92.6L1427.5 101.7L1428.5 107.4L1429.5 116.8L1430.5 119.1L1431.5 115.6L1432.5 117.4L1433.5 119.1L1434.5 115.4L1435.5 117L1436.5 118.4L1437.5 114.9L1438.5 117.2L1439.5 118.4L1440.5 115.3L1441.5 116.7L1442.5 118.8L1443.5 116L1444.5 117.6L1445.5 118.7L1446.5 115.5L1447.5 117.6L1448.5 119.3L1449.5 115.6L1450.5 117.3L1451.5 118.1L1452.5 114.9L1453.5 116.9L1454.5 118.9L1455.5 115.1L1456.5 117.3L1457.5 118.3L1458.5 115.4L1459.5 117.6L1460.5 118.9L1461.5 115.7L1462.5 117L1463.5 118.9L1464.5 115L1465.5 117.2L1466.5 119L1467.5 116L1468.5 117.5L1469.5 119L1470.5 115.1L1471.5 116.3L1472.5 117.9L1473.5 115L1474.5 117.6L1475.5 117.8L1476.5 116L1477.5 116.8L1478.5 118.4L1479.5 115.6L1480.5 117.2L1481.5 117.8L1482.5 115.9L1483.5 116.6L1484.5 119.3L1485.5 115.3L1486.5 116.8L1487.5 118L1488.5 115.9L1489.5 116.7L1490.5 118.5L1491.5 115.5L1492.5 116.6L1493.5 117.8L1494.5 115.6L1495.5 116.5L1496.5 118.2L1497.5 115.7L1498.5 116.4L1499.5 119.2L1500.5 115.9L1501.5 116.3L1502.5 119.1L1503.5 115.7L1504.5 117L1505.5 118.3L1506.5 115L1507.5 117.3L1508.5 117.7L1509.5 114.8L1510.5 116.3L1511.5 119.1L1512.5 115L1513.5 116.8L1514.5 118.7L1515.5 116L1516.5 116.3L1517.5 118.5L1518.5 115.5L1519.5 117.4L1520.5 118.4L1521.5 114.6L1522.5 117.3L1523.5 118.3L1524.5 115.1L1525.5 116.9L1526.5 118.1L1527.5 115.3L1528.5 116.2L1529.5 118.6L1530.5 115.3L1531.5 117L1532.5 118.9L1533.5 114.5L1534.5 116.7L1535.5 118.7L1536.5 115.8L1537.5 116.7L1538.5 117.7L1539.5 114.7L1540.5 116.6L1541.5 117.6L1542.5 115.1L1543.5 117.4L1544.5 117.7L1545.5 114.9L1546.5 116.9L1547.5 119.1L1548.5 115.1L1549.5 117.3L1550.5 117.7L1551.5 115.2L1552.5 116.9L1553.5 117.6L1554.5 115.6L1555.5 116.5L1556.5 114.4L1557.5 102.6L1558.5 99.8L1559.5 96.2L1560.5 91.4L1561.5 92.8L1562.5 94.1L1563.5 90.6L1564.5 92.6L1565.5 95.8L1566.5 97.1L1567.5 103.3L1568.5 135.3L1569 135.3L1569 137.6L1568.5 137.6L1567.5 106.7L1566.5 100.1L1565.5 99.2L1564.5 94.3L1563.5 94.3L1562.5 96.6L1561.5 95.5L1560.5 94.6L1559.5 99.9L1558.5 102.2L1557.5 106.8L1556.5 119.8L1555.5 124.5L1554.5 121.2L1553.5 126.4L1552.5 123.3L1551.5 121L1550.5 126.2L1549.5 125.2L1548.5 120.9L1547.5 126.4L1546.5 125.2L1545.5 121.4L1544.5 125.5L1543.5 124.3L1542.5 122.7L1541.5 125.7L1540.5 124.6L1539.5 121.7L1538.5 126.1L1537.5 124.1L1536.5 122.3L1535.5 126.3L1534.5 125L1533.5 122L1532.5 125.5L1531.5 124.8L1530.5 122.5L1529.5 125.7L1528.5 123.4L1527.5 122.3L1526.5 124.9L1525.5 123.6L1524.5 121.2L1523.5 126L1522.5 123.8L1521.5 122.5L1520.5 127.5L1519.5 125L1518.5 121.3L1517.5 127.2L1516.5 125.2L1515.5 121.2L1514.5 126.7L1513.5 123.4L1512.5 122.5L1511.5 125.4L1510.5 124.5L1509.5 121.7L1508.5 124.6L1507.5 124.1L1506.5 121.8L1505.5 126.3L1504.5 123.7L1503.5 122.6L1502.5 125.7L1501.5 124.3L1500.5 121.3L1499.5 126L1498.5 125.1L1497.5 121.4L1496.5 124.8L1495.5 123.6L1494.5 122.2L1493.5 124.6L1492.5 124.3L1491.5 121.3L1490.5 125.2L1489.5 124.7L1488.5 121.8L1487.5 125.7L1486.5 123.7L1485.5 121.3L1484.5 125.9L1483.5 124.8L1482.5 122.5L1481.5 126L1480.5 124.6L1479.5 121L1478.5 127.6L1477.5 124.1L1476.5 122.8L1475.5 125.7L1474.5 124.7L1473.5 122.5L1472.5 126.3L1471.5 123.7L1470.5 122.4L1469.5 126.4L1468.5 125.4L1467.5 121.3L1466.5 125.5L1465.5 124.8L1464.5 121.7L1463.5 126.2L1462.5 124.8L1461.5 122L1460.5 126.6L1459.5 125.2L1458.5 121.1L1457.5 125.7L1456.5 125.2L1455.5 121.7L1454.5 126.7L1453.5 124.8L1452.5 123L1451.5 127.3L1450.5 124.7L1449.5 121.1L1448.5 127.7L1447.5 124.6L1446.5 121.1L1445.5 127L1444.5 125.4L1443.5 122.4L1442.5 127.6L1441.5 124.9L1440.5 122.1L1439.5 126.8L1438.5 123.7L1437.5 121.4L1436.5 125.6L1435.5 125.2L1434.5 122.7L1433.5 126.4L1432.5 125.6L1431.5 122L1430.5 126.7L1429.5 124.7L1428.5 114.3L1427.5 109.6L1426.5 98.7L1425.5 98.3L1424.5 101.7L1423.5 99.2L1422.5 98.1L1421.5 101.1L1420.5 98.7L1419.5 98.1L1418.5 101.3L1417.5 99.1L1416.5 97.8L1415.5 102.1L1414.5 98.9L1413.5 98L1412.5 101.3L1411.5 99.6L1410.5 97.8L1409.5 102.4L1408.5 100L1407.5 99.2L1406.5 101.3L1405.5 99.6L1404.5 98.3L1403.5 102.5L1402.5 99.8L1401.5 99.2L1400.5 102.3L1399.5 98.8L1398.5 98.2L1397.5 101.3L1396.5 99.8L1395.5 98.1L1394.5 101.4L1393.5 99.5L1392.5 99.1L1391.5 102.3L1390.5 99.7L1389.5 98.2L1388.5 102.6L1387.5 100L1386.5 98.1L1385.5 102.7L1384.5 100L1383.5 99.2L1382.5 102.8L1381.5 100.1L1380.5 98.9L1379.5 101.7L1378.5 99.8L1377.5 99.5L1376.5 102.7L1375.5 99.8L1374.5 98.8L1373.5 102.5L1372.5 100.4L1371.5 99L1370.5 102.6L1369.5 100.4L1368.5 98.7L1367.5 102.5L1366.5 99.3L1365.5 99.2L1364.5 101.6L1363.5 100.2L1362.5 98.5L1361.5 102.6L1360.5 100.4L1359.5 99.5L1358.5 101.9L1357.5 99.4L1356.5 99.1L1355.5 102.2L1354.5 100.2L1353.5 98.6L1352.5 102.9L1351.5 100.1L1350.5 99.5L1349.5 103.1L1348.5 100.4L1347.5 99.8L1346.5 102.3L1345.5 99.4L1344.5 99.4L1343.5 101.6L1342.5 99.5L1341.5 99.5L1340.5 102.9L1339.5 99.9L1338.5 99.2L1337.5 102.8L1336.5 99.6L1335.5 99.5L1334.5 102.9L1333.5 99.6L1332.5 97.2L1331.5 98.5L1330.5 96.5L1329.5 98.1L1328.5 103L1327.5 100.6L1326.5 99L1325.5 102.5L1324.5 100.1L1323.5 99.5L1322.5 101.8L1321.5 100.5L1320.5 98.6L1319.5 103L1318.5 100L1317.5 98.5L1316.5 102.2L1315.5 100L1314.5 99.4L1313.5 102.7L1312.5 100.3L1311.5 99.7L1310.5 101.9L1309.5 99.5L1308.5 98.6L1307.5 103.2L1306.5 100.9L1305.5 99.8L1304.5 102.2L1303.5 100L1302.5 99.2L1301.5 102.6L1300.5 100.3L1299.5 99.1L1298.5 103.3L1297.5 100.7L1296.5 99.9L1295.5 103.3L1294.5 100.2L1293.5 99.3L1292.5 103.4L1291.5 100.9L1290.5 99L1289.5 103.5L1288.5 101.1L1287.5 99.6L1286.5 103.2L1285.5 99.9L1284.5 99.6L1283.5 102.4L1282.5 99.9L1281.5 99.3L1280.5 103.4L1279.5 100.3L1278.5 100L1277.5 102.3L1276.5 101.2L1275.5 100.1L1274.5 103L1273.5 100.1L1272.5 99.5L1271.5 103.6L1270.5 100.2L1269.5 99.3L1268.5 102.6L1267.5 100.1L1266.5 99.6L1265.5 103.3L1264.5 101L1263.5 98.9L1262.5 102.7L1261.5 100.5L1260.5 99.1L1259.5 102.3L1258.5 99.9L1257.5 99.8L1256.5 102.2L1255.5 100.4L1254.5 99.9L1253.5 102.7L1252.5 100.1L1251.5 100.4L1250.5 102.6L1249.5 100.5L1248.5 99.6L1247.5 103.9L1246.5 101.3L1245.5 100.4L1244.5 103.8L1243.5 101.4L1242.5 100.4L1241.5 103.9L1240.5 101.1L1239.5 99.4L1238.5 102.7L1237.5 100.2L1236.5 99.9L1235.5 102.9L1234.5 101.6L1233.5 99.7L1232.5 102.6L1231.5 100.4L1230.5 99.6L1229.5 103.5L1228.5 101.6L1227.5 100L1226.5 103L1225.5 101.7L1224.5 99.7L1223.5 103.8L1222.5 101.2L1221.5 99.8L1220.5 103.7L1219.5 101.8L1218.5 100.9L1217.5 104.2L1216.5 101.3L1215.5 99.4L1214.5 103.9L1213.5 101.7L1212.5 99.7L1211.5 103.1L1210.5 101.2L1209.5 100.7L1208.5 103.3L1207.5 101L1206.5 100.7L1205.5 102.9L1204.5 100.9L1203.5 99.9L1202.5 103.2L1201.5 101.8L1200.5 100L1199.5 104.3L1198.5 100.8L1197.5 100.2L1196.5 103.3L1195.5 101.3L1194.5 100.3L1193.5 103.3L1192.5 101.6L1191.5 99.9L1190.5 103.8L1189.5 101.2L1188.5 101.1L1187.5 103L1186.5 101.9L1185.5 101.2L1184.5 103.5L1183.5 101L1182.5 100.5L1181.5 103.3L1180.5 101.4L1179.5 100L1178.5 104.2L1177.5 101.5L1176.5 100.8L1175.5 103.6L1174.5 101.3L1173.5 100.9L1172.5 103.7L1171.5 102L1170.5 100.5L1169.5 104.4L1168.5 101L1167.5 100.4L1166.5 104.6L1165.5 101.2L1164.5 101.1L1163.5 104.5L1162.5 102.2L1161.5 100L1160.5 104.8L1159.5 102.3L1158.5 101L1157.5 104.7L1156.5 101.1L1155.5 100.6L1154.5 104.5L1153.5 101.4L1152.5 100.7L1151.5 104.8L1150.5 101.5L1149.5 100.8L1148.5 103.5L1147.5 101.7L1146.5 100.7L1145.5 104.2L1144.5 101.4L1143.5 101L1142.5 104L1141.5 102.9L1140.5 101.7L1139.5 104.5L1138.5 101.6L1137.5 101.6L1136.5 104.3L1135.5 102.4L1134.5 101.7L1133.5 105.2L1132.5 102.5L1131.5 101.4L1130.5 104.7L1129.5 103.1L1128.5 101.2L1127.5 104.6L1126.5 103L1125.5 101.1L1124.5 105.6L1123.5 103L1122.5 101.8L1121.5 104.7L1120.5 103.3L1119.5 102.3L1118.5 104.7L1117.5 102.6L1116.5 101.9L1115.5 104.5L1114.5 103.5L1113.5 101.6L1112.5 105.5L1111.5 103L1110.5 101.7L1109.5 105.2L1108.5 102.6L1107.5 102.8L1106.5 105.7L1105.5 102.8L1104.5 101.7L1103.5 105L1102.5 103.8L1101.5 102.5L1100.5 105.7L1099.5 103.9L1098.5 102.4L1097.5 105L1096.5 103.6L1095.5 102.2L1094.5 105.9L1093.5 104.1L1092.5 102.1L1091.5 106L1090.5 102.9L1089.5 103.4L1088.5 105.4L1087.5 103.6L1086.5 103.3L1085.5 106.3L1084.5 103L1083.5 103.4L1082.5 106.2L1081.5 103.6L1080.5 102.1L1079.5 106.5L1078.5 104.2L1077.5 102.4L1076.5 106.9L1075.5 103.8L1074.5 103.7L1073.5 107L1072.5 103.8L1071.5 103L1070.5 107.2L1069.5 104.3L1068.5 102.5L1067.5 106.3L1066.5 104.5L1065.5 103.6L1064.5 107.2L1063.5 104.6L1062.5 104.5L1061.5 107L1060.5 105.5L1059.5 105L1058.5 107.4L1057.5 106.6L1056.5 108.7L1055.5 113L1054.5 114.9L1053.5 116.6L1052.5 120.2L1051.5 122L1050.5 123.3L1049.5 126.4L1048.5 127.5L1047.5 128.7L1046.5 132.1L1045.5 132.7L1044.5 134.4L1043.5 136.9L1042.5 137.5L1041.5 138.7L1040.5 141.3L1039.5 142L1038.5 144.5L1037.5 145.1L1036.5 142.9L1035.5 140.8L1034.5 140.5L1033.5 139.1L1032.5 137.5L1031.5 139L1030.5 138.8L1029.5 137.6L1028.5 114.2L1027.5 84.6L1026.5 61L1025.5 68.9L1024.5 92.5L1023.5 106.3L1022.5 118.3L1021.5 116L1020.5 115.7L1019.5 120.5L1018.5 117.9L1017.5 119.2L1016.5 123.6L1015.5 121.6L1014.5 120.6L1013.5 125.1L1012.5 124.3L1011.5 121.3L1010.5 125.9L1009.5 124.6L1008.5 121.3L1007.5 127.9L1006.5 126.6L1005.5 123.2L1004.5 129.2L1003.5 126L1002.5 122.1L1001.5 127.5L1000.5 126.4L999.5 123.7L998.5 128.5L997.5 126.3L996.5 122.1L995.5 128.5L994.5 126.5L993.5 123.6L992.5 127.6L991.5 125.9L990.5 123.7L989.5 129L988.5 124.7L987.5 123.4L986.5 129L985.5 125.9L984.5 122.3L983.5 128.2L982.5 124.8L981.5 123.5L980.5 128.8L979.5 126.3L978.5 122.1L977.5 127.8L976.5 125.7L975.5 123.6L974.5 127.5L973.5 126.5L972.5 122.7L971.5 129.1L970.5 125.7L969.5 122.8L968.5 128.9L967.5 126.3L966.5 123.7L965.5 127.5L964.5 125.6L963.5 124L962.5 128.9L961.5 125.1L960.5 124L959.5 128.3L958.5 124.7L957.5 122.5L956.5 128.8L955.5 125.4L954.5 122.9L953.5 127.7L952.5 126.3L951.5 123.4L950.5 129.2L949.5 124.8L948.5 123.5L947.5 128.7L946.5 125.8L945.5 122.7L944.5 127.9L943.5 124.8L942.5 123L941.5 128.7L940.5 126.4L939.5 122.6L938.5 127.6L937.5 125.8L936.5 123.5L935.5 128.8L934.5 125.6L933.5 123.2L932.5 127.4L931.5 126.4L930.5 123.3L929.5 127.9L928.5 126.4L927.5 122.9L926.5 127.6L925.5 125.9L924.5 123.3L923.5 128.7L922.5 125.8L921.5 122.8L920.5 127.8L919.5 124.7L918.5 123.5L917.5 128.1L916.5 125.1L915.5 122.1L914.5 128.2L913.5 126L912.5 123.7L911.5 128.4L910.5 125.4L909.5 123.3L908.5 128.6L907.5 125.4L906.5 123.4L905.5 127.6L904.5 126.3L903.5 122.7L902.5 129.3L901.5 125.6L900.5 124L899.5 128L898.5 126.3L897.5 123.4L896.5 127.8L895.5 126.4L894.5 123.1L893.5 128L892.5 125L891.5 122.8L890.5 127.5L889.5 126.3L888.5 122.5L887.5 129L886.5 125.5L885.5 122.3L884.5 128.7L883.5 126.5L882.5 123.9L881.5 127.8L880.5 126.2L879.5 123.8L878.5 129.1L877.5 125.5L876.5 123.9L875.5 128.2L874.5 125.5L873.5 123.1L872.5 129.1L871.5 126.4L870.5 123.7L869.5 128.2L868.5 125.4L867.5 123.9L866.5 129L865.5 125.9L864.5 123.1L863.5 128.8L862.5 126.5L861.5 122.1L860.5 127.5L859.5 125.9L858.5 123.3L857.5 128.8L856.5 125L855.5 123.4L854.5 128L853.5 125L852.5 124L851.5 128.5L850.5 124.7L849.5 122.7L848.5 128.7L847.5 125.6L846.5 122.6L845.5 128.2L844.5 124.9L843.5 123.3L842.5 129L841.5 124.9L840.5 122.2L839.5 129L838.5 125.1L837.5 123.5L836.5 127.5L835.5 124.8L834.5 123.6L833.5 129.1L832.5 125.2L831.5 122.1L830.5 129L829.5 125.9L828.5 122.6L827.5 129.2L826.5 126L825.5 122.5L824.5 128L823.5 125.5L822.5 122.9L821.5 128.7L820.5 125.7L819.5 123.5L818.5 129.1L817.5 125.8L816.5 123.5L815.5 127.4L814.5 125L813.5 122.5L812.5 128.3L811.5 126.5L810.5 122.4L809.5 127.5L808.5 126.4L807.5 122.5L806.5 129.2L805.5 126.2L804.5 123.5L803.5 127.7L802.5 125L801.5 123.3L800.5 128.8L799.5 124.9L798.5 123.4L797.5 128.7L796.5 126.5L795.5 122.6L794.5 129L793.5 124.9L792.5 122.7L791.5 128L790.5 126L789.5 122.3L788.5 128.5L787.5 126.3L786.5 123.9L785.5 128.6L784.5 125.3L783.5 123.7L782.5 128.7L781.5 125.8L780.5 122.9L779.5 127.6L778.5 126.1L777.5 122.2L776.5 129.1L775.5 125.6L774.5 122.1L773.5 128.6L772.5 124.9L771.5 122.4L770.5 127.9L769.5 125.3L768.5 123.5L767.5 128.6L766.5 126.5L765.5 123L764.5 128.8L763.5 125.9L762.5 122.5L761.5 128.7L760.5 125.8L759.5 123L758.5 128.7L757.5 126L756.5 123.9L755.5 128.5L754.5 124.8L753.5 123.1L752.5 127.6L751.5 126.2L750.5 123.4L749.5 129.2L748.5 125L747.5 123.8L746.5 129L745.5 125.4L744.5 122.7L743.5 128.4L742.5 125.4L741.5 124L740.5 127.8L739.5 125.3L738.5 122.8L737.5 129L736.5 126L735.5 122.3L734.5 128L733.5 125.6L732.5 123.4L731.5 128.3L730.5 125.3L729.5 122.1L728.5 128.2L727.5 126.4L726.5 122.2L725.5 128.6L724.5 125.6L723.5 123L722.5 128.4L721.5 126.6L720.5 123.6L719.5 127.7L718.5 126.4L717.5 123.7L716.5 128.5L715.5 125L714.5 122.9L713.5 127.9L712.5 125.8L711.5 122.5L710.5 127.4L709.5 125.1L708.5 123.8L707.5 127.8L706.5 125.1L705.5 122.4L704.5 128L703.5 126.3L702.5 123.6L701.5 128.5L700.5 125.7L699.5 123.7L698.5 127.4L697.5 125.5L696.5 123.3L695.5 128.6L694.5 126.1L693.5 122.8L692.5 127.9L691.5 125.5L690.5 122.9L689.5 128.8L688.5 126.3L687.5 123L686.5 128.3L685.5 126.3L684.5 123.5L683.5 128.3L682.5 124.8L681.5 122.7L680.5 129.3L679.5 125L678.5 122.5L677.5 129.3L676.5 126.4L675.5 122.8L674.5 127.5L673.5 126.5L672.5 122.2L671.5 128.5L670.5 125.9L669.5 123.2L668.5 128.5L667.5 125L666.5 122.9L665.5 128.2L664.5 126.3L663.5 123L662.5 127.9L661.5 125.2L660.5 122.8L659.5 128L658.5 125L657.5 123.7L656.5 129.3L655.5 125.6L654.5 122.3L653.5 128.6L652.5 124.9L651.5 123.8L650.5 128.3L649.5 125.8L648.5 122.4L647.5 127.6L646.5 126.5L645.5 122.4L644.5 129.2L643.5 125.1L642.5 122.9L641.5 128.1L640.5 125.6L639.5 123.9L638.5 127.8L637.5 125.5L636.5 123.2L635.5 127.7L634.5 125.9L633.5 122.1L632.5 129.2L631.5 126.4L630.5 122.1L629.5 128.8L628.5 126.2L627.5 123.9L626.5 127.6L625.5 126.2L624.5 123.5L623.5 128.8L622.5 125.5L621.5 123.6L620.5 128.4L619.5 125.7L618.5 122.2L617.5 129.1L616.5 124.7L615.5 123.9L614.5 129.3L613.5 126.1L612.5 123.8L611.5 129.1L610.5 126L609.5 122.5L608.5 127.4L607.5 125L606.5 122.2L605.5 128.8L604.5 124.6L603.5 123.1L602.5 127.5L601.5 126.1L600.5 123.2L599.5 127.5L598.5 124.9L597.5 123.9L596.5 129.3L595.5 125L594.5 123.2L593.5 128.2L592.5 124.6L591.5 123L590.5 129L589.5 126.4L588.5 123.9L587.5 128.5L586.5 125.2L585.5 123.6L584.5 128.3L583.5 125.4L582.5 122.4L581.5 127.8L580.5 126.2L579.5 122.8L578.5 127.9L577.5 125.5L576.5 122.2L575.5 127.7L574.5 124.9L573.5 123.9L572.5 128.2L571.5 126.6L570.5 122.3L569.5 128.6L568.5 126L567.5 122.1L566.5 127.7L565.5 126.5L564.5 122.5L563.5 128.6L562.5 125.3L561.5 123.7L560.5 128.2L559.5 125.6L558.5 122.6L557.5 127.7L556.5 126.6L555.5 123.5L554.5 127.9L553.5 125.1L552.5 122.5L551.5 127.9L550.5 126.5L549.5 123.8L548.5 128L547.5 126.3L546.5 123.8L545.5 127.4L544.5 125.8L543.5 122.2L542.5 129.1L541.5 126.5L540.5 123.2L539.5 128.7L538.5 125L537.5 122.7L536.5 129.3L535.5 125.1L534.5 123.6L533.5 128L532.5 125.4L531.5 122.7L530.5 129L529.5 126.5L528.5 122.6L527.5 128.1L526.5 126L525.5 122.7L524.5 128.8L523.5 124.9L522.5 122.9L521.5 128.9L520.5 125.6L519.5 123.4L518.5 129.3L517.5 125.6L516.5 122.2L515.5 129.3L514.5 126.4L513.5 123.3L512.5 128.2L511.5 126.6L510.5 123L509.5 128.4L508.5 126.3L507.5 122.9L506.5 127.9L505.5 126.2L504.5 122.3L503.5 128.1L502.5 125L501.5 123.3L500.5 129.1L499.5 125.3L498.5 124L497.5 129.1L496.5 124.9L495.5 122.2L494.5 128.1L493.5 126L492.5 122.6L491.5 128.5L490.5 126.1L489.5 122.4L488.5 128.8L487.5 125L486.5 122.1L485.5 128.4L484.5 125L483.5 123.2L482.5 128.3L481.5 126.1L480.5 122.6L479.5 129.3L478.5 126.5L477.5 123.8L476.5 128L475.5 125.8L474.5 122.8L473.5 128.3L472.5 125.6L471.5 123.7L470.5 127.4L469.5 125L468.5 122.2L467.5 128.1L466.5 126.1L465.5 122.5L464.5 128.1L463.5 125.3L462.5 122.6L461.5 127.9L460.5 125.1L459.5 122.2L458.5 128.1L457.5 125.3L456.5 122.5L455.5 128.6L454.5 125.3L453.5 122.6L452.5 128.6L451.5 126.4L450.5 123.6L449.5 128.3L448.5 126.3L447.5 122.6L446.5 128.9L445.5 126.3L444.5 123.2L443.5 128L442.5 125.9L441.5 122.5L440.5 128.4L439.5 125.8L438.5 123.5L437.5 127.6L436.5 125.8L435.5 122.8L434.5 127.8L433.5 126.4L432.5 123.6L431.5 128.8L430.5 125.6L429.5 123L428.5 127.4L427.5 126.6L426.5 123.8L425.5 128.3L424.5 125.1L423.5 124L422.5 128.3L421.5 125.9L420.5 123.5L419.5 128.7L418.5 126.4L417.5 122.8L416.5 127.7L415.5 126.4L414.5 122.2L413.5 129.2L412.5 125L411.5 123.9L410.5 128.1L409.5 126.5L408.5 122.2L407.5 129.1L406.5 125.4L405.5 122.9L404.5 127.6L403.5 125.7L402.5 122.7L401.5 128.9L400.5 125.9L399.5 122.6L398.5 129.3L397.5 124.7L396.5 123L395.5 128.2L394.5 124.9L393.5 123.4L392.5 129.1L391.5 125.1L390.5 122.4L389.5 127.8L388.5 126L387.5 122.4L386.5 128.1L385.5 124.7L384.5 122.5L383.5 128.5L382.5 124.8L381.5 122.2L380.5 128.6L379.5 126.6L378.5 122.5L377.5 129.1L376.5 124.7L375.5 122.8L374.5 128.2L373.5 126.4L372.5 124L371.5 129.1L370.5 125.7L369.5 124L368.5 128L367.5 125.3L366.5 123.9L365.5 128.5L364.5 125.4L363.5 122.4L362.5 127.4L361.5 125.4L360.5 123.3L359.5 129.1L358.5 124.8L357.5 123.7L356.5 128.7L355.5 126.2L354.5 123.7L353.5 127.6L352.5 125.9L351.5 122.5L350.5 127.5L349.5 126.2L348.5 122.1L347.5 127.5L346.5 126.5L345.5 122.6L344.5 129.3L343.5 126.4L342.5 123.8L341.5 128.4L340.5 126.1L339.5 124L338.5 128L337.5 125.8L336.5 122.9L335.5 127.7L334.5 125.5L333.5 122.6L332.5 128.6L331.5 126.1L330.5 122.4L329.5 127.8L328.5 125.4L327.5 122.2L326.5 127.4L325.5 126.2L324.5 123.1L323.5 128.3L322.5 125.6L321.5 123.8L320.5 128.3L319.5 125.7L318.5 122.4L317.5 129.3L316.5 126.2L315.5 122.3L314.5 128.2L313.5 126L312.5 122.6L311.5 128.1L310.5 126.4L309.5 122.5L308.5 129L307.5 126.6L306.5 122.8L305.5 129.1L304.5 125.4L303.5 122.2L302.5 128.5L301.5 124.7L300.5 123.6L299.5 129.3L298.5 125L297.5 122.1L296.5 128.9L295.5 125.8L294.5 122.3L293.5 128.8L292.5 125.8L291.5 122.4L290.5 127.7L289.5 125.4L288.5 123.1L287.5 129.1L286.5 124.6L285.5 123.4L284.5 129.2L283.5 126.2L282.5 123.3L281.5 128.1L280.5 125.1L279.5 122.2L278.5 128.8L277.5 124.7L276.5 124L275.5 127.5L274.5 126L273.5 123.5L272.5 128.8L271.5 125.1L270.5 123.9L269.5 127.8L268.5 126.5L267.5 123.6L266.5 128.4L265.5 125L264.5 123.6L263.5 127.5L262.5 126.6L261.5 123.3L260.5 129.3L259.5 126.2L258.5 122.1L257.5 127.6L256.5 126.5L255.5 123.6L254.5 127.5L253.5 126.1L252.5 122.1L251.5 128.9L250.5 126L249.5 123L248.5 128.9L247.5 125.9L246.5 122.2L245.5 128.5L244.5 126.5L243.5 122.1L242.5 128.4L241.5 124.7L240.5 124L239.5 128.6L238.5 126.4L237.5 122.8L236.5 128.7L235.5 126.1L234.5 122.9L233.5 128.1L232.5 125.2L231.5 123.8L230.5 127.7L229.5 125.8L228.5 123.1L227.5 129.3L226.5 124.9L225.5 123.2L224.5 128.9L223.5 125.6L222.5 123.5L221.5 128.6L220.5 125.8L219.5 122.9L218.5 129.2L217.5 126.2L216.5 122.1L215.5 128.4L214.5 126.3L213.5 122.9L212.5 128.8L211.5 126L210.5 123.8L209.5 128.8L208.5 125.7L207.5 122.6L206.5 127.5L205.5 124.8L204.5 123.6L203.5 128.8L202.5 124.9L201.5 123.5L200.5 128.2L199.5 125.8L198.5 122.6L197.5 127.7L196.5 124.9L195.5 123.7L194.5 128.4L193.5 125.6L192.5 122.6L191.5 127.7L190.5 125.5L189.5 123.6L188.5 128.8L187.5 125L186.5 122.2L185.5 127.6L184.5 125.7L183.5 122.7L182.5 128.8L181.5 125.5L180.5 123.5L179.5 128.1L178.5 125.2L177.5 123L176.5 128.9L175.5 126.4L174.5 123.9L173.5 128.3L172.5 126.6L171.5 122.8L170.5 127.7L169.5 124.8L168.5 114.9L167.5 109.2L166.5 120.1L165.5 123.4L164.5 126.6L163.5 124L162.5 123.5L161.5 127.2L160.5 125.2L159.5 123.9L158.5 126.3L157.5 124.8L156.5 123.2L155.5 126.7L154.5 124.9L153.5 123L152.5 127.2L151.5 124.8L150.5 124.2L149.5 127.5L148.5 125.5L147.5 124.4L146.5 127.3L145.5 124.4L144.5 123.6L143.5 126.6L142.5 125L141.5 124.3L140.5 128L139.5 125L138.5 124.5L137.5 125.6L136.5 124.7L135.5 123.8L134.5 127.8L133.5 126.1L132.5 123.8L131.5 127.5L130.5 124.7L129.5 122.2L128.5 128.4L127.5 125.6L126.5 122.2L125.5 128.3L124.5 126.1L123.5 122.5L122.5 128.7L121.5 125.6L120.5 124L119.5 129.3L118.5 125.6L117.5 122.2L116.5 128.6L115.5 125.8L114.5 123.5L113.5 128.9L112.5 125.7L111.5 122.7L110.5 129.1L109.5 125.3L108.5 123.7L107.5 129L106.5 125.2L105.5 123.2L104.5 128.7L103.5 125.6L102.5 122.2L101.5 127.8L100.5 124.9L99.5 123.6L98.5 128.9L97.5 124.6L96.5 122.1L95.5 128.8L94.5 125.9L93.5 122.6L92.5 127.7L91.5 126.1L90.5 123L89.5 128.6L88.5 124.9L87.5 124L86.5 128.3L85.5 126.3L84.5 123.3L83.5 128.4L82.5 124.9L81.5 123.3L80.5 128.1L79.5 125.9L78.5 124L77.5 129L76.5 126.5L75.5 123.2L74.5 127.6L73.5 126.5L72.5 123L71.5 128.2L70.5 126.6L69.5 123.1L68.5 129L67.5 124.8L66.5 123.5L65.5 127.6L64.5 126.4L63.5 123.5L62.5 129.2L61.5 125.7L60.5 123.3L59.5 127.4L58.5 126.5L57.5 122.2L56.5 128.2L55.5 126L54.5 122.5L53.5 128.4L52.5 125.8L51.5 123.5L50.5 128.3L49.5 125.2L48.5 123.1L47.5 128.5L46.5 126.5L45.5 123.3L44.5 129L43.5 126.3L42.5 122.3L41.5 128.6L40.5 125.3L39.5 122.4L38.5 129.2L37.5 125.6L36.5 123L35.5 129Z" fill="#8080ff" stroke="#8080ff" stroke-width="0.35" stroke-linejoin="round"/><path d="M35 122L35 119.8L35.5 119.8L36.5 116.4L37.5 119.5L38.5 122L39 122L39 122.9L38.5 122.9L37.5 121.4L36.5 119.3L35.5 122ZM63 119.3L63 118L63.5 118L64.5 117.5L65.5 117.4L66.5 116.4L67.5 118.7L68 118.7L68 119.9L67.5 119.9L66.5 119.2L65.5 121.7L64.5 120.7L63.5 119.3ZM93 119.5L93 118.6L93.5 118.6L94.5 119L95.5 119.4L96.5 117.1L97.5 119L98 119L98 120L97.5 120L96.5 119.2L95.5 122.6L94.5 121.4L93.5 119.5ZM122 122.2L122 121.5L122.5 121.5L123.5 118L124.5 118.7L125.5 120.7L126.5 118.5L127 118.5L127 119.2L126.5 119.2L125.5 122.1L124.5 121L123.5 119.7L122.5 122.2ZM136 120.3L136 114.5L136.5 114.5L137.5 118.7L138.5 116L139.5 118.2L140.5 117.9L141.5 116.7L142.5 116.6L143.5 118.4L144.5 115.7L145.5 117.4L146.5 118.6L147.5 115.9L148.5 117.6L149.5 119L150.5 116L151.5 112.7L152.5 115.2L153.5 112.4L154.5 114L155.5 114.6L156.5 112.2L157.5 113.4L158.5 114.4L159.5 113.1L160.5 113.6L161.5 114.3L162.5 111.1L163.5 112.6L164.5 115L165.5 110.4L166.5 112L167.5 100L168.5 105.7L169.5 113.8L170 113.8L170 119.3L169.5 119.3L168.5 111.2L167.5 105.5L166.5 117.5L165.5 120.1L164.5 123.4L163.5 122.3L162.5 120.5L161.5 124.4L160.5 122.1L159.5 121.3L158.5 123.7L157.5 122.7L156.5 120.3L155.5 124.1L154.5 122.4L153.5 120.9L152.5 123.3L151.5 121.6L150.5 121.4L149.5 123.8L148.5 122.7L147.5 120.7L146.5 124.1L145.5 123L144.5 120.9L143.5 123.8L142.5 121.7L141.5 121.5L140.5 123.2L139.5 123.1L138.5 121.1L137.5 123.3L136.5 120.3ZM181 121.4L181 120.2L181.5 120.2L182.5 118.8L183.5 115.3L184.5 118L185.5 121.5L186 121.5L186 122.7L185.5 122.7L184.5 120.7L183.5 119.4L182.5 122L181.5 121.4ZM211 120.3L211 119.5L211.5 119.5L212.5 120.1L213.5 116.7L214.5 119.5L215.5 121.9L216 121.9L216 122.7L215.5 122.7L214.5 121.1L213.5 119.3L212.5 122L211.5 120.3ZM240 119.4L240 118.7L240.5 118.7L241.5 118.7L242.5 120.4L243.5 117.3L244.5 120L245 120L245 120.7L244.5 120.7L243.5 118.8L242.5 122.7L241.5 120.4L240.5 119.4ZM270 118.4L270 117.5L270.5 117.5L271.5 117.8L272.5 118.6L273.5 116.8L274.5 120.6L275 120.6L275 121.5L274.5 121.5L273.5 118.8L272.5 121.5L271.5 120L270.5 118.4ZM299 122.6L299 121.4L299.5 121.4L300.5 115.4L301.5 116.9L302.5 120.1L303.5 118.5L304 118.5L304 119.7L303.5 119.7L302.5 122.6L301.5 120.9L300.5 118.3L299.5 122.6ZM329 122.7L329 121.7L329.5 121.7L330.5 116L331.5 117.5L332.5 120.6L333.5 117.5L334 117.5L334 118.5L333.5 118.5L332.5 122.8L331.5 120.8L330.5 118.6L329.5 122.7ZM358 121.2L358 120.1L358.5 120.1L359.5 119.4L360.5 114.8L361.5 117.6L362.5 120.9L363 120.9L363 122L362.5 122L361.5 120.1L360.5 118.5L359.5 122.2L358.5 121.2ZM387 119.6L387 118.5L387.5 118.5L388.5 118.6L389.5 118.2L390.5 116.3L391.5 119.6L392 119.6L392 120.7L391.5 120.7L390.5 118.7L389.5 121.9L388.5 121.4L387.5 119.6ZM417 119.4L417 118.1L417.5 118.1L418.5 117L419.5 118.1L420.5 116.6L421.5 119.7L422 119.7L422 121L421.5 121L420.5 119.4L419.5 122.4L418.5 120.3L417.5 119.4ZM446 122.7L446 121.9L446.5 121.9L447.5 116.5L448.5 118.4L449.5 121L450.5 117.5L451 117.5L451 118.3L450.5 118.3L449.5 122.8L448.5 121.1L447.5 118.6L446.5 122.7ZM476 122.4L476 121.6L476.5 121.6L477.5 116.4L478.5 118.4L479.5 120.7L480.5 118.5L481 118.5L481 119.3L480.5 119.3L479.5 122.4L478.5 121L477.5 118.3L476.5 122.4ZM489 119.3L489 116.9L489.5 116.9L490.5 118.7L491.5 120.9L492.5 117.4L493.5 117.3L494.5 118.6L495.5 116.1L496.5 116.8L497.5 120.1L498.5 117.4L499.5 118.3L500.5 121.2L501.5 117.4L502.5 118.9L503.5 119.6L504.5 114.6L505.5 116.6L506.5 116L507.5 112.5L508.5 115.2L509.5 119.3L510.5 116.9L511 116.9L511 119L510.5 119L509.5 122.8L508.5 120.7L507.5 119.5L506.5 122.3L505.5 120.4L504.5 118.6L503.5 121.8L502.5 121.2L501.5 119.6L500.5 122.7L499.5 121.1L498.5 119.9L497.5 121.7L496.5 120L495.5 118.5L494.5 122L493.5 120.7L492.5 119.4L491.5 122.7L490.5 120.9L489.5 119.3ZM535 121.3L535 120.4L535.5 120.4L536.5 119.6L537.5 116.3L538.5 118.6L539.5 121.5L540 121.5L540 122.4L539.5 122.4L538.5 120.6L537.5 119.3L536.5 121.8L535.5 121.3ZM564 119L564 117.9L564.5 117.9L565.5 117.1L566.5 118.8L567.5 116.1L568.5 119.7L569 119.7L569 120.8L568.5 120.8L567.5 118.6L566.5 122.5L565.5 119.9L564.5 119ZM594 118.4L594 117.5L594.5 117.5L595.5 117.6L596.5 119.6L597.5 117.8L598.5 119.8L599 119.8L599 120.7L598.5 120.7L597.5 119.8L596.5 122.7L595.5 119.9L594.5 118.4ZM623 122.4L623 121.4L623.5 121.4L624.5 116.2L625.5 117.5L626.5 120.8L627.5 117.5L628 117.5L628 118.5L627.5 118.5L626.5 122.9L625.5 120.7L624.5 118.6L623.5 122.4ZM653 121.8L653 121.1L653.5 121.1L654.5 116.6L655.5 118.3L656.5 120L657.5 119L658 119L658 119.7L657.5 119.7L656.5 121.5L655.5 120.6L654.5 118.4L653.5 121.8ZM682 120.5L682 119.1L682.5 119.1L683.5 119L684.5 114.9L685.5 117.6L686.5 121.3L687 121.3L687 122.6L686.5 122.6L685.5 120.5L684.5 119.4L683.5 122.3L682.5 120.5ZM711 118.5L711 117.8L711.5 117.8L712.5 118.9L713.5 120.2L714.5 117.7L715.5 119.4L716 119.4L716 120.1L715.5 120.1L714.5 119.3L713.5 122.6L712.5 120.7L711.5 118.5ZM741 119.4L741 118.4L741.5 118.4L742.5 117.9L743.5 118.8L744.5 116.9L745.5 119.8L746 119.8L746 120.8L745.5 120.8L744.5 119L743.5 122.2L742.5 120.4L741.5 119.4ZM770 122.9L770 121.8L770.5 121.8L771.5 116.9L772.5 116.4L773.5 119.5L774.5 118.4L775 118.4L775 119.6L774.5 119.6L773.5 121.9L772.5 120.2L771.5 119.7L770.5 122.9ZM800 122.3L800 121.1L800.5 121.1L801.5 116.8L802.5 116.9L803.5 119.4L804.5 118.5L805 118.5L805 119.7L804.5 119.7L803.5 122.1L802.5 121L801.5 119.9L800.5 122.3ZM829 120.7L829 119.4L829.5 119.4L830.5 119.6L831.5 114.3L832.5 117.1L833.5 121L834 121L834 122.3L833.5 122.3L832.5 119.9L831.5 118.7L830.5 122.9L829.5 120.7ZM859 120.7L859 119.7L859.5 119.7L860.5 119.2L861.5 115.6L862.5 118.3L863.5 121.1L864 121.1L864 122.1L863.5 122.1L862.5 120.4L861.5 118.9L860.5 121.7L859.5 120.7ZM888 118.8L888 117.8L888.5 117.8L889.5 118.4L890.5 118.6L891.5 117.6L892.5 120.3L893 120.3L893 121.3L892.5 121.3L891.5 119.7L890.5 121.9L889.5 120.9L888.5 118.8ZM918 118.6L918 117.5L918.5 117.5L919.5 117.5L920.5 118.1L921.5 116.9L922.5 120.2L923 120.2L923 121.4L922.5 121.4L921.5 119.3L920.5 121.9L919.5 120.4L918.5 118.6ZM947 122.3L947 121.2L947.5 121.2L948.5 116.5L949.5 117L950.5 119.8L951.5 118.7L952 118.7L952 119.7L951.5 119.7L950.5 122.1L949.5 120.6L948.5 119.2L947.5 122.3ZM976 121.1L976 120.4L976.5 120.4L977.5 120.3L978.5 117.3L979.5 118.6L980.5 121.2L981 121.2L981 121.8L980.5 121.8L979.5 120.1L978.5 119.5L977.5 122L976.5 121.1ZM1006 120.4L1006 119.2L1006.5 119.2L1007.5 118.7L1008.5 113.7L1009.5 117.1L1010.5 118L1011.5 115.1L1012.5 115L1013.5 115.5L1014.5 111.1L1015.5 110L1016.5 109.5L1017.5 105.4L1018.5 104.5L1019.5 105.3L1020.5 99.7L1021.5 100.4L1022.5 98.9L1023.5 98.1L1024.5 84.3L1025.5 61.8L1026.5 54.4L1027.5 78.8L1028.5 109.5L1029.5 130.7L1030.5 131.4L1031.5 129.7L1032.5 125.2L1033.5 123L1034.5 125.1L1035.5 128.1L1036.5 133.3L1037.5 137.8L1038.5 137.7L1039.5 136.6L1040.5 133.9L1041.5 128.4L1042.5 124.7L1043.5 120.9L1044.5 117.7L1045.5 119.3L1046.5 120.4L1047.5 121.7L1048.5 120.8L1049.5 119.6L1050 119.6L1050 121L1049.5 121L1048.5 122.2L1047.5 124.2L1046.5 127.2L1045.5 128.8L1044.5 129.8L1043.5 133L1042.5 134.1L1041.5 135.3L1040.5 138.1L1039.5 139L1038.5 140L1037.5 140.1L1036.5 138.3L1035.5 136.2L1034.5 136.2L1033.5 134.1L1032.5 133.3L1031.5 134.8L1030.5 133.8L1029.5 133.1L1028.5 112.6L1027.5 83L1026.5 59.4L1025.5 67.3L1024.5 90.9L1023.5 104.7L1022.5 113.1L1021.5 112.6L1020.5 111.4L1019.5 114.8L1018.5 113.9L1017.5 112.4L1016.5 116.8L1015.5 115.5L1014.5 115.9L1013.5 119.4L1012.5 118.2L1011.5 117.7L1010.5 120.9L1009.5 119.8L1008.5 117.7L1007.5 121.8L1006.5 120.4ZM1065 94.9L1065 94L1065.5 94L1066.5 94.6L1067.5 94.6L1068.5 93L1069.5 95.3L1070 95.3L1070 96.2L1069.5 96.2L1068.5 94.9L1067.5 97.6L1066.5 96.8L1065.5 94.9ZM1094 97.8L1094 96.7L1094.5 96.7L1095.5 91.7L1096.5 91.6L1097.5 94.9L1098.5 93.2L1099 93.2L1099 94.3L1098.5 94.3L1097.5 97.2L1096.5 95.1L1095.5 94.4L1094.5 97.8ZM1124 95.4L1124 94.5L1124.5 94.5L1125.5 91.2L1126.5 91.6L1127.5 94.3L1128.5 91.3L1129 91.3L1129 92.2L1128.5 92.2L1127.5 96.3L1126.5 94.5L1125.5 93.4L1124.5 95.4ZM1153 93.7L1153 92.8L1153.5 92.8L1154.5 93.1L1155.5 88.8L1156.5 91.6L1157.5 94.4L1158 94.4L1158 95.3L1157.5 95.3L1156.5 93.5L1155.5 91.8L1154.5 95.4L1153.5 93.7ZM1183 93.4L1183 92.5L1183.5 92.5L1184.5 92.7L1185.5 89L1186.5 92.2L1187.5 93.8L1188 93.8L1188 94.7L1187.5 94.7L1186.5 94L1185.5 91.8L1184.5 94.8L1183.5 93.4ZM1212 91.8L1212 90.8L1212.5 90.8L1213.5 90.8L1214.5 92.4L1215.5 88.9L1216.5 91.8L1217 91.8L1217 92.8L1216.5 92.8L1215.5 91L1214.5 95.6L1213.5 93.2L1212.5 91.8ZM1242 91.2L1242 90.5L1242.5 90.5L1243.5 90.5L1244.5 91.9L1245.5 90.1L1246.5 92.1L1247 92.1L1247 92.8L1246.5 92.8L1245.5 91.7L1244.5 94.2L1243.5 92.3L1242.5 91.2ZM1271 94.6L1271 93.4L1271.5 93.4L1272.5 87.4L1273.5 89.1L1274.5 91.4L1275.5 89.3L1276 89.3L1276 90.6L1275.5 90.6L1274.5 94.1L1273.5 93.3L1272.5 90.5L1271.5 94.6ZM1300 93.2L1300 92.4L1300.5 92.4L1301.5 93.1L1302.5 89L1303.5 91.6L1304.5 92.9L1305 92.9L1305 93.7L1304.5 93.7L1303.5 93.2L1302.5 91.5L1301.5 95L1300.5 93.2ZM1330 85.3L1330 84.1L1330.5 84.1L1331.5 84.2L1332.5 83.3L1333.5 90.5L1334.5 93.1L1335 93.1L1335 94.3L1334.5 94.3L1333.5 93L1332.5 87.2L1331.5 87.1L1330.5 85.3ZM1359 90.6L1359 89.7L1359.5 89.7L1360.5 90L1361.5 91.3L1362.5 89.6L1363.5 91.3L1364 91.3L1364 92.2L1363.5 92.2L1362.5 91.6L1361.5 94.4L1360.5 92.3L1359.5 90.6ZM1389 91L1389 88.2L1389.5 88.2L1390.5 86.8L1391.5 89.2L1392.5 87.7L1393.5 92.4L1394 92.4L1394 93L1393.5 93L1392.5 90.8L1391.5 94.4L1390.5 91.5L1389.5 91ZM1418 93.3L1418 92.4L1418.5 92.4L1419.5 87.8L1420.5 89.2L1421.5 92.2L1422.5 90.1L1423 90.1L1423 91L1422.5 91L1421.5 94.2L1420.5 92.2L1419.5 90.1L1418.5 93.3ZM1448 119.3L1448 118L1448.5 118L1449.5 112.3L1450.5 112.8L1451.5 115.1L1452.5 113.6L1453 113.6L1453 114.9L1452.5 114.9L1451.5 118.1L1450.5 117.3L1449.5 115.6L1448.5 119.3ZM1477 116.8L1477 115.5L1477.5 115.5L1478.5 115.2L1479.5 111.3L1480.5 114.3L1481.5 116.5L1482 116.5L1482 117.8L1481.5 117.8L1480.5 117.2L1479.5 115.6L1478.5 118.4L1477.5 116.8ZM1507 117.3L1507 116L1507.5 116L1508.5 114.5L1509.5 110.6L1510.5 113.6L1511.5 117.8L1512 117.8L1512 119.1L1511.5 119.1L1510.5 116.3L1509.5 114.8L1508.5 117.7L1507.5 117.3ZM1536 115.8L1536 114.5L1536.5 114.5L1537.5 113.4L1538.5 113.2L1539.5 111.8L1540.5 115.3L1541 115.3L1541 116.6L1540.5 116.6L1539.5 114.7L1538.5 117.7L1537.5 116.7L1536.5 115.8Z" fill="#000080" stroke="#000080" stroke-width="0.35" stroke-linejoin="round"/><path d="M37 119.5L37 118.5L37.5 118.5L38.5 120.8L39 120.8L39 122L38.5 122L37.5 119.5ZM96 117.1L96 116.1L96.5 116.1L97.5 117.8L98 117.8L98 119L97.5 119L96.5 117.1ZM125 120.7L125 119.7L125.5 119.7L126.5 117.3L127 117.3L127 118.5L126.5 118.5L125.5 120.7ZM137 118.7L137 115.4L137.5 115.4L138.5 113.8L139.5 110.6L140.5 111.5L141.5 110.6L142.5 110.9L143.5 111.6L144.5 111.3L145.5 110L146.5 110.6L147.5 109.3L148.5 111L149.5 110.9L150.5 109.6L151.5 95.8L152.5 97.3L153.5 98L154.5 95.7L155.5 98.5L156.5 95.6L157.5 96.1L158.5 96L159.5 99.3L160.5 99.4L161.5 96.9L162.5 94.6L163.5 98.4L164.5 99L165.5 95.8L166.5 102.7L167 102.7L167 112L166.5 112L165.5 110.4L164.5 115L163.5 112.6L162.5 111.1L161.5 114.3L160.5 113.6L159.5 113.1L158.5 114.4L157.5 113.4L156.5 112.2L155.5 114.6L154.5 114L153.5 112.4L152.5 115.2L151.5 112.7L150.5 116L149.5 119L148.5 117.6L147.5 115.9L146.5 118.6L145.5 117.4L144.5 115.7L143.5 118.4L142.5 116.6L141.5 116.7L140.5 117.9L139.5 118.2L138.5 116L137.5 118.7ZM273 116.8L273 115.8L273.5 115.8L274.5 119.4L275 119.4L275 120.6L274.5 120.6L273.5 116.8ZM332 120.6L332 119.7L332.5 119.7L333.5 116.3L334 116.3L334 117.5L333.5 117.5L332.5 120.6ZM390 116.3L390 115.3L390.5 115.3L391.5 118.4L392 118.4L392 119.6L391.5 119.6L390.5 116.3ZM420 116.6L420 115.7L420.5 115.7L421.5 118.5L422 118.5L422 119.7L421.5 119.7L420.5 116.6ZM449 121L449 120L449.5 120L450.5 116.4L451 116.4L451 117.5L450.5 117.5L449.5 121ZM479 120.7L479 119.7L479.5 119.7L480.5 117.4L481 117.4L481 118.5L480.5 118.5L479.5 120.7ZM489 116.9L489 115.8L489.5 115.8L490.5 117L491.5 120.2L492.5 115.7L493.5 116.3L494.5 117L495.5 115.3L496.5 115.8L497.5 118.4L498.5 116.4L499.5 117.4L500.5 120.2L501.5 116.8L502.5 117.4L503.5 118.2L504.5 113.2L505.5 114.6L506.5 114.4L507.5 110.3L508.5 113.7L509.5 117.4L510.5 116.3L511 116.3L511 116.9L510.5 116.9L509.5 119.3L508.5 115.2L507.5 112.5L506.5 116L505.5 116.6L504.5 114.6L503.5 119.6L502.5 118.9L501.5 117.4L500.5 121.2L499.5 118.3L498.5 117.4L497.5 120.1L496.5 116.8L495.5 116.1L494.5 118.6L493.5 117.3L492.5 117.4L491.5 120.9L490.5 118.7L489.5 116.9ZM538 118.6L538 117.7L538.5 117.7L539.5 120.3L540 120.3L540 121.5L539.5 121.5L538.5 118.6ZM567 116.1L567 115.1L567.5 115.1L568.5 118.5L569 118.5L569 119.7L568.5 119.7L567.5 116.1ZM626 120.8L626 119.8L626.5 119.8L627.5 116.3L628 116.3L628 117.5L627.5 117.5L626.5 120.8ZM744 116.9L744 115.9L744.5 115.9L745.5 118.6L746 118.6L746 119.8L745.5 119.8L744.5 116.9ZM803 119.4L803 118.4L803.5 118.4L804.5 117.3L805 117.3L805 118.5L804.5 118.5L803.5 119.4ZM862 118.3L862 117.3L862.5 117.3L863.5 120L864 120L864 121.1L863.5 121.1L862.5 118.3ZM891 117.6L891 116.6L891.5 116.6L892.5 119.1L893 119.1L893 120.3L892.5 120.3L891.5 117.6ZM1009 117.1L1009 116.1L1009.5 116.1L1010.5 116.9L1011 116.9L1011 118L1010.5 118L1009.5 117.1ZM1023 98.1L1023 93.7L1023.5 93.7L1024.5 79.9L1025.5 58.2L1026.5 51.1L1027.5 75.9L1028.5 107.5L1029 107.5L1029 109.5L1028.5 109.5L1027.5 78.8L1026.5 54.4L1025.5 61.8L1024.5 84.3L1023.5 98.1ZM1031 129.7L1031 128L1031.5 128L1032.5 121.7L1033.5 117.6L1034.5 119.8L1035.5 124.6L1036.5 131.6L1037 131.6L1037 133.3L1036.5 133.3L1035.5 128.1L1034.5 125.1L1033.5 123L1032.5 125.2L1031.5 129.7ZM1040 133.9L1040 132.2L1040.5 132.2L1041.5 124.3L1042.5 118.1L1043.5 111.9L1044.5 108.7L1045.5 112.7L1046.5 116.2L1047.5 120L1048 120L1048 121.7L1047.5 121.7L1046.5 120.4L1045.5 119.3L1044.5 117.7L1043.5 120.9L1042.5 124.7L1041.5 128.4L1040.5 133.9ZM1068 93L1068 92L1068.5 92L1069.5 94.1L1070 94.1L1070 95.3L1069.5 95.3L1068.5 93ZM1215 88.9L1215 87.9L1215.5 87.9L1216.5 90.7L1217 90.7L1217 91.8L1216.5 91.8L1215.5 88.9ZM1333 90.5L1333 89.5L1333.5 89.5L1334.5 91.9L1335 91.9L1335 93.1L1334.5 93.1L1333.5 90.5ZM1390 86.8L1390 82.8L1390.5 82.8L1391.5 82.5L1392.5 85.7L1393.5 91.2L1394 91.2L1394 92.4L1393.5 92.4L1392.5 87.7L1391.5 89.2L1390.5 86.8ZM1451 115.1L1451 114.1L1451.5 114.1L1452.5 112.4L1453 112.4L1453 113.6L1452.5 113.6L1451.5 115.1Z" fill="#ff0000" stroke="#ff0000" stroke-width="0.35" stroke-linejoin="round"/></svg><svg style="left:0;top:0" width="1589" height="254" viewBox="0 0 1589 254" font-family="'Liberation Mono',monospace"><rect x="34" y="16" width="1" height="159" fill="#303030"/><rect x="33" y="16.1" width="3" height="1" fill="#404040"/><rect x="33" y="35.8" width="3" height="1" fill="#404040"/><rect x="33" y="55.5" width="3" height="1" fill="#404040"/><rect x="33" y="75.2" width="3" height="1" fill="#404040"/><rect x="33" y="94.9" width="3" height="1" fill="#404040"/><rect x="33" y="114.6" width="3" height="1" fill="#404040"/><rect x="33" y="134.3" width="3" height="1" fill="#404040"/><rect x="33" y="154.0" width="3" height="1" fill="#404040"/><rect x="33" y="173.7" width="3" height="1" fill="#404040"/><rect x="34" y="174" width="1539" height="2" fill="#9a9a9a"/><line x1="34" y1="175" x2="1573" y2="175" stroke="#2e2e2e" stroke-width="2" stroke-dasharray="1.9 1.045"/><text x="9.70" y="13.40" font-size="5.9" fill="#3030e0" fill-opacity="0.95" text-anchor="start" textLength="48.3" lengthAdjust="spacingAndGlyphs">Active session</text><text x="24.70" y="18.90" font-size="6.6" fill="#2a2aee" fill-opacity="0.95" text-anchor="start" textLength="6.6" lengthAdjust="spacingAndGlyphs">35</text><text x="24.70" y="58.30" font-size="6.6" fill="#2a2aee" fill-opacity="0.95" text-anchor="start" textLength="6.6" lengthAdjust="spacingAndGlyphs">25</text><text x="24.70" y="97.70" font-size="6.6" fill="#2a2aee" fill-opacity="0.95" text-anchor="start" textLength="6.6" lengthAdjust="spacingAndGlyphs">15</text><text x="28.00" y="137.10" font-size="6.6" fill="#2a2aee" fill-opacity="0.95" text-anchor="start" textLength="3.3" lengthAdjust="spacingAndGlyphs">5</text><text x="24.70" y="176.50" font-size="6.6" fill="#2a2aee" fill-opacity="0.95" text-anchor="start" textLength="6.6" lengthAdjust="spacingAndGlyphs">-5</text><g font-size="7" font-weight="bold" fill="#3030e0" fill-opacity="0.9"><text x="38.40" y="219.9" transform="rotate(-90 38.40 219.9)" textLength="41.3" lengthAdjust="spacingAndGlyphs">2026-02-13 00:00</text><text x="47.24" y="219.9" transform="rotate(-90 47.24 219.9)" textLength="41.3" lengthAdjust="spacingAndGlyphs">2026-02-13 00:06</text><text x="56.07" y="219.9" transform="rotate(-90 56.07 219.9)" textLength="41.3" lengthAdjust="spacingAndGlyphs">2026-02-13 00:12</text><text x="64.91" y="219.9" transform="rotate(-90 64.91 219.9)" textLength="41.3" lengthAdjust="spacingAndGlyphs">2026-02-13 00:18</text><text x="73.74" y="219.9" transform="rotate(-90 73.74 219.9)" textLength="41.3" lengthAdjust="spacingAndGlyphs">2026-02-13 00:24</text><text x="82.58" y="219.9" transform="rotate(-90 82.58 219.9)" textLength="41.3" lengthAdjust="spacingAndGlyphs">2026-02-13 00:30</text><text x="91.42" y="219.9" transform="rotate(-90 91.42 219.9)" textLength="41.3" lengthAdjust="spacingAndGlyphs">2026-02-13 00:36</text><text x="100.25" y="219.9" transform="rotate(-90 100.25 219.9)" textLength="41.3" lengthAdjust="spacingAndGlyphs">2026-02-13 00:42</text><text x="109.09" y="219.9" transform="rotate(-90 109.09 219.9)" textLength="41.3" lengthAdjust="spacingAndGlyphs">2026-02-13 00:48</text><text x="117.92" y="219.9" transform="rotate(-90 117.92 219.9)" textLength="41.3" lengthAdjust="spacingAndGlyphs">2026-02-13 00:54</text><text x="126.76" y="219.9" transform="rotate(-90 126.76 219.9)" textLength="41.3" lengthAdjust="spacingAndGlyphs">2026-02-13 01:00</text><text x="135.60" y="219.9" transform="rotate(-90 135.60 219.9)" textLength="41.3" lengthAdjust="spacingAndGlyphs">2026-02-13 01:06</text><text x="144.43" y="219.9" transform="rotate(-90 144.43 219.9)" textLength="41.3" lengthAdjust="spacingAndGlyphs">2026-02-13 01:12</text><text x="153.27" y="219.9" transform="rotate(-90 153.27 219.9)" textLength="41.3" lengthAdjust="spacingAndGlyphs">2026-02-13 01:18</text><text x="162.10" y="219.9" transform="rotate(-90 162.10 219.9)" textLength="41.3" lengthAdjust="spacingAndGlyphs">2026-02-13 01:24</text><text x="170.94" y="219.9" transform="rotate(-90 170.94 219.9)" textLength="41.3" lengthAdjust="spacingAndGlyphs">2026-02-13 01:30</text><text x="179.78" y="219.9" transform="rotate(-90 179.78 219.9)" textLength="41.3" lengthAdjust="spacingAndGlyphs">2026-02-13 01:36</text><text x="188.61" y="219.9" transform="rotate(-90 188.61 219.9)" textLength="41.3" lengthAdjust="spacingAndGlyphs">2026-02-13 01:42</text><text x="197.45" y="219.9" transform="rotate(-90 197.45 219.9)" textLength="41.3" lengthAdjust="spacingAndGlyphs">2026-02-13 01:48</text><text x="206.28" y="219.9" transform="rotate(-90 206.28 219.9)" textLength="41.3" lengthAdjust="spacingAndGlyphs">2026-02-13 01:54</text><text x="215.12" y="219.9" transform="rotate(-90 215.12 219.9)" textLength="41.3" lengthAdjust="spacingAndGlyphs">2026-02-13 02:00</text><text x="223.96" y="219.9" transform="rotate(-90 223.96 219.9)" textLength="41.3" lengthAdjust="spacingAndGlyphs">2026-02-13 02:06</text><text x="232.79" y="219.9" transform="rotate(-90 232.79 219.9)" textLength="41.3" lengthAdjust="spacingAndGlyphs">2026-02-13 02:12</text><text x="241.63" y="219.9" transform="rotate(-90 241.63 219.9)" textLength="41.3" lengthAdjust="spacingAndGlyphs">2026-02-13 02:18</text><text x="250.46" y="219.9" transform="rotate(-90 250.46 219.9)" textLength="41.3" lengthAdjust="spacingAndGlyphs">2026-02-13 02:24</text><text x="259.30" y="219.9" transform="rotate(-90 259.30 219.9)" textLength="41.3" lengthAdjust="spacingAndGlyphs">2026-02-13 02:30</text><text x="268.14" y="219.9" transform="rotate(-90 268.14 219.9)" textLength="41.3" lengthAdjust="spacingAndGlyphs">2026-02-13 02:36</text><text x="276.97" y="219.9" transform="rotate(-90 276.97 219.9)" textLength="41.3" lengthAdjust="spacingAndGlyphs">2026-02-13 02:42</text><text x="285.81" y="219.9" transform="rotate(-90 285.81 219.9)" textLength="41.3" lengthAdjust="spacingAndGlyphs">2026-02-13 02:48</text><text x="294.64" y="219.9" transform="rotate(-90 294.64 219.9)" textLength="41.3" lengthAdjust="spacingAndGlyphs">2026-02-13 02:54</text><text x="303.48" y="219.9" transform="rotate(-90 303.48 219.9)" textLength="41.3" lengthAdjust="spacingAndGlyphs">2026-02-13 03:00</text><text x="312.32" y="219.9" transform="rotate(-90 312.32 219.9)" textLength="41.3" lengthAdjust="spacingAndGlyphs">2026-02-13 03:06</text><text x="321.15" y="219.9" transform="rotate(-90 321.15 219.9)" textLength="41.3" lengthAdjust="spacingAndGlyphs">2026-02-13 03:12</text><text x="329.99" y="219.9" transform="rotate(-90 329.99 219.9)" textLength="41.3" lengthAdjust="spacingAndGlyphs">2026-02-13 03:18</text><text x="338.82" y="219.9" transform="rotate(-90 338.82 219.9)" textLength="41.3" lengthAdjust="spacingAndGlyphs">2026-02-13 03:24</text><text x="347.66" y="219.9" transform="rotate(-90 347.66 219.9)" textLength="41.3" lengthAdjust="spacingAndGlyphs">2026-02-13 03:30</text><text x="356.50" y="219.9" transform="rotate(-90 356.50 219.9)" textLength="41.3" lengthAdjust="spacingAndGlyphs">2026-02-13 03:36</text><text x="365.33" y="219.9" transform="rotate(-90 365.33 219.9)" textLength="41.3" lengthAdjust="spacingAndGlyphs">2026-02-13 03:42</text><text x="374.17" y="219.9" transform="rotate(-90 374.17 219.9)" textLength="41.3" lengthAdjust="spacingAndGlyphs">2026-02-13 03:48</text><text x="383.00" y="219.9" transform="rotate(-90 383.00 219.9)" textLength="41.3" lengthAdjust="spacingAndGlyphs">2026-02-13 03:54</text><text x="391.84" y="219.9" transform="rotate(-90 391.84 219.9)" textLength="41.3" lengthAdjust="spacingAndGlyphs">2026-02-13 04:00</text><text x="400.68" y="219.9" transform="rotate(-90 400.68 219.9)" textLength="41.3" lengthAdjust="spacingAndGlyphs">2026-02-13 04:06</text><text x="409.51" y="219.9" transform="rotate(-90 409.51 219.9)" textLength="41.3" lengthAdjust="spacingAndGlyphs">2026-02-13 04:12</text><text x="418.35" y="219.9" transform="rotate(-90 418.35 219.9)" textLength="41.3" lengthAdjust="spacingAndGlyphs">2026-02-13 04:18</text><text x="427.18" y="219.9" transform="rotate(-90 427.18 219.9)" textLength="41.3" lengthAdjust="spacingAndGlyphs">2026-02-13 04:24</text><text x="436.02" y="219.9" transform="rotate(-90 436.02 219.9)" textLength="41.3" lengthAdjust="spacingAndGlyphs">2026-02-13 04:30</text><text x="444.86" y="219.9" transform="rotate(-90 444.86 219.9)" textLength="41.3" lengthAdjust="spacingAndGlyphs">2026-02-13 04:36</text><text x="453.69" y="219.9" transform="rotate(-90 453.69 219.9)" textLength="41.3" lengthAdjust="spacingAndGlyphs">2026-02-13 04:42</text><text x="462.53" y="219.9" transform="rotate(-90 462.53 219.9)" textLength="41.3" lengthAdjust="spacingAndGlyphs">2026-02-13 04:48</text><text x="471.36" y="219.9" transform="rotate(-90 471.36 219.9)" textLength="41.3" lengthAdjust="spacingAndGlyphs">2026-02-13 04:54</text><text x="480.20" y="219.9" transform="rotate(-90 480.20 219.9)" textLength="41.3" lengthAdjust="spacingAndGlyphs">2026-02-13 05:00</text><text x="489.04" y="219.9" transform="rotate(-90 489.04 219.9)" textLength="41.3" lengthAdjust="spacingAndGlyphs">2026-02-13 05:06</text><text x="497.87" y="219.9" transform="rotate(-90 497.87 219.9)" textLength="41.3" lengthAdjust="spacingAndGlyphs">2026-02-13 05:12</text><text x="506.71" y="219.9" transform="rotate(-90 506.71 219.9)" textLength="41.3" lengthAdjust="spacingAndGlyphs">2026-02-13 05:18</text><text x="515.54" y="219.9" transform="rotate(-90 515.54 219.9)" textLength="41.3" lengthAdjust="spacingAndGlyphs">2026-02-13 05:24</text><text x="524.38" y="219.9" transform="rotate(-90 524.38 219.9)" textLength="41.3" lengthAdjust="spacingAndGlyphs">2026-02-13 05:30</text><text x="533.22" y="219.9" transform="rotate(-90 533.22 219.9)" textLength="41.3" lengthAdjust="spacingAndGlyphs">2026-02-13 05:36</text><text x="542.05" y="219.9" transform="rotate(-90 542.05 219.9)" textLength="41.3" lengthAdjust="spacingAndGlyphs">2026-02-13 05:42</text><text x="550.89" y="219.9" transform="rotate(-90 550.89 219.9)" textLength="41.3" lengthAdjust="spacingAndGlyphs">2026-02-13 05:48</text><text x="559.72" y="219.9" transform="rotate(-90 559.72 219.9)" textLength="41.3" lengthAdjust="spacingAndGlyphs">2026-02-13 05:54</text><text x="568.56" y="219.9" transform="rotate(-90 568.56 219.9)" textLength="41.3" lengthAdjust="spacingAndGlyphs">2026-02-13 06:00</text><text x="577.40" y="219.9" transform="rotate(-90 577.40 219.9)" textLength="41.3" lengthAdjust="spacingAndGlyphs">2026-02-13 06:06</text><text x="586.23" y="219.9" transform="rotate(-90 586.23 219.9)" textLength="41.3" lengthAdjust="spacingAndGlyphs">2026-02-13 06:12</text><text x="595.07" y="219.9" transform="rotate(-90 595.07 219.9)" textLength="41.3" lengthAdjust="spacingAndGlyphs">2026-02-13 06:18</text><text x="603.90" y="219.9" transform="rotate(-90 603.90 219.9)" textLength="41.3" lengthAdjust="spacingAndGlyphs">2026-02-13 06:24</text><text x="612.74" y="219.9" transform="rotate(-90 612.74 219.9)" textLength="41.3" lengthAdjust="spacingAndGlyphs">2026-02-13 06:30</text><text x="621.58" y="219.9" transform="rotate(-90 621.58 219.9)" textLength="41.3" lengthAdjust="spacingAndGlyphs">2026-02-13 06:36</text><text x="630.41" y="219.9" transform="rotate(-90 630.41 219.9)" textLength="41.3" lengthAdjust="spacingAndGlyphs">2026-02-13 06:42</text><text x="639.25" y="219.9" transform="rotate(-90 639.25 219.9)" textLength="41.3" lengthAdjust="spacingAndGlyphs">2026-02-13 06:48</text><text x="648.08" y="219.9" transform="rotate(-90 648.08 219.9)" textLength="41.3" lengthAdjust="spacingAndGlyphs">2026-02-13 06:54</text><text x="656.92" y="219.9" transform="rotate(-90 656.92 219.9)" textLength="41.3" lengthAdjust="spacingAndGlyphs">2026-02-13 07:00</text><text x="665.76" y="219.9" transform="rotate(-90 665.76 219.9)" textLength="41.3" lengthAdjust="spacingAndGlyphs">2026-02-13 07:06</text><text x="674.59" y="219.9" transform="rotate(-90 674.59 219.9)" textLength="41.3" lengthAdjust="spacingAndGlyphs">2026-02-13 07:12</text><text x="683.43" y="219.9" transform="rotate(-90 683.43 219.9)" textLength="41.3" lengthAdjust="spacingAndGlyphs">2026-02-13 07:18</text><text x="692.26" y="219.9" transform="rotate(-90 692.26 219.9)" textLength="41.3" lengthAdjust="spacingAndGlyphs">2026-02-13 07:24</text><text x="701.10" y="219.9" transform="rotate(-90 701.10 219.9)" textLength="41.3" lengthAdjust="spacingAndGlyphs">2026-02-13 07:30</text><text x="709.94" y="219.9" transform="rotate(-90 709.94 219.9)" textLength="41.3" lengthAdjust="spacingAndGlyphs">2026-02-13 07:36</text><text x="718.77" y="219.9" transform="rotate(-90 718.77 219.9)" textLength="41.3" lengthAdjust="spacingAndGlyphs">2026-02-13 07:42</text><text x="727.61" y="219.9" transform="rotate(-90 727.61 219.9)" textLength="41.3" lengthAdjust="spacingAndGlyphs">2026-02-13 07:48</text><text x="736.44" y="219.9" transform="rotate(-90 736.44 219.9)" textLength="41.3" lengthAdjust="spacingAndGlyphs">2026-02-13 07:54</text><text x="745.28" y="219.9" transform="rotate(-90 745.28 219.9)" textLength="41.3" lengthAdjust="spacingAndGlyphs">2026-02-13 08:00</text><text x="754.12" y="219.9" transform="rotate(-90 754.12 219.9)" textLength="41.3" lengthAdjust="spacingAndGlyphs">2026-02-13 08:06</text><text x="762.95" y="219.9" transform="rotate(-90 762.95 219.9)" textLength="41.3" lengthAdjust="spacingAndGlyphs">2026-02-13 08:12</text><text x="771.79" y="219.9" transform="rotate(-90 771.79 219.9)" textLength="41.3" lengthAdjust="spacingAndGlyphs">2026-02-13 08:18</text><text x="780.62" y="219.9" transform="rotate(-90 780.62 219.9)" textLength="41.3" lengthAdjust="spacingAndGlyphs">2026-02-13 08:24</text><text x="789.46" y="219.9" transform="rotate(-90 789.46 219.9)" textLength="41.3" lengthAdjust="spacingAndGlyphs">2026-02-13 08:30</text><text x="798.30" y="219.9" transform="rotate(-90 798.30 219.9)" textLength="41.3" lengthAdjust="spacingAndGlyphs">2026-02-13 08:36</text><text x="807.13" y="219.9" transform="rotate(-90 807.13 219.9)" textLength="41.3" lengthAdjust="spacingAndGlyphs">2026-02-13 08:42</text><text x="815.97" y="219.9" transform="rotate(-90 815.97 219.9)" textLength="41.3" lengthAdjust="spacingAndGlyphs">2026-02-13 08:48</text><text x="824.80" y="219.9" transform="rotate(-90 824.80 219.9)" textLength="41.3" lengthAdjust="spacingAndGlyphs">2026-02-13 08:54</text><text x="833.64" y="219.9" transform="rotate(-90 833.64 219.9)" textLength="41.3" lengthAdjust="spacingAndGlyphs">2026-02-13 09:00</text><text x="842.48" y="219.9" transform="rotate(-90 842.48 219.9)" textLength="41.3" lengthAdjust="spacingAndGlyphs">2026-02-13 09:06</text><text x="851.31" y="219.9" transform="rotate(-90 851.31 219.9)" textLength="41.3" lengthAdjust="spacingAndGlyphs">2026-02-13 09:12</text><text x="860.15" y="219.9" transform="rotate(-90 860.15 219.9)" textLength="41.3" lengthAdjust="spacingAndGlyphs">2026-02-13 09:18</text><text x="868.98" y="219.9" transform="rotate(-90 868.98 219.9)" textLength="41.3" lengthAdjust="spacingAndGlyphs">2026-02-13 09:24</text><text x="877.82" y="219.9" transform="rotate(-90 877.82 219.9)" textLength="41.3" lengthAdjust="spacingAndGlyphs">2026-02-13 09:30</text><text x="886.66" y="219.9" transform="rotate(-90 886.66 219.9)" textLength="41.3" lengthAdjust="spacingAndGlyphs">2026-02-13 09:36</text><text x="895.49" y="219.9" transform="rotate(-90 895.49 219.9)" textLength="41.3" lengthAdjust="spacingAndGlyphs">2026-02-13 09:42</text><text x="904.33" y="219.9" transform="rotate(-90 904.33 219.9)" textLength="41.3" lengthAdjust="spacingAndGlyphs">2026-02-13 09:48</text><text x="913.16" y="219.9" transform="rotate(-90 913.16 219.9)" textLength="41.3" lengthAdjust="spacingAndGlyphs">2026-02-13 09:54</text><text x="922.00" y="219.9" transform="rotate(-90 922.00 219.9)" textLength="41.3" lengthAdjust="spacingAndGlyphs">2026-02-13 10:00</text><text x="930.84" y="219.9" transform="rotate(-90 930.84 219.9)" textLength="41.3" lengthAdjust="spacingAndGlyphs">2026-02-13 10:06</text><text x="939.67" y="219.9" transform="rotate(-90 939.67 219.9)" textLength="41.3" lengthAdjust="spacingAndGlyphs">2026-02-13 10:12</text><text x="948.51" y="219.9" transform="rotate(-90 948.51 219.9)" textLength="41.3" lengthAdjust="spacingAndGlyphs">2026-02-13 10:18</text><text x="957.34" y="219.9" transform="rotate(-90 957.34 219.9)" textLength="41.3" lengthAdjust="spacingAndGlyphs">2026-02-13 10:24</text><text x="966.18" y="219.9" transform="rotate(-90 966.18 219.9)" textLength="41.3" lengthAdjust="spacingAndGlyphs">2026-02-13 10:30</text><text x="975.02" y="219.9" transform="rotate(-90 975.02 219.9)" textLength="41.3" lengthAdjust="spacingAndGlyphs">2026-02-13 10:36</text><text x="983.85" y="219.9" transform="rotate(-90 983.85 219.9)" textLength="41.3" lengthAdjust="spacingAndGlyphs">2026-02-13 10:42</text><text x="992.69" y="219.9" transform="rotate(-90 992.69 219.9)" textLength="41.3" lengthAdjust="spacingAndGlyphs">2026-02-13 10:48</text><text x="1001.52" y="219.9" transform="rotate(-90 1001.52 219.9)" textLength="41.3" lengthAdjust="spacingAndGlyphs">2026-02-13 10:54</text><text x="1010.36" y="219.9" transform="rotate(-90 1010.36 219.9)" textLength="41.3" lengthAdjust="spacingAndGlyphs">2026-02-13 11:00</text><text x="1019.20" y="219.9" transform="rotate(-90 1019.20 219.9)" textLength="41.3" lengthAdjust="spacingAndGlyphs">2026-02-13 11:06</text><text x="1028.03" y="219.9" transform="rotate(-90 1028.03 219.9)" textLength="41.3" lengthAdjust="spacingAndGlyphs">2026-02-13 11:12</text><text x="1036.87" y="219.9" transform="rotate(-90 1036.87 219.9)" textLength="41.3" lengthAdjust="spacingAndGlyphs">2026-02-13 11:18</text><text x="1045.70" y="219.9" transform="rotate(-90 1045.70 219.9)" textLength="41.3" lengthAdjust="spacingAndGlyphs">2026-02-13 11:24</text><text x="1054.54" y="219.9" transform="rotate(-90 1054.54 219.9)" textLength="41.3" lengthAdjust="spacingAndGlyphs">2026-02-13 11:30</text><text x="1063.38" y="219.9" transform="rotate(-90 1063.38 219.9)" textLength="41.3" lengthAdjust="spacingAndGlyphs">2026-02-13 11:36</text><text x="1072.21" y="219.9" transform="rotate(-90 1072.21 219.9)" textLength="41.3" lengthAdjust="spacingAndGlyphs">2026-02-13 11:42</text><text x="1081.05" y="219.9" transform="rotate(-90 1081.05 219.9)" textLength="41.3" lengthAdjust="spacingAndGlyphs">2026-02-13 11:48</text><text x="1089.88" y="219.9" transform="rotate(-90 1089.88 219.9)" textLength="41.3" lengthAdjust="spacingAndGlyphs">2026-02-13 11:54</text><text x="1098.72" y="219.9" transform="rotate(-90 1098.72 219.9)" textLength="41.3" lengthAdjust="spacingAndGlyphs">2026-02-13 12:00</text><text x="1107.56" y="219.9" transform="rotate(-90 1107.56 219.9)" textLength="41.3" lengthAdjust="spacingAndGlyphs">2026-02-13 12:06</text><text x="1116.39" y="219.9" transform="rotate(-90 1116.39 219.9)" textLength="41.3" lengthAdjust="spacingAndGlyphs">2026-02-13 12:12</text><text x="1125.23" y="219.9" transform="rotate(-90 1125.23 219.9)" textLength="41.3" lengthAdjust="spacingAndGlyphs">2026-02-13 12:18</text><text x="1134.06" y="219.9" transform="rotate(-90 1134.06 219.9)" textLength="41.3" lengthAdjust="spacingAndGlyphs">2026-02-13 12:24</text><text x="1142.90" y="219.9" transform="rotate(-90 1142.90 219.9)" textLength="41.3" lengthAdjust="spacingAndGlyphs">2026-02-13 12:30</text><text x="1151.74" y="219.9" transform="rotate(-90 1151.74 219.9)" textLength="41.3" lengthAdjust="spacingAndGlyphs">2026-02-13 12:36</text><text x="1160.57" y="219.9" transform="rotate(-90 1160.57 219.9)" textLength="41.3" lengthAdjust="spacingAndGlyphs">2026-02-13 12:42</text><text x="1169.41" y="219.9" transform="rotate(-90 1169.41 219.9)" textLength="41.3" lengthAdjust="spacingAndGlyphs">2026-02-13 12:48</text><text x="1178.24" y="219.9" transform="rotate(-90 1178.24 219.9)" textLength="41.3" lengthAdjust="spacingAndGlyphs">2026-02-13 12:54</text><text x="1187.08" y="219.9" transform="rotate(-90 1187.08 219.9)" textLength="41.3" lengthAdjust="spacingAndGlyphs">2026-02-13 13:00</text><text x="1195.92" y="219.9" transform="rotate(-90 1195.92 219.9)" textLength="41.3" lengthAdjust="spacingAndGlyphs">2026-02-13 13:06</text><text x="1204.75" y="219.9" transform="rotate(-90 1204.75 219.9)" textLength="41.3" lengthAdjust="spacingAndGlyphs">2026-02-13 13:12</text><text x="1213.59" y="219.9" transform="rotate(-90 1213.59 219.9)" textLength="41.3" lengthAdjust="spacingAndGlyphs">2026-02-13 13:18</text><text x="1222.42" y="219.9" transform="rotate(-90 1222.42 219.9)" textLength="41.3" lengthAdjust="spacingAndGlyphs">2026-02-13 13:24</text><text x="1231.26" y="219.9" transform="rotate(-90 1231.26 219.9)" textLength="41.3" lengthAdjust="spacingAndGlyphs">2026-02-13 13:30</text><text x="1240.10" y="219.9" transform="rotate(-90 1240.10 219.9)" textLength="41.3" lengthAdjust="spacingAndGlyphs">2026-02-13 13:36</text><text x="1248.93" y="219.9" transform="rotate(-90 1248.93 219.9)" textLength="41.3" lengthAdjust="spacingAndGlyphs">2026-02-13 13:42</text><text x="1257.77" y="219.9" transform="rotate(-90 1257.77 219.9)" textLength="41.3" lengthAdjust="spacingAndGlyphs">2026-02-13 13:48</text><text x="1266.60" y="219.9" transform="rotate(-90 1266.60 219.9)" textLength="41.3" lengthAdjust="spacingAndGlyphs">2026-02-13 13:54</text><text x="1275.44" y="219.9" transform="rotate(-90 1275.44 219.9)" textLength="41.3" lengthAdjust="spacingAndGlyphs">2026-02-13 14:00</text><text x="1284.28" y="219.9" transform="rotate(-90 1284.28 219.9)" textLength="41.3" lengthAdjust="spacingAndGlyphs">2026-02-13 14:06</text><text x="1293.11" y="219.9" transform="rotate(-90 1293.11 219.9)" textLength="41.3" lengthAdjust="spacingAndGlyphs">2026-02-13 14:12</text><text x="1301.95" y="219.9" transform="rotate(-90 1301.95 219.9)" textLength="41.3" lengthAdjust="spacingAndGlyphs">2026-02-13 14:18</text><text x="1310.78" y="219.9" transform="rotate(-90 1310.78 219.9)" textLength="41.3" lengthAdjust="spacingAndGlyphs">2026-02-13 14:24</text><text x="1319.62" y="219.9" transform="rotate(-90 1319.62 219.9)" textLength="41.3" lengthAdjust="spacingAndGlyphs">2026-02-13 14:30</text><text x="1328.46" y="219.9" transform="rotate(-90 1328.46 219.9)" textLength="41.3" lengthAdjust="spacingAndGlyphs">2026-02-13 14:36</text><text x="1337.29" y="219.9" transform="rotate(-90 1337.29 219.9)" textLength="41.3" lengthAdjust="spacingAndGlyphs">2026-02-13 14:42</text><text x="1346.13" y="219.9" transform="rotate(-90 1346.13 219.9)" textLength="41.3" lengthAdjust="spacingAndGlyphs">2026-02-13 14:48</text><text x="1354.96" y="219.9" transform="rotate(-90 1354.96 219.9)" textLength="41.3" lengthAdjust="spacingAndGlyphs">2026-02-13 14:54</text><text x="1363.80" y="219.9" transform="rotate(-90 1363.80 219.9)" textLength="41.3" lengthAdjust="spacingAndGlyphs">2026-02-13 15:00</text><text x="1372.64" y="219.9" transform="rotate(-90 1372.64 219.9)" textLength="41.3" lengthAdjust="spacingAndGlyphs">2026-02-13 15:06</text><text x="1381.47" y="219.9" transform="rotate(-90 1381.47 219.9)" textLength="41.3" lengthAdjust="spacingAndGlyphs">2026-02-13 15:12</text><text x="1390.31" y="219.9" transform="rotate(-90 1390.31 219.9)" textLength="41.3" lengthAdjust="spacingAndGlyphs">2026-02-13 15:18</text><text x="1399.14" y="219.9" transform="rotate(-90 1399.14 219.9)" textLength="41.3" lengthAdjust="spacingAndGlyphs">2026-02-13 15:24</text><text x="1407.98" y="219.9" transform="rotate(-90 1407.98 219.9)" textLength="41.3" lengthAdjust="spacingAndGlyphs">2026-02-13 15:30</text><text x="1416.82" y="219.9" transform="rotate(-90 1416.82 219.9)" textLength="41.3" lengthAdjust="spacingAndGlyphs">2026-02-13 15:36</text><text x="1425.65" y="219.9" transform="rotate(-90 1425.65 219.9)" textLength="41.3" lengthAdjust="spacingAndGlyphs">2026-02-13 15:42</text><text x="1434.49" y="219.9" transform="rotate(-90 1434.49 219.9)" textLength="41.3" lengthAdjust="spacingAndGlyphs">2026-02-13 15:48</text><text x="1443.32" y="219.9" transform="rotate(-90 1443.32 219.9)" textLength="41.3" lengthAdjust="spacingAndGlyphs">2026-02-13 15:54</text><text x="1452.16" y="219.9" transform="rotate(-90 1452.16 219.9)" textLength="41.3" lengthAdjust="spacingAndGlyphs">2026-02-13 16:00</text><text x="1461.00" y="219.9" transform="rotate(-90 1461.00 219.9)" textLength="41.3" lengthAdjust="spacingAndGlyphs">2026-02-13 16:06</text><text x="1469.83" y="219.9" transform="rotate(-90 1469.83 219.9)" textLength="41.3" lengthAdjust="spacingAndGlyphs">2026-02-13 16:12</text><text x="1478.67" y="219.9" transform="rotate(-90 1478.67 219.9)" textLength="41.3" lengthAdjust="spacingAndGlyphs">2026-02-13 16:18</text><text x="1487.50" y="219.9" transform="rotate(-90 1487.50 219.9)" textLength="41.3" lengthAdjust="spacingAndGlyphs">2026-02-13 16:24</text><text x="1496.34" y="219.9" transform="rotate(-90 1496.34 219.9)" textLength="41.3" lengthAdjust="spacingAndGlyphs">2026-02-13 16:30</text><text x="1505.18" y="219.9" transform="rotate(-90 1505.18 219.9)" textLength="41.3" lengthAdjust="spacingAndGlyphs">2026-02-13 16:36</text><text x="1514.01" y="219.9" transform="rotate(-90 1514.01 219.9)" textLength="41.3" lengthAdjust="spacingAndGlyphs">2026-02-13 16:42</text><text x="1522.85" y="219.9" transform="rotate(-90 1522.85 219.9)" textLength="41.3" lengthAdjust="spacingAndGlyphs">2026-02-13 16:48</text><text x="1531.68" y="219.9" transform="rotate(-90 1531.68 219.9)" textLength="41.3" lengthAdjust="spacingAndGlyphs">2026-02-13 16:54</text><text x="1540.52" y="219.9" transform="rotate(-90 1540.52 219.9)" textLength="41.3" lengthAdjust="spacingAndGlyphs">2026-02-13 17:00</text><text x="1549.36" y="219.9" transform="rotate(-90 1549.36 219.9)" textLength="41.3" lengthAdjust="spacingAndGlyphs">2026-02-13 17:06</text><text x="1558.19" y="219.9" transform="rotate(-90 1558.19 219.9)" textLength="41.3" lengthAdjust="spacingAndGlyphs">2026-02-13 17:12</text></g><text x="1565.50" y="186.70" font-size="6.4" fill="#3a3ae0" fill-opacity="0.9" text-anchor="start" textLength="13.5" lengthAdjust="spacingAndGlyphs">Time</text><rect x="37.0" y="222.7" width="4" height="2.9" fill="#c0c0c0"/><text x="42.20" y="225.60" font-size="4.6" fill="#2020c0" fill-opacity="0.9" text-anchor="start" font-weight="bold">TIMEOUT</text><rect x="74.0" y="222.7" width="4" height="2.9" fill="#ff8000"/><text x="79.20" y="225.60" font-size="4.6" fill="#2020c0" fill-opacity="0.9" text-anchor="start" font-weight="bold">IPC</text><rect x="116.5" y="222.7" width="4" height="2.9" fill="#00ffff"/><text x="121.70" y="225.60" font-size="4.6" fill="#2020c0" fill-opacity="0.9" text-anchor="start" font-weight="bold">CLIENT</text><rect x="159.0" y="222.7" width="4" height="2.9" fill="#006400"/><text x="164.20" y="225.60" font-size="4.6" fill="#2020c0" fill-opacity="0.9" text-anchor="start" font-weight="bold">CPU</text><rect x="37.0" y="227.9" width="4" height="2.9" fill="#ff0000"/><text x="42.20" y="230.75" font-size="4.6" fill="#2020c0" fill-opacity="0.9" text-anchor="start" font-weight="bold">LWLOCK</text><rect x="74.0" y="227.9" width="4" height="2.9" fill="#000060"/><text x="79.20" y="230.75" font-size="4.6" fill="#2020c0" fill-opacity="0.9" text-anchor="start" font-weight="bold">IO</text><rect x="116.5" y="227.9" width="4" height="2.9" fill="#ff69b4"/><text x="121.70" y="230.75" font-size="4.6" fill="#2020c0" fill-opacity="0.9" text-anchor="start" font-weight="bold">BUFFPIN</text><rect x="37.0" y="233.0" width="4" height="2.9" fill="#6a0000"/><text x="42.20" y="235.90" font-size="4.6" fill="#2020c0" fill-opacity="0.9" text-anchor="start" font-weight="bold">LOCK</text><rect x="74.0" y="233.0" width="4" height="2.9" fill="#8080ff"/><text x="79.20" y="235.90" font-size="4.6" fill="#2020c0" fill-opacity="0.9" text-anchor="start" font-weight="bold">EXTENSION</text><rect x="116.5" y="233.0" width="4" height="2.9" fill="#00ff00"/><text x="121.70" y="235.90" font-size="4.6" fill="#2020c0" fill-opacity="0.9" text-anchor="start" font-weight="bold">BGACTIVE</text><text x="629.30" y="245.20" font-size="5.9" fill="#0000b0" fill-opacity="0.95" text-anchor="start" font-weight="bold" textLength="329.5" lengthAdjust="spacingAndGlyphs">Top activity for SAH on DB 'crypta' from 2026-02-13 00:00:00 to 2026-02-13 23:59:59</text><text x="1493.00" y="251.70" font-size="4.9" fill="#1010a0" fill-opacity="0.85" text-anchor="start" font-weight="bold" textLength="94" lengthAdjust="spacingAndGlyphs">(C)1974 - 2026, Sergey S. Belonin</text></svg></div>
<div style="left:301px;top:533px;width:790px;height:600px;border:1px solid #000080;z-index:4;"></div>
<div style="left:1097px;top:533px;width:789px;height:600px;border:1px solid #000080;z-index:4;"></div>
<div style="left:304px;top:536px;width:244px;height:18px;border:1px solid;border-color:#4d4d4d #b4b4b4 #b4b4b4 #4d4d4d;z-index:5;"></div>
<span class="t" style="left:384.85px;top:538.12px;font-size:11.2px;color:#111111;line-height:16px;letter-spacing:-0.100px;z-index:6;">SA Activity Query</span>
<div style="left:552px;top:536px;width:62px;height:18px;border:1px solid;border-color:#4d4d4d #b4b4b4 #b4b4b4 #4d4d4d;z-index:5;"></div>
<span class="t" style="left:579.02px;top:538.12px;font-size:11.2px;color:#111111;line-height:16px;letter-spacing:-0.100px;z-index:6;">%</span>
<div style="left:618px;top:536px;width:179px;height:18px;border:1px solid;border-color:#4d4d4d #b4b4b4 #b4b4b4 #4d4d4d;z-index:5;"></div>
<span class="t" style="left:656.58px;top:538.12px;font-size:11.2px;color:#111111;line-height:16px;letter-spacing:-0.100px;z-index:6;">Query ID [plan count]</span>
<div style="left:801px;top:536px;width:288px;height:18px;border:1px solid;border-color:#4d4d4d #b4b4b4 #b4b4b4 #4d4d4d;z-index:5;"></div>
<span class="t" style="left:930.95px;top:538.12px;font-size:11.2px;color:#111111;line-height:16px;letter-spacing:-0.100px;z-index:6;">Query</span>
<div style="left:1099px;top:536px;width:278px;height:18px;border:1px solid;border-color:#4d4d4d #b4b4b4 #b4b4b4 #4d4d4d;z-index:5;"></div>
<span class="t" style="left:1192.28px;top:538.12px;font-size:11.2px;color:#111111;line-height:16px;letter-spacing:-0.100px;z-index:6;">SA Activity Session</span>
<div style="left:1381px;top:536px;width:60px;height:18px;border:1px solid;border-color:#4d4d4d #b4b4b4 #b4b4b4 #4d4d4d;z-index:5;"></div>
<span class="t" style="left:1407.02px;top:538.12px;font-size:11.2px;color:#111111;line-height:16px;letter-spacing:-0.100px;z-index:6;">%</span>
<div style="left:1445px;top:536px;width:93px;height:18px;border:1px solid;border-color:#4d4d4d #b4b4b4 #b4b4b4 #4d4d4d;z-index:5;"></div>
<span class="t" style="left:1465.57px;top:538.12px;font-size:11.2px;color:#111111;line-height:16px;letter-spacing:-0.100px;z-index:6;">Process ID</span>
<div style="left:1542px;top:536px;width:98px;height:18px;border:1px solid;border-color:#4d4d4d #b4b4b4 #b4b4b4 #4d4d4d;z-index:5;"></div>
<span class="t" style="left:1566.52px;top:538.12px;font-size:11.2px;color:#111111;line-height:16px;letter-spacing:-0.100px;z-index:6;">Username</span>
<div style="left:1644px;top:536px;width:240px;height:18px;border:1px solid;border-color:#4d4d4d #b4b4b4 #b4b4b4 #4d4d4d;z-index:5;"></div>
<span class="t" style="left:1738.10px;top:538.12px;font-size:11.2px;color:#111111;line-height:16px;letter-spacing:-0.100px;z-index:6;">Application</span>
<div style="left:304px;top:557px;width:244px;height:18px;border:1px solid;border-color:#4d4d4d #b4b4b4 #b4b4b4 #4d4d4d;z-index:5;"></div>
<div style="left:552px;top:557px;width:62px;height:18px;border:1px solid;border-color:#4d4d4d #b4b4b4 #b4b4b4 #4d4d4d;z-index:5;"></div>
<div style="left:618px;top:557px;width:179px;height:18px;border:1px solid;border-color:#4d4d4d #b4b4b4 #b4b4b4 #4d4d4d;z-index:5;"></div>
<div style="left:801px;top:557px;width:288px;height:18px;border:1px solid;border-color:#4d4d4d #b4b4b4 #b4b4b4 #4d4d4d;z-index:5;"></div>
<div style="left:306px;top:559px;width:18px;height:16px;background:#006400;z-index:6;"></div>
<div style="left:324px;top:559px;width:42px;height:16px;background:#00ff00;z-index:6;"></div>
<div style="left:366px;top:559px;width:16px;height:16px;background:#00ffff;z-index:6;"></div>
<div style="left:382px;top:559px;width:13px;height:16px;background:#6a5acd;z-index:6;"></div>
<div style="left:395px;top:559px;width:3px;height:16px;background:#000080;z-index:6;"></div>
<div style="left:398px;top:559px;width:3px;height:16px;background:#ff0000;z-index:6;"></div>
<span class="t" style="left:574.11px;top:559.12px;font-size:11.2px;color:#111111;line-height:16px;letter-spacing:-0.100px;z-index:6;">58.7053</span>
<span class="t" style="left:803.50px;top:559.12px;font-size:11.2px;color:#111111;line-height:16px;letter-spacing:-0.013px;z-index:6;">не определяется / фоновые ...</span>
<div style="left:304px;top:578px;width:244px;height:18px;border:1px solid;border-color:#4d4d4d #b4b4b4 #b4b4b4 #4d4d4d;z-index:5;"></div>
<div style="left:552px;top:578px;width:62px;height:18px;border:1px solid;border-color:#4d4d4d #b4b4b4 #b4b4b4 #4d4d4d;z-index:5;"></div>
<div style="left:618px;top:578px;width:179px;height:18px;border:1px solid;border-color:#4d4d4d #b4b4b4 #b4b4b4 #4d4d4d;z-index:5;"></div>
<div style="left:801px;top:578px;width:288px;height:18px;border:1px solid;border-color:#4d4d4d #b4b4b4 #b4b4b4 #4d4d4d;z-index:5;"></div>
<div style="left:306px;top:580px;width:3px;height:16px;background:#006400;z-index:6;"></div>
<div style="left:309px;top:580px;width:6px;height:16px;background:#00ff00;z-index:6;"></div>
<div style="left:315px;top:580px;width:3px;height:16px;background:#00ffff;z-index:6;"></div>
<div style="left:318px;top:580px;width:3px;height:16px;background:#6a5acd;z-index:6;"></div>
<div style="left:321px;top:580px;width:3px;height:16px;background:#000080;z-index:6;"></div>
<div style="left:324px;top:580px;width:3px;height:16px;background:#ff0000;z-index:6;"></div>
<span class="t" style="left:580.24px;top:580.12px;font-size:11.2px;color:#111111;line-height:16px;letter-spacing:-0.100px;z-index:6;">9.3619</span>
<span class="t" style="left:619.50px;top:580.12px;font-size:11.2px;color:#000080;line-height:16px;letter-spacing:-0.255px;z-index:6;">6908150759079621664</span>
<span class="t" style="left:803.50px;top:580.12px;font-size:11.2px;color:#111111;line-height:16px;letter-spacing:-0.122px;z-index:6;">CALL bestat_fill_sa_history(10 ...</span>
<div style="left:304px;top:599px;width:244px;height:18px;border:1px solid;border-color:#4d4d4d #b4b4b4 #b4b4b4 #4d4d4d;z-index:5;"></div>
<div style="left:552px;top:599px;width:62px;height:18px;border:1px solid;border-color:#4d4d4d #b4b4b4 #b4b4b4 #4d4d4d;z-index:5;"></div>
<div style="left:618px;top:599px;width:179px;height:18px;border:1px solid;border-color:#4d4d4d #b4b4b4 #b4b4b4 #4d4d4d;z-index:5;"></div>
<div style="left:801px;top:599px;width:288px;height:18px;border:1px solid;border-color:#4d4d4d #b4b4b4 #b4b4b4 #4d4d4d;z-index:5;"></div>
<div style="left:306px;top:601px;width:3px;height:16px;background:#006400;z-index:6;"></div>
<div style="left:309px;top:601px;width:6px;height:16px;background:#00ff00;z-index:6;"></div>
<div style="left:315px;top:601px;width:3px;height:16px;background:#00ffff;z-index:6;"></div>
<div style="left:318px;top:601px;width:3px;height:16px;background:#6a5acd;z-index:6;"></div>
<div style="left:321px;top:601px;width:3px;height:16px;background:#000080;z-index:6;"></div>
<div style="left:324px;top:601px;width:3px;height:16px;background:#ff0000;z-index:6;"></div>
<span class="t" style="left:580.24px;top:601.12px;font-size:11.2px;color:#111111;line-height:16px;letter-spacing:-0.100px;z-index:6;">9.3619</span>
<span class="t" style="left:619.50px;top:601.12px;font-size:11.2px;color:#000080;line-height:16px;letter-spacing:-0.282px;z-index:6;">-764725934477184451</span>
<span class="t" style="left:803.50px;top:601.12px;font-size:11.2px;color:#111111;line-height:16px;letter-spacing:0.093px;z-index:6;">update cron.job_run_details se ...</span>
<div style="left:304px;top:621px;width:244px;height:18px;border:1px solid;border-color:#4d4d4d #b4b4b4 #b4b4b4 #4d4d4d;z-index:5;"></div>
<div style="left:552px;top:621px;width:62px;height:18px;border:1px solid;border-color:#4d4d4d #b4b4b4 #b4b4b4 #4d4d4d;z-index:5;"></div>
<div style="left:618px;top:621px;width:179px;height:18px;border:1px solid;border-color:#4d4d4d #b4b4b4 #b4b4b4 #4d4d4d;z-index:5;"></div>
<div style="left:801px;top:621px;width:288px;height:18px;border:1px solid;border-color:#4d4d4d #b4b4b4 #b4b4b4 #4d4d4d;z-index:5;"></div>
<div style="left:306px;top:623px;width:3px;height:16px;background:#006400;z-index:6;"></div>
<div style="left:309px;top:623px;width:3px;height:16px;background:#00ff00;z-index:6;"></div>
<div style="left:312px;top:623px;width:3px;height:16px;background:#00ffff;z-index:6;"></div>
<div style="left:315px;top:623px;width:3px;height:16px;background:#6a5acd;z-index:6;"></div>
<div style="left:318px;top:623px;width:3px;height:16px;background:#000080;z-index:6;"></div>
<span class="t" style="left:580.24px;top:623.12px;font-size:11.2px;color:#111111;line-height:16px;letter-spacing:-0.100px;z-index:6;">4.5262</span>
<span class="t" style="left:619.50px;top:623.12px;font-size:11.2px;color:#000080;line-height:16px;letter-spacing:-0.255px;z-index:6;">2960637733201299609</span>
<span class="t" style="left:803.50px;top:623.12px;font-size:11.2px;color:#111111;line-height:16px;letter-spacing:-0.129px;z-index:6;">CALL bestat_fill_ws_history() ...</span>
<div style="left:304px;top:642px;width:244px;height:18px;border:1px solid;border-color:#4d4d4d #b4b4b4 #b4b4b4 #4d4d4d;z-index:5;"></div>
<div style="left:552px;top:642px;width:62px;height:18px;border:1px solid;border-color:#4d4d4d #b4b4b4 #b4b4b4 #4d4d4d;z-index:5;"></div>
<div style="left:618px;top:642px;width:179px;height:18px;border:1px solid;border-color:#4d4d4d #b4b4b4 #b4b4b4 #4d4d4d;z-index:5;"></div>
<div style="left:801px;top:642px;width:288px;height:18px;border:1px solid;border-color:#4d4d4d #b4b4b4 #b4b4b4 #4d4d4d;z-index:5;"></div>
<div style="left:306px;top:644px;width:3px;height:16px;background:#006400;z-index:6;"></div>
<div style="left:309px;top:644px;width:3px;height:16px;background:#00ff00;z-index:6;"></div>
<div style="left:312px;top:644px;width:3px;height:16px;background:#00ffff;z-index:6;"></div>
<div style="left:315px;top:644px;width:3px;height:16px;background:#6a5acd;z-index:6;"></div>
<span class="t" style="left:580.24px;top:644.12px;font-size:11.2px;color:#111111;line-height:16px;letter-spacing:-0.100px;z-index:6;">2.5518</span>
<span class="t" style="left:619.50px;top:644.12px;font-size:11.2px;color:#000080;line-height:16px;letter-spacing:-0.255px;z-index:6;">5649502083122642103</span>
<span class="t" style="left:803.50px;top:644.12px;font-size:11.2px;color:#111111;line-height:16px;letter-spacing:-0.162px;z-index:6;">SHOW search_path ...</span>
<div style="left:304px;top:663px;width:244px;height:18px;border:1px solid;border-color:#4d4d4d #b4b4b4 #b4b4b4 #4d4d4d;z-index:5;"></div>
<div style="left:552px;top:663px;width:62px;height:18px;border:1px solid;border-color:#4d4d4d #b4b4b4 #b4b4b4 #4d4d4d;z-index:5;"></div>
<div style="left:618px;top:663px;width:179px;height:18px;border:1px solid;border-color:#4d4d4d #b4b4b4 #b4b4b4 #4d4d4d;z-index:5;"></div>
<div style="left:801px;top:663px;width:288px;height:18px;border:1px solid;border-color:#4d4d4d #b4b4b4 #b4b4b4 #4d4d4d;z-index:5;"></div>
<div style="left:306px;top:665px;width:3px;height:16px;background:#006400;z-index:6;"></div>
<div style="left:309px;top:665px;width:3px;height:16px;background:#00ff00;z-index:6;"></div>
<div style="left:312px;top:665px;width:3px;height:16px;background:#00ffff;z-index:6;"></div>
<div style="left:315px;top:665px;width:3px;height:16px;background:#6a5acd;z-index:6;"></div>
<span class="t" style="left:580.24px;top:665.12px;font-size:11.2px;color:#111111;line-height:16px;letter-spacing:-0.100px;z-index:6;">2.4613</span>
<span class="t" style="left:619.50px;top:665.12px;font-size:11.2px;color:#000080;line-height:16px;letter-spacing:-0.279px;z-index:6;">-4075257336654298222</span>
<span class="t" style="left:803.50px;top:665.12px;font-size:11.2px;color:#111111;line-height:16px;letter-spacing:-0.076px;z-index:6;">SELECT c.oid,c.*,d.description ...</span>
<div style="left:304px;top:684px;width:244px;height:18px;border:1px solid;border-color:#4d4d4d #b4b4b4 #b4b4b4 #4d4d4d;z-index:5;"></div>
<div style="left:552px;top:684px;width:62px;height:18px;border:1px solid;border-color:#4d4d4d #b4b4b4 #b4b4b4 #4d4d4d;z-index:5;"></div>
<div style="left:618px;top:684px;width:179px;height:18px;border:1px solid;border-color:#4d4d4d #b4b4b4 #b4b4b4 #4d4d4d;z-index:5;"></div>
<div style="left:801px;top:684px;width:288px;height:18px;border:1px solid;border-color:#4d4d4d #b4b4b4 #b4b4b4 #4d4d4d;z-index:5;"></div>
<div style="left:306px;top:686px;width:3px;height:16px;background:#006400;z-index:6;"></div>
<div style="left:309px;top:686px;width:3px;height:16px;background:#00ff00;z-index:6;"></div>
<div style="left:312px;top:686px;width:3px;height:16px;background:#00ffff;z-index:6;"></div>
<div style="left:315px;top:686px;width:3px;height:16px;background:#6a5acd;z-index:6;"></div>
<span class="t" style="left:580.24px;top:686.12px;font-size:11.2px;color:#111111;line-height:16px;letter-spacing:-0.100px;z-index:6;">2.3159</span>
<span class="t" style="left:619.50px;top:686.12px;font-size:11.2px;color:#000080;line-height:16px;letter-spacing:-0.255px;z-index:6;">192481950402364172</span>
<span class="t" style="left:803.50px;top:686.12px;font-size:11.2px;color:#111111;line-height:16px;letter-spacing:-0.156px;z-index:6;">select TO_CHAR(src2.sampling_t ...</span>
<div style="left:304px;top:706px;width:244px;height:18px;border:1px solid;border-color:#4d4d4d #b4b4b4 #b4b4b4 #4d4d4d;z-index:5;"></div>
<div style="left:552px;top:706px;width:62px;height:18px;border:1px solid;border-color:#4d4d4d #b4b4b4 #b4b4b4 #4d4d4d;z-index:5;"></div>
<div style="left:618px;top:706px;width:179px;height:18px;border:1px solid;border-color:#4d4d4d #b4b4b4 #b4b4b4 #4d4d4d;z-index:5;"></div>
<div style="left:801px;top:706px;width:288px;height:18px;border:1px solid;border-color:#4d4d4d #b4b4b4 #b4b4b4 #4d4d4d;z-index:5;"></div>
<div style="left:306px;top:708px;width:3px;height:16px;background:#006400;z-index:6;"></div>
<div style="left:309px;top:708px;width:3px;height:16px;background:#00ff00;z-index:6;"></div>
<div style="left:312px;top:708px;width:3px;height:16px;background:#00ffff;z-index:6;"></div>
<div style="left:315px;top:708px;width:3px;height:16px;background:#6a5acd;z-index:6;"></div>
<span class="t" style="left:580.24px;top:708.12px;font-size:11.2px;color:#111111;line-height:16px;letter-spacing:-0.100px;z-index:6;">2.2638</span>
<span class="t" style="left:619.50px;top:708.12px;font-size:11.2px;color:#000080;line-height:16px;letter-spacing:-0.279px;z-index:6;">-3158728741260102782</span>
<span class="t" style="left:803.50px;top:708.12px;font-size:11.2px;color:#111111;line-height:16px;letter-spacing:-0.103px;z-index:6;">SELECT typinput=$2::regproc as ...</span>
<div style="left:304px;top:727px;width:244px;height:18px;border:1px solid;border-color:#4d4d4d #b4b4b4 #b4b4b4 #4d4d4d;z-index:5;"></div>
<div style="left:552px;top:727px;width:62px;height:18px;border:1px solid;border-color:#4d4d4d #b4b4b4 #b4b4b4 #4d4d4d;z-index:5;"></div>
<div style="left:618px;top:727px;width:179px;height:18px;border:1px solid;border-color:#4d4d4d #b4b4b4 #b4b4b4 #4d4d4d;z-index:5;"></div>
<div style="left:801px;top:727px;width:288px;height:18px;border:1px solid;border-color:#4d4d4d #b4b4b4 #b4b4b4 #4d4d4d;z-index:5;"></div>
<div style="left:306px;top:729px;width:3px;height:16px;background:#006400;z-index:6;"></div>
<div style="left:309px;top:729px;width:3px;height:16px;background:#00ff00;z-index:6;"></div>
<div style="left:312px;top:729px;width:3px;height:16px;background:#00ffff;z-index:6;"></div>
<div style="left:315px;top:729px;width:3px;height:16px;background:#6a5acd;z-index:6;"></div>
<span class="t" style="left:580.24px;top:729.12px;font-size:11.2px;color:#111111;line-height:16px;letter-spacing:-0.100px;z-index:6;">2.2076</span>
<span class="t" style="left:619.50px;top:729.12px;font-size:11.2px;color:#000080;line-height:16px;letter-spacing:-0.255px;z-index:6;">2990523731906939198</span>
<span class="t" style="left:803.50px;top:729.12px;font-size:11.2px;color:#111111;line-height:16px;letter-spacing:-0.312px;z-index:6;">SELECT DISTINCT connamespace F ...</span>
<div style="left:304px;top:748px;width:244px;height:18px;border:1px solid;border-color:#4d4d4d #b4b4b4 #b4b4b4 #4d4d4d;z-index:5;"></div>
<div style="left:552px;top:748px;width:62px;height:18px;border:1px solid;border-color:#4d4d4d #b4b4b4 #b4b4b4 #4d4d4d;z-index:5;"></div>
<div style="left:618px;top:748px;width:179px;height:18px;border:1px solid;border-color:#4d4d4d #b4b4b4 #b4b4b4 #4d4d4d;z-index:5;"></div>
<div style="left:801px;top:748px;width:288px;height:18px;border:1px solid;border-color:#4d4d4d #b4b4b4 #b4b4b4 #4d4d4d;z-index:5;"></div>
<div style="left:306px;top:750px;width:3px;height:16px;background:#006400;z-index:6;"></div>
<div style="left:309px;top:750px;width:3px;height:16px;background:#00ff00;z-index:6;"></div>
<div style="left:312px;top:750px;width:3px;height:16px;background:#00ffff;z-index:6;"></div>
<div style="left:315px;top:750px;width:3px;height:16px;background:#6a5acd;z-index:6;"></div>
<span class="t" style="left:580.24px;top:750.12px;font-size:11.2px;color:#111111;line-height:16px;letter-spacing:-0.100px;z-index:6;">1.2930</span>
<span class="t" style="left:619.50px;top:750.12px;font-size:11.2px;color:#000080;line-height:16px;letter-spacing:-0.279px;z-index:6;">-2174463438344057320</span>
<span class="t" style="left:803.50px;top:750.12px;font-size:11.2px;color:#111111;line-height:16px;letter-spacing:0.099px;z-index:6;">select src2.sampling_time::tim ...</span>
<div style="left:304px;top:769px;width:244px;height:18px;border:1px solid;border-color:#4d4d4d #b4b4b4 #b4b4b4 #4d4d4d;z-index:5;"></div>
<div style="left:552px;top:769px;width:62px;height:18px;border:1px solid;border-color:#4d4d4d #b4b4b4 #b4b4b4 #4d4d4d;z-index:5;"></div>
<div style="left:618px;top:769px;width:179px;height:18px;border:1px solid;border-color:#4d4d4d #b4b4b4 #b4b4b4 #4d4d4d;z-index:5;"></div>
<div style="left:801px;top:769px;width:288px;height:18px;border:1px solid;border-color:#4d4d4d #b4b4b4 #b4b4b4 #4d4d4d;z-index:5;"></div>
<div style="left:306px;top:771px;width:3px;height:16px;background:#006400;z-index:6;"></div>
<div style="left:309px;top:771px;width:3px;height:16px;background:#00ff00;z-index:6;"></div>
<div style="left:312px;top:771px;width:3px;height:16px;background:#00ffff;z-index:6;"></div>
<div style="left:315px;top:771px;width:3px;height:16px;background:#6a5acd;z-index:6;"></div>
<span class="t" style="left:580.24px;top:771.12px;font-size:11.2px;color:#111111;line-height:16px;letter-spacing:-0.100px;z-index:6;">1.1600</span>
<span class="t" style="left:619.50px;top:771.12px;font-size:11.2px;color:#000080;line-height:16px;letter-spacing:-0.279px;z-index:6;">-8832529039217202186</span>
<span class="t" style="left:803.50px;top:771.12px;font-size:11.2px;color:#111111;line-height:16px;letter-spacing:0.099px;z-index:6;">select src2.sampling_time::tim ...</span>
<div style="left:304px;top:790px;width:244px;height:18px;border:1px solid;border-color:#4d4d4d #b4b4b4 #b4b4b4 #4d4d4d;z-index:5;"></div>
<div style="left:552px;top:790px;width:62px;height:18px;border:1px solid;border-color:#4d4d4d #b4b4b4 #b4b4b4 #4d4d4d;z-index:5;"></div>
<div style="left:618px;top:790px;width:179px;height:18px;border:1px solid;border-color:#4d4d4d #b4b4b4 #b4b4b4 #4d4d4d;z-index:5;"></div>
<div style="left:801px;top:790px;width:288px;height:18px;border:1px solid;border-color:#4d4d4d #b4b4b4 #b4b4b4 #4d4d4d;z-index:5;"></div>
<div style="left:306px;top:792px;width:3px;height:16px;background:#006400;z-index:6;"></div>
<div style="left:309px;top:792px;width:3px;height:16px;background:#00ff00;z-index:6;"></div>
<div style="left:312px;top:792px;width:3px;height:16px;background:#00ffff;z-index:6;"></div>
<div style="left:315px;top:792px;width:3px;height:16px;background:#6a5acd;z-index:6;"></div>
<span class="t" style="left:580.24px;top:792.12px;font-size:11.2px;color:#111111;line-height:16px;letter-spacing:-0.100px;z-index:6;">0.7295</span>
<span class="t" style="left:619.50px;top:792.12px;font-size:11.2px;color:#000080;line-height:16px;letter-spacing:-0.212px;z-index:6;">7270075911739513747</span>
<span class="t" style="left:803.50px;top:792.12px;font-size:11.2px;color:#111111;line-height:16px;letter-spacing:-0.065px;z-index:6;">delete from crcomp_pair_OHLC_1 ...</span>
<div style="left:304px;top:812px;width:244px;height:18px;border:1px solid;border-color:#4d4d4d #b4b4b4 #b4b4b4 #4d4d4d;z-index:5;"></div>
<div style="left:552px;top:812px;width:62px;height:18px;border:1px solid;border-color:#4d4d4d #b4b4b4 #b4b4b4 #4d4d4d;z-index:5;"></div>
<div style="left:618px;top:812px;width:179px;height:18px;border:1px solid;border-color:#4d4d4d #b4b4b4 #b4b4b4 #4d4d4d;z-index:5;"></div>
<div style="left:801px;top:812px;width:288px;height:18px;border:1px solid;border-color:#4d4d4d #b4b4b4 #b4b4b4 #4d4d4d;z-index:5;"></div>
<div style="left:306px;top:814px;width:3px;height:16px;background:#006400;z-index:6;"></div>
<div style="left:309px;top:814px;width:3px;height:16px;background:#00ff00;z-index:6;"></div>
<div style="left:312px;top:814px;width:3px;height:16px;background:#00ffff;z-index:6;"></div>
<div style="left:315px;top:814px;width:3px;height:16px;background:#6a5acd;z-index:6;"></div>
<span class="t" style="left:580.24px;top:814.12px;font-size:11.2px;color:#111111;line-height:16px;letter-spacing:-0.100px;z-index:6;">0.5320</span>
<span class="t" style="left:619.50px;top:814.12px;font-size:11.2px;color:#000080;line-height:16px;letter-spacing:-0.279px;z-index:6;">-8628637851627557264</span>
<span class="t" style="left:803.50px;top:814.12px;font-size:11.2px;color:#111111;line-height:16px;letter-spacing:0.046px;z-index:6;">select count(*) from bestat_sa ...</span>
<div style="left:304px;top:833px;width:244px;height:18px;border:1px solid;border-color:#4d4d4d #b4b4b4 #b4b4b4 #4d4d4d;z-index:5;"></div>
<div style="left:552px;top:833px;width:62px;height:18px;border:1px solid;border-color:#4d4d4d #b4b4b4 #b4b4b4 #4d4d4d;z-index:5;"></div>
<div style="left:618px;top:833px;width:179px;height:18px;border:1px solid;border-color:#4d4d4d #b4b4b4 #b4b4b4 #4d4d4d;z-index:5;"></div>
<div style="left:801px;top:833px;width:288px;height:18px;border:1px solid;border-color:#4d4d4d #b4b4b4 #b4b4b4 #4d4d4d;z-index:5;"></div>
<div style="left:306px;top:835px;width:3px;height:16px;background:#006400;z-index:6;"></div>
<div style="left:309px;top:835px;width:3px;height:16px;background:#00ff00;z-index:6;"></div>
<div style="left:312px;top:835px;width:3px;height:16px;background:#00ffff;z-index:6;"></div>
<div style="left:315px;top:835px;width:3px;height:16px;background:#6a5acd;z-index:6;"></div>
<span class="t" style="left:580.24px;top:835.12px;font-size:11.2px;color:#111111;line-height:16px;letter-spacing:-0.100px;z-index:6;">0.4552</span>
<span class="t" style="left:619.50px;top:835.12px;font-size:11.2px;color:#000080;line-height:16px;letter-spacing:-0.279px;z-index:6;">-9155894095039962063</span>
<span class="t" style="left:803.50px;top:835.12px;font-size:11.2px;color:#111111;line-height:16px;letter-spacing:-0.085px;z-index:6;">select fn_fill_crcomp_1M_ohlc_ ...</span>
<div style="left:304px;top:854px;width:244px;height:18px;border:1px solid;border-color:#4d4d4d #b4b4b4 #b4b4b4 #4d4d4d;z-index:5;"></div>
<div style="left:552px;top:854px;width:62px;height:18px;border:1px solid;border-color:#4d4d4d #b4b4b4 #b4b4b4 #4d4d4d;z-index:5;"></div>
<div style="left:618px;top:854px;width:179px;height:18px;border:1px solid;border-color:#4d4d4d #b4b4b4 #b4b4b4 #4d4d4d;z-index:5;"></div>
<div style="left:801px;top:854px;width:288px;height:18px;border:1px solid;border-color:#4d4d4d #b4b4b4 #b4b4b4 #4d4d4d;z-index:5;"></div>
<div style="left:306px;top:856px;width:3px;height:16px;background:#006400;z-index:6;"></div>
<div style="left:309px;top:856px;width:3px;height:16px;background:#00ff00;z-index:6;"></div>
<div style="left:312px;top:856px;width:3px;height:16px;background:#00ffff;z-index:6;"></div>
<div style="left:315px;top:856px;width:3px;height:16px;background:#6a5acd;z-index:6;"></div>
<span class="t" style="left:580.24px;top:856.12px;font-size:11.2px;color:#111111;line-height:16px;letter-spacing:-0.100px;z-index:6;">0.3949</span>
<span class="t" style="left:619.50px;top:856.12px;font-size:11.2px;color:#000080;line-height:16px;letter-spacing:-0.279px;z-index:6;">-6864656328710177916</span>
<span class="t" style="left:803.50px;top:856.12px;font-size:11.2px;color:#111111;line-height:16px;letter-spacing:-0.156px;z-index:6;">select TO_CHAR(src2.sampling_t ...</span>
<div style="left:304px;top:875px;width:244px;height:18px;border:1px solid;border-color:#4d4d4d #b4b4b4 #b4b4b4 #4d4d4d;z-index:5;"></div>
<div style="left:552px;top:875px;width:62px;height:18px;border:1px solid;border-color:#4d4d4d #b4b4b4 #b4b4b4 #4d4d4d;z-index:5;"></div>
<div style="left:618px;top:875px;width:179px;height:18px;border:1px solid;border-color:#4d4d4d #b4b4b4 #b4b4b4 #4d4d4d;z-index:5;"></div>
<div style="left:801px;top:875px;width:288px;height:18px;border:1px solid;border-color:#4d4d4d #b4b4b4 #b4b4b4 #4d4d4d;z-index:5;"></div>
<div style="left:306px;top:877px;width:3px;height:16px;background:#006400;z-index:6;"></div>
<div style="left:309px;top:877px;width:3px;height:16px;background:#00ff00;z-index:6;"></div>
<div style="left:312px;top:877px;width:3px;height:16px;background:#00ffff;z-index:6;"></div>
<span class="t" style="left:580.24px;top:877.12px;font-size:11.2px;color:#111111;line-height:16px;letter-spacing:-0.100px;z-index:6;">0.3469</span>
<span class="t" style="left:619.50px;top:877.12px;font-size:11.2px;color:#000080;line-height:16px;letter-spacing:-0.255px;z-index:6;">3212161022593177372</span>
<span class="t" style="left:803.50px;top:877.12px;font-size:11.2px;color:#111111;line-height:16px;letter-spacing:-0.085px;z-index:6;">select fn_fill_crcomp_1M_ohlc( ...</span>
<div style="left:1099px;top:557px;width:278px;height:18px;border:1px solid;border-color:#4d4d4d #b4b4b4 #b4b4b4 #4d4d4d;z-index:5;"></div>
<div style="left:1381px;top:557px;width:60px;height:18px;border:1px solid;border-color:#4d4d4d #b4b4b4 #b4b4b4 #4d4d4d;z-index:5;"></div>
<div style="left:1445px;top:557px;width:93px;height:18px;border:1px solid;border-color:#4d4d4d #b4b4b4 #b4b4b4 #4d4d4d;z-index:5;"></div>
<div style="left:1542px;top:557px;width:98px;height:18px;border:1px solid;border-color:#4d4d4d #b4b4b4 #b4b4b4 #4d4d4d;z-index:5;"></div>
<div style="left:1644px;top:557px;width:240px;height:18px;border:1px solid;border-color:#4d4d4d #b4b4b4 #b4b4b4 #4d4d4d;z-index:5;"></div>
<div style="left:1101px;top:559px;width:3px;height:16px;background:#006400;z-index:6;"></div>
<div style="left:1104px;top:559px;width:6px;height:16px;background:#00ff00;z-index:6;"></div>
<div style="left:1110px;top:559px;width:3px;height:16px;background:#00ffff;z-index:6;"></div>
<div style="left:1113px;top:559px;width:3px;height:16px;background:#6a5acd;z-index:6;"></div>
<div style="left:1116px;top:559px;width:3px;height:16px;background:#000080;z-index:6;"></div>
<div style="left:1119px;top:559px;width:3px;height:16px;background:#ff0000;z-index:6;"></div>
<span class="t" style="left:1382.30px;top:559.12px;font-size:11.2px;color:#111111;line-height:16px;letter-spacing:-0.109px;z-index:6;">9.3600</span>
<span class="t" style="left:1447.50px;top:559.12px;font-size:11.2px;color:#000080;line-height:16px;letter-spacing:-0.289px;z-index:6;">20079</span>
<div style="left:1099px;top:578px;width:278px;height:18px;border:1px solid;border-color:#4d4d4d #b4b4b4 #b4b4b4 #4d4d4d;z-index:5;"></div>
<div style="left:1381px;top:578px;width:60px;height:18px;border:1px solid;border-color:#4d4d4d #b4b4b4 #b4b4b4 #4d4d4d;z-index:5;"></div>
<div style="left:1445px;top:578px;width:93px;height:18px;border:1px solid;border-color:#4d4d4d #b4b4b4 #b4b4b4 #4d4d4d;z-index:5;"></div>
<div style="left:1542px;top:578px;width:98px;height:18px;border:1px solid;border-color:#4d4d4d #b4b4b4 #b4b4b4 #4d4d4d;z-index:5;"></div>
<div style="left:1644px;top:578px;width:240px;height:18px;border:1px solid;border-color:#4d4d4d #b4b4b4 #b4b4b4 #4d4d4d;z-index:5;"></div>
<div style="left:1101px;top:580px;width:3px;height:16px;background:#006400;z-index:6;"></div>
<div style="left:1104px;top:580px;width:6px;height:16px;background:#00ff00;z-index:6;"></div>
<div style="left:1110px;top:580px;width:3px;height:16px;background:#00ffff;z-index:6;"></div>
<div style="left:1113px;top:580px;width:3px;height:16px;background:#6a5acd;z-index:6;"></div>
<div style="left:1116px;top:580px;width:3px;height:16px;background:#000080;z-index:6;"></div>
<div style="left:1119px;top:580px;width:3px;height:16px;background:#ff0000;z-index:6;"></div>
<span class="t" style="left:1382.30px;top:580.12px;font-size:11.2px;color:#111111;line-height:16px;letter-spacing:-0.109px;z-index:6;">9.3600</span>
<span class="t" style="left:1447.50px;top:580.12px;font-size:11.2px;color:#000080;line-height:16px;letter-spacing:-0.289px;z-index:6;">22302</span>
<span class="t" style="left:1543.50px;top:580.12px;font-size:11.2px;color:#111111;line-height:16px;letter-spacing:0.133px;z-index:6;">crypta</span>
<span class="t" style="left:1645.50px;top:580.12px;font-size:11.2px;color:#111111;line-height:16px;letter-spacing:0.501px;z-index:6;">psql</span>
<div style="left:1099px;top:599px;width:278px;height:18px;border:1px solid;border-color:#4d4d4d #b4b4b4 #b4b4b4 #4d4d4d;z-index:5;"></div>
<div style="left:1381px;top:599px;width:60px;height:18px;border:1px solid;border-color:#4d4d4d #b4b4b4 #b4b4b4 #4d4d4d;z-index:5;"></div>
<div style="left:1445px;top:599px;width:93px;height:18px;border:1px solid;border-color:#4d4d4d #b4b4b4 #b4b4b4 #4d4d4d;z-index:5;"></div>
<div style="left:1542px;top:599px;width:98px;height:18px;border:1px solid;border-color:#4d4d4d #b4b4b4 #b4b4b4 #4d4d4d;z-index:5;"></div>
<div style="left:1644px;top:599px;width:240px;height:18px;border:1px solid;border-color:#4d4d4d #b4b4b4 #b4b4b4 #4d4d4d;z-index:5;"></div>
<div style="left:1101px;top:601px;width:3px;height:16px;background:#006400;z-index:6;"></div>
<div style="left:1104px;top:601px;width:6px;height:16px;background:#00ff00;z-index:6;"></div>
<div style="left:1110px;top:601px;width:3px;height:16px;background:#00ffff;z-index:6;"></div>
<div style="left:1113px;top:601px;width:3px;height:16px;background:#6a5acd;z-index:6;"></div>
<div style="left:1116px;top:601px;width:3px;height:16px;background:#000080;z-index:6;"></div>
<div style="left:1119px;top:601px;width:3px;height:16px;background:#ff0000;z-index:6;"></div>
<span class="t" style="left:1382.30px;top:601.12px;font-size:11.2px;color:#111111;line-height:16px;letter-spacing:-0.109px;z-index:6;">9.3600</span>
<span class="t" style="left:1447.50px;top:601.12px;font-size:11.2px;color:#000080;line-height:16px;letter-spacing:-0.289px;z-index:6;">20081</span>
<span class="t" style="left:1543.50px;top:601.12px;font-size:11.2px;color:#111111;line-height:16px;letter-spacing:0.230px;z-index:6;">postgres</span>
<span class="t" style="left:1645.50px;top:601.12px;font-size:11.2px;color:#111111;line-height:16px;letter-spacing:0.166px;z-index:6;">pg_wait_sampling collector</span>
<div style="left:1099px;top:621px;width:278px;height:18px;border:1px solid;border-color:#4d4d4d #b4b4b4 #b4b4b4 #4d4d4d;z-index:5;"></div>
<div style="left:1381px;top:621px;width:60px;height:18px;border:1px solid;border-color:#4d4d4d #b4b4b4 #b4b4b4 #4d4d4d;z-index:5;"></div>
<div style="left:1445px;top:621px;width:93px;height:18px;border:1px solid;border-color:#4d4d4d #b4b4b4 #b4b4b4 #4d4d4d;z-index:5;"></div>
<div style="left:1542px;top:621px;width:98px;height:18px;border:1px solid;border-color:#4d4d4d #b4b4b4 #b4b4b4 #4d4d4d;z-index:5;"></div>
<div style="left:1644px;top:621px;width:240px;height:18px;border:1px solid;border-color:#4d4d4d #b4b4b4 #b4b4b4 #4d4d4d;z-index:5;"></div>
<div style="left:1101px;top:623px;width:3px;height:16px;background:#006400;z-index:6;"></div>
<div style="left:1104px;top:623px;width:6px;height:16px;background:#00ff00;z-index:6;"></div>
<div style="left:1110px;top:623px;width:3px;height:16px;background:#00ffff;z-index:6;"></div>
<div style="left:1113px;top:623px;width:3px;height:16px;background:#6a5acd;z-index:6;"></div>
<div style="left:1116px;top:623px;width:3px;height:16px;background:#000080;z-index:6;"></div>
<div style="left:1119px;top:623px;width:3px;height:16px;background:#ff0000;z-index:6;"></div>
<span class="t" style="left:1382.30px;top:623.12px;font-size:11.2px;color:#111111;line-height:16px;letter-spacing:-0.109px;z-index:6;">9.3600</span>
<span class="t" style="left:1447.50px;top:623.12px;font-size:11.2px;color:#000080;line-height:16px;letter-spacing:-0.289px;z-index:6;">20080</span>
<div style="left:1099px;top:642px;width:278px;height:18px;border:1px solid;border-color:#4d4d4d #b4b4b4 #b4b4b4 #4d4d4d;z-index:5;"></div>
<div style="left:1381px;top:642px;width:60px;height:18px;border:1px solid;border-color:#4d4d4d #b4b4b4 #b4b4b4 #4d4d4d;z-index:5;"></div>
<div style="left:1445px;top:642px;width:93px;height:18px;border:1px solid;border-color:#4d4d4d #b4b4b4 #b4b4b4 #4d4d4d;z-index:5;"></div>
<div style="left:1542px;top:642px;width:98px;height:18px;border:1px solid;border-color:#4d4d4d #b4b4b4 #b4b4b4 #4d4d4d;z-index:5;"></div>
<div style="left:1644px;top:642px;width:240px;height:18px;border:1px solid;border-color:#4d4d4d #b4b4b4 #b4b4b4 #4d4d4d;z-index:5;"></div>
<div style="left:1101px;top:644px;width:3px;height:16px;background:#006400;z-index:6;"></div>
<div style="left:1104px;top:644px;width:6px;height:16px;background:#00ff00;z-index:6;"></div>
<div style="left:1110px;top:644px;width:3px;height:16px;background:#00ffff;z-index:6;"></div>
<div style="left:1113px;top:644px;width:3px;height:16px;background:#6a5acd;z-index:6;"></div>
<div style="left:1116px;top:644px;width:3px;height:16px;background:#000080;z-index:6;"></div>
<div style="left:1119px;top:644px;width:3px;height:16px;background:#ff0000;z-index:6;"></div>
<span class="t" style="left:1382.30px;top:644.12px;font-size:11.2px;color:#111111;line-height:16px;letter-spacing:-0.109px;z-index:6;">9.3600</span>
<span class="t" style="left:1447.50px;top:644.12px;font-size:11.2px;color:#000080;line-height:16px;letter-spacing:-0.289px;z-index:6;">20083</span>
<span class="t" style="left:1543.50px;top:644.12px;font-size:11.2px;color:#111111;line-height:16px;letter-spacing:0.230px;z-index:6;">postgres</span>
<div style="left:1099px;top:663px;width:278px;height:18px;border:1px solid;border-color:#4d4d4d #b4b4b4 #b4b4b4 #4d4d4d;z-index:5;"></div>
<div style="left:1381px;top:663px;width:60px;height:18px;border:1px solid;border-color:#4d4d4d #b4b4b4 #b4b4b4 #4d4d4d;z-index:5;"></div>
<div style="left:1445px;top:663px;width:93px;height:18px;border:1px solid;border-color:#4d4d4d #b4b4b4 #b4b4b4 #4d4d4d;z-index:5;"></div>
<div style="left:1542px;top:663px;width:98px;height:18px;border:1px solid;border-color:#4d4d4d #b4b4b4 #b4b4b4 #4d4d4d;z-index:5;"></div>
<div style="left:1644px;top:663px;width:240px;height:18px;border:1px solid;border-color:#4d4d4d #b4b4b4 #b4b4b4 #4d4d4d;z-index:5;"></div>
<div style="left:1101px;top:665px;width:3px;height:16px;background:#006400;z-index:6;"></div>
<div style="left:1104px;top:665px;width:6px;height:16px;background:#00ff00;z-index:6;"></div>
<div style="left:1110px;top:665px;width:3px;height:16px;background:#00ffff;z-index:6;"></div>
<div style="left:1113px;top:665px;width:3px;height:16px;background:#6a5acd;z-index:6;"></div>
<div style="left:1116px;top:665px;width:3px;height:16px;background:#000080;z-index:6;"></div>
<div style="left:1119px;top:665px;width:3px;height:16px;background:#ff0000;z-index:6;"></div>
<span class="t" style="left:1382.30px;top:665.12px;font-size:11.2px;color:#111111;line-height:16px;letter-spacing:-0.109px;z-index:6;">9.3600</span>
<span class="t" style="left:1447.50px;top:665.12px;font-size:11.2px;color:#000080;line-height:16px;letter-spacing:-0.289px;z-index:6;">20082</span>
<span class="t" style="left:1543.50px;top:665.12px;font-size:11.2px;color:#111111;line-height:16px;letter-spacing:0.230px;z-index:6;">postgres</span>
<span class="t" style="left:1645.50px;top:665.12px;font-size:11.2px;color:#111111;line-height:16px;letter-spacing:0.171px;z-index:6;">pg_cron scheduler</span>
<div style="left:1099px;top:684px;width:278px;height:18px;border:1px solid;border-color:#4d4d4d #b4b4b4 #b4b4b4 #4d4d4d;z-index:5;"></div>
<div style="left:1381px;top:684px;width:60px;height:18px;border:1px solid;border-color:#4d4d4d #b4b4b4 #b4b4b4 #4d4d4d;z-index:5;"></div>
<div style="left:1445px;top:684px;width:93px;height:18px;border:1px solid;border-color:#4d4d4d #b4b4b4 #b4b4b4 #4d4d4d;z-index:5;"></div>
<div style="left:1542px;top:684px;width:98px;height:18px;border:1px solid;border-color:#4d4d4d #b4b4b4 #b4b4b4 #4d4d4d;z-index:5;"></div>
<div style="left:1644px;top:684px;width:240px;height:18px;border:1px solid;border-color:#4d4d4d #b4b4b4 #b4b4b4 #4d4d4d;z-index:5;"></div>
<div style="left:1101px;top:686px;width:3px;height:16px;background:#006400;z-index:6;"></div>
<div style="left:1104px;top:686px;width:6px;height:16px;background:#00ff00;z-index:6;"></div>
<div style="left:1110px;top:686px;width:3px;height:16px;background:#00ffff;z-index:6;"></div>
<div style="left:1113px;top:686px;width:3px;height:16px;background:#6a5acd;z-index:6;"></div>
<div style="left:1116px;top:686px;width:3px;height:16px;background:#000080;z-index:6;"></div>
<div style="left:1119px;top:686px;width:3px;height:16px;background:#ff0000;z-index:6;"></div>
<span class="t" style="left:1382.30px;top:686.12px;font-size:11.2px;color:#111111;line-height:16px;letter-spacing:-0.109px;z-index:6;">9.3600</span>
<span class="t" style="left:1447.50px;top:686.12px;font-size:11.2px;color:#000080;line-height:16px;letter-spacing:-0.289px;z-index:6;">20077</span>
<div style="left:1099px;top:706px;width:278px;height:18px;border:1px solid;border-color:#4d4d4d #b4b4b4 #b4b4b4 #4d4d4d;z-index:5;"></div>
<div style="left:1381px;top:706px;width:60px;height:18px;border:1px solid;border-color:#4d4d4d #b4b4b4 #b4b4b4 #4d4d4d;z-index:5;"></div>
<div style="left:1445px;top:706px;width:93px;height:18px;border:1px solid;border-color:#4d4d4d #b4b4b4 #b4b4b4 #4d4d4d;z-index:5;"></div>
<div style="left:1542px;top:706px;width:98px;height:18px;border:1px solid;border-color:#4d4d4d #b4b4b4 #b4b4b4 #4d4d4d;z-index:5;"></div>
<div style="left:1644px;top:706px;width:240px;height:18px;border:1px solid;border-color:#4d4d4d #b4b4b4 #b4b4b4 #4d4d4d;z-index:5;"></div>
<div style="left:1101px;top:708px;width:3px;height:16px;background:#006400;z-index:6;"></div>
<div style="left:1104px;top:708px;width:6px;height:16px;background:#00ff00;z-index:6;"></div>
<div style="left:1110px;top:708px;width:3px;height:16px;background:#00ffff;z-index:6;"></div>
<div style="left:1113px;top:708px;width:3px;height:16px;background:#6a5acd;z-index:6;"></div>
<div style="left:1116px;top:708px;width:3px;height:16px;background:#000080;z-index:6;"></div>
<div style="left:1119px;top:708px;width:3px;height:16px;background:#ff0000;z-index:6;"></div>
<span class="t" style="left:1382.30px;top:708.12px;font-size:11.2px;color:#111111;line-height:16px;letter-spacing:-0.109px;z-index:6;">9.3600</span>
<span class="t" style="left:1447.50px;top:708.12px;font-size:11.2px;color:#000080;line-height:16px;letter-spacing:-0.289px;z-index:6;">20076</span>
<div style="left:1099px;top:727px;width:278px;height:18px;border:1px solid;border-color:#4d4d4d #b4b4b4 #b4b4b4 #4d4d4d;z-index:5;"></div>
<div style="left:1381px;top:727px;width:60px;height:18px;border:1px solid;border-color:#4d4d4d #b4b4b4 #b4b4b4 #4d4d4d;z-index:5;"></div>
<div style="left:1445px;top:727px;width:93px;height:18px;border:1px solid;border-color:#4d4d4d #b4b4b4 #b4b4b4 #4d4d4d;z-index:5;"></div>
<div style="left:1542px;top:727px;width:98px;height:18px;border:1px solid;border-color:#4d4d4d #b4b4b4 #b4b4b4 #4d4d4d;z-index:5;"></div>
<div style="left:1644px;top:727px;width:240px;height:18px;border:1px solid;border-color:#4d4d4d #b4b4b4 #b4b4b4 #4d4d4d;z-index:5;"></div>
<div style="left:1101px;top:729px;width:3px;height:16px;background:#006400;z-index:6;"></div>
<div style="left:1104px;top:729px;width:3px;height:16px;background:#00ff00;z-index:6;"></div>
<div style="left:1107px;top:729px;width:3px;height:16px;background:#00ffff;z-index:6;"></div>
<div style="left:1110px;top:729px;width:3px;height:16px;background:#6a5acd;z-index:6;"></div>
<span class="t" style="left:1382.30px;top:729.12px;font-size:11.2px;color:#111111;line-height:16px;letter-spacing:-0.109px;z-index:6;">2.3148</span>
<span class="t" style="left:1447.50px;top:729.12px;font-size:11.2px;color:#000080;line-height:16px;letter-spacing:-0.289px;z-index:6;">16790</span>
<span class="t" style="left:1543.50px;top:729.12px;font-size:11.2px;color:#111111;line-height:16px;letter-spacing:0.133px;z-index:6;">crypta</span>
<span class="t" style="left:1645.50px;top:729.12px;font-size:11.2px;color:#111111;line-height:16px;letter-spacing:-0.047px;z-index:6;">DBeaver 25.3.4 - Metadata</span>
<div style="left:1099px;top:748px;width:278px;height:18px;border:1px solid;border-color:#4d4d4d #b4b4b4 #b4b4b4 #4d4d4d;z-index:5;"></div>
<div style="left:1381px;top:748px;width:60px;height:18px;border:1px solid;border-color:#4d4d4d #b4b4b4 #b4b4b4 #4d4d4d;z-index:5;"></div>
<div style="left:1445px;top:748px;width:93px;height:18px;border:1px solid;border-color:#4d4d4d #b4b4b4 #b4b4b4 #4d4d4d;z-index:5;"></div>
<div style="left:1542px;top:748px;width:98px;height:18px;border:1px solid;border-color:#4d4d4d #b4b4b4 #b4b4b4 #4d4d4d;z-index:5;"></div>
<div style="left:1644px;top:748px;width:240px;height:18px;border:1px solid;border-color:#4d4d4d #b4b4b4 #b4b4b4 #4d4d4d;z-index:5;"></div>
<div style="left:1101px;top:750px;width:3px;height:16px;background:#006400;z-index:6;"></div>
<div style="left:1104px;top:750px;width:3px;height:16px;background:#00ff00;z-index:6;"></div>
<div style="left:1107px;top:750px;width:3px;height:16px;background:#00ffff;z-index:6;"></div>
<div style="left:1110px;top:750px;width:3px;height:16px;background:#6a5acd;z-index:6;"></div>
<span class="t" style="left:1382.30px;top:750.12px;font-size:11.2px;color:#111111;line-height:16px;letter-spacing:-0.109px;z-index:6;">2.3148</span>
<span class="t" style="left:1447.50px;top:750.12px;font-size:11.2px;color:#000080;line-height:16px;letter-spacing:-0.289px;z-index:6;">16789</span>
<span class="t" style="left:1543.50px;top:750.12px;font-size:11.2px;color:#111111;line-height:16px;letter-spacing:0.133px;z-index:6;">crypta</span>
<span class="t" style="left:1645.50px;top:750.12px;font-size:11.2px;color:#111111;line-height:16px;letter-spacing:-0.095px;z-index:6;">DBeaver 25.3.4 - Main</span>
<div style="left:1099px;top:769px;width:278px;height:18px;border:1px solid;border-color:#4d4d4d #b4b4b4 #b4b4b4 #4d4d4d;z-index:5;"></div>
<div style="left:1381px;top:769px;width:60px;height:18px;border:1px solid;border-color:#4d4d4d #b4b4b4 #b4b4b4 #4d4d4d;z-index:5;"></div>
<div style="left:1445px;top:769px;width:93px;height:18px;border:1px solid;border-color:#4d4d4d #b4b4b4 #b4b4b4 #4d4d4d;z-index:5;"></div>
<div style="left:1542px;top:769px;width:98px;height:18px;border:1px solid;border-color:#4d4d4d #b4b4b4 #b4b4b4 #4d4d4d;z-index:5;"></div>
<div style="left:1644px;top:769px;width:240px;height:18px;border:1px solid;border-color:#4d4d4d #b4b4b4 #b4b4b4 #4d4d4d;z-index:5;"></div>
<div style="left:1101px;top:771px;width:3px;height:16px;background:#006400;z-index:6;"></div>
<div style="left:1104px;top:771px;width:3px;height:16px;background:#00ff00;z-index:6;"></div>
<div style="left:1107px;top:771px;width:3px;height:16px;background:#00ffff;z-index:6;"></div>
<div style="left:1110px;top:771px;width:3px;height:16px;background:#6a5acd;z-index:6;"></div>
<span class="t" style="left:1382.30px;top:771.12px;font-size:11.2px;color:#111111;line-height:16px;letter-spacing:-0.109px;z-index:6;">2.2956</span>
<span class="t" style="left:1447.50px;top:771.12px;font-size:11.2px;color:#000080;line-height:16px;letter-spacing:-0.289px;z-index:6;">17695</span>
<span class="t" style="left:1543.50px;top:771.12px;font-size:11.2px;color:#111111;line-height:16px;letter-spacing:0.133px;z-index:6;">crypta</span>
<span class="t" style="left:1645.50px;top:771.12px;font-size:11.2px;color:#111111;line-height:16px;letter-spacing:-0.047px;z-index:6;">DBeaver 25.3.4 - Metadata</span>
<div style="left:1099px;top:790px;width:278px;height:18px;border:1px solid;border-color:#4d4d4d #b4b4b4 #b4b4b4 #4d4d4d;z-index:5;"></div>
<div style="left:1381px;top:790px;width:60px;height:18px;border:1px solid;border-color:#4d4d4d #b4b4b4 #b4b4b4 #4d4d4d;z-index:5;"></div>
<div style="left:1445px;top:790px;width:93px;height:18px;border:1px solid;border-color:#4d4d4d #b4b4b4 #b4b4b4 #4d4d4d;z-index:5;"></div>
<div style="left:1542px;top:790px;width:98px;height:18px;border:1px solid;border-color:#4d4d4d #b4b4b4 #b4b4b4 #4d4d4d;z-index:5;"></div>
<div style="left:1644px;top:790px;width:240px;height:18px;border:1px solid;border-color:#4d4d4d #b4b4b4 #b4b4b4 #4d4d4d;z-index:5;"></div>
<div style="left:1101px;top:792px;width:3px;height:16px;background:#006400;z-index:6;"></div>
<div style="left:1104px;top:792px;width:3px;height:16px;background:#00ff00;z-index:6;"></div>
<div style="left:1107px;top:792px;width:3px;height:16px;background:#00ffff;z-index:6;"></div>
<div style="left:1110px;top:792px;width:3px;height:16px;background:#6a5acd;z-index:6;"></div>
<span class="t" style="left:1382.30px;top:792.12px;font-size:11.2px;color:#111111;line-height:16px;letter-spacing:-0.109px;z-index:6;">2.2956</span>
<span class="t" style="left:1447.50px;top:792.12px;font-size:11.2px;color:#000080;line-height:16px;letter-spacing:-0.289px;z-index:6;">17694</span>
<span class="t" style="left:1543.50px;top:792.12px;font-size:11.2px;color:#111111;line-height:16px;letter-spacing:0.133px;z-index:6;">crypta</span>
<span class="t" style="left:1645.50px;top:792.12px;font-size:11.2px;color:#111111;line-height:16px;letter-spacing:-0.095px;z-index:6;">DBeaver 25.3.4 - Main</span>
<div style="left:1099px;top:812px;width:278px;height:18px;border:1px solid;border-color:#4d4d4d #b4b4b4 #b4b4b4 #4d4d4d;z-index:5;"></div>
<div style="left:1381px;top:812px;width:60px;height:18px;border:1px solid;border-color:#4d4d4d #b4b4b4 #b4b4b4 #4d4d4d;z-index:5;"></div>
<div style="left:1445px;top:812px;width:93px;height:18px;border:1px solid;border-color:#4d4d4d #b4b4b4 #b4b4b4 #4d4d4d;z-index:5;"></div>
<div style="left:1542px;top:812px;width:98px;height:18px;border:1px solid;border-color:#4d4d4d #b4b4b4 #b4b4b4 #4d4d4d;z-index:5;"></div>
<div style="left:1644px;top:812px;width:240px;height:18px;border:1px solid;border-color:#4d4d4d #b4b4b4 #b4b4b4 #4d4d4d;z-index:5;"></div>
<div style="left:1101px;top:814px;width:3px;height:16px;background:#006400;z-index:6;"></div>
<div style="left:1104px;top:814px;width:3px;height:16px;background:#00ff00;z-index:6;"></div>
<div style="left:1107px;top:814px;width:3px;height:16px;background:#00ffff;z-index:6;"></div>
<div style="left:1110px;top:814px;width:3px;height:16px;background:#6a5acd;z-index:6;"></div>
<span class="t" style="left:1382.30px;top:814.12px;font-size:11.2px;color:#111111;line-height:16px;letter-spacing:-0.109px;z-index:6;">2.2956</span>
<span class="t" style="left:1447.50px;top:814.12px;font-size:11.2px;color:#000080;line-height:16px;letter-spacing:-0.289px;z-index:6;">17692</span>
<span class="t" style="left:1543.50px;top:814.12px;font-size:11.2px;color:#111111;line-height:16px;letter-spacing:0.133px;z-index:6;">crypta</span>
<span class="t" style="left:1645.50px;top:814.12px;font-size:11.2px;color:#111111;line-height:16px;letter-spacing:-0.169px;z-index:6;">DBeaver 25.3.4 - SQLEditor</span>
<div style="left:1099px;top:833px;width:278px;height:18px;border:1px solid;border-color:#4d4d4d #b4b4b4 #b4b4b4 #4d4d4d;z-index:5;"></div>
<div style="left:1381px;top:833px;width:60px;height:18px;border:1px solid;border-color:#4d4d4d #b4b4b4 #b4b4b4 #4d4d4d;z-index:5;"></div>
<div style="left:1445px;top:833px;width:93px;height:18px;border:1px solid;border-color:#4d4d4d #b4b4b4 #b4b4b4 #4d4d4d;z-index:5;"></div>
<div style="left:1542px;top:833px;width:98px;height:18px;border:1px solid;border-color:#4d4d4d #b4b4b4 #b4b4b4 #4d4d4d;z-index:5;"></div>
<div style="left:1644px;top:833px;width:240px;height:18px;border:1px solid;border-color:#4d4d4d #b4b4b4 #b4b4b4 #4d4d4d;z-index:5;"></div>
<div style="left:1101px;top:835px;width:3px;height:16px;background:#006400;z-index:6;"></div>
<div style="left:1104px;top:835px;width:3px;height:16px;background:#00ff00;z-index:6;"></div>
<div style="left:1107px;top:835px;width:3px;height:16px;background:#00ffff;z-index:6;"></div>
<div style="left:1110px;top:835px;width:3px;height:16px;background:#6a5acd;z-index:6;"></div>
<span class="t" style="left:1382.30px;top:835.12px;font-size:11.2px;color:#111111;line-height:16px;letter-spacing:-0.109px;z-index:6;">2.1914</span>
<span class="t" style="left:1447.50px;top:835.12px;font-size:11.2px;color:#000080;line-height:16px;letter-spacing:-0.289px;z-index:6;">23928</span>
<span class="t" style="left:1543.50px;top:835.12px;font-size:11.2px;color:#111111;line-height:16px;letter-spacing:0.133px;z-index:6;">crypta</span>
<span class="t" style="left:1645.50px;top:835.12px;font-size:11.2px;color:#111111;line-height:16px;letter-spacing:-0.169px;z-index:6;">DBeaver 25.3.4 - SQLEditor</span>
<div style="left:1099px;top:854px;width:278px;height:18px;border:1px solid;border-color:#4d4d4d #b4b4b4 #b4b4b4 #4d4d4d;z-index:5;"></div>
<div style="left:1381px;top:854px;width:60px;height:18px;border:1px solid;border-color:#4d4d4d #b4b4b4 #b4b4b4 #4d4d4d;z-index:5;"></div>
<div style="left:1445px;top:854px;width:93px;height:18px;border:1px solid;border-color:#4d4d4d #b4b4b4 #b4b4b4 #4d4d4d;z-index:5;"></div>
<div style="left:1542px;top:854px;width:98px;height:18px;border:1px solid;border-color:#4d4d4d #b4b4b4 #b4b4b4 #4d4d4d;z-index:5;"></div>
<div style="left:1644px;top:854px;width:240px;height:18px;border:1px solid;border-color:#4d4d4d #b4b4b4 #b4b4b4 #4d4d4d;z-index:5;"></div>
<div style="left:1101px;top:856px;width:3px;height:16px;background:#006400;z-index:6;"></div>
<div style="left:1104px;top:856px;width:3px;height:16px;background:#00ff00;z-index:6;"></div>
<div style="left:1107px;top:856px;width:3px;height:16px;background:#00ffff;z-index:6;"></div>
<div style="left:1110px;top:856px;width:3px;height:16px;background:#6a5acd;z-index:6;"></div>
<span class="t" style="left:1382.30px;top:856.12px;font-size:11.2px;color:#111111;line-height:16px;letter-spacing:-0.109px;z-index:6;">1.3308</span>
<span class="t" style="left:1447.50px;top:856.12px;font-size:11.2px;color:#000080;line-height:16px;letter-spacing:-0.289px;z-index:6;">18424</span>
<span class="t" style="left:1543.50px;top:856.12px;font-size:11.2px;color:#111111;line-height:16px;letter-spacing:0.188px;z-index:6;">grafana_ro</span>
<div style="left:1099px;top:875px;width:278px;height:18px;border:1px solid;border-color:#4d4d4d #b4b4b4 #b4b4b4 #4d4d4d;z-index:5;"></div>
<div style="left:1381px;top:875px;width:60px;height:18px;border:1px solid;border-color:#4d4d4d #b4b4b4 #b4b4b4 #4d4d4d;z-index:5;"></div>
<div style="left:1445px;top:875px;width:93px;height:18px;border:1px solid;border-color:#4d4d4d #b4b4b4 #b4b4b4 #4d4d4d;z-index:5;"></div>
<div style="left:1542px;top:875px;width:98px;height:18px;border:1px solid;border-color:#4d4d4d #b4b4b4 #b4b4b4 #4d4d4d;z-index:5;"></div>
<div style="left:1644px;top:875px;width:240px;height:18px;border:1px solid;border-color:#4d4d4d #b4b4b4 #b4b4b4 #4d4d4d;z-index:5;"></div>
<div style="left:1101px;top:877px;width:3px;height:16px;background:#006400;z-index:6;"></div>
<div style="left:1104px;top:877px;width:3px;height:16px;background:#00ff00;z-index:6;"></div>
<div style="left:1107px;top:877px;width:3px;height:16px;background:#00ffff;z-index:6;"></div>
<div style="left:1110px;top:877px;width:3px;height:16px;background:#6a5acd;z-index:6;"></div>
<span class="t" style="left:1382.30px;top:877.12px;font-size:11.2px;color:#111111;line-height:16px;letter-spacing:-0.109px;z-index:6;">1.1348</span>
<span class="t" style="left:1447.50px;top:877.12px;font-size:11.2px;color:#000080;line-height:16px;letter-spacing:-0.289px;z-index:6;">23141</span>
<span class="t" style="left:1543.50px;top:877.12px;font-size:11.2px;color:#111111;line-height:16px;letter-spacing:0.188px;z-index:6;">grafana_ro</span>
</div>
</body></html>
